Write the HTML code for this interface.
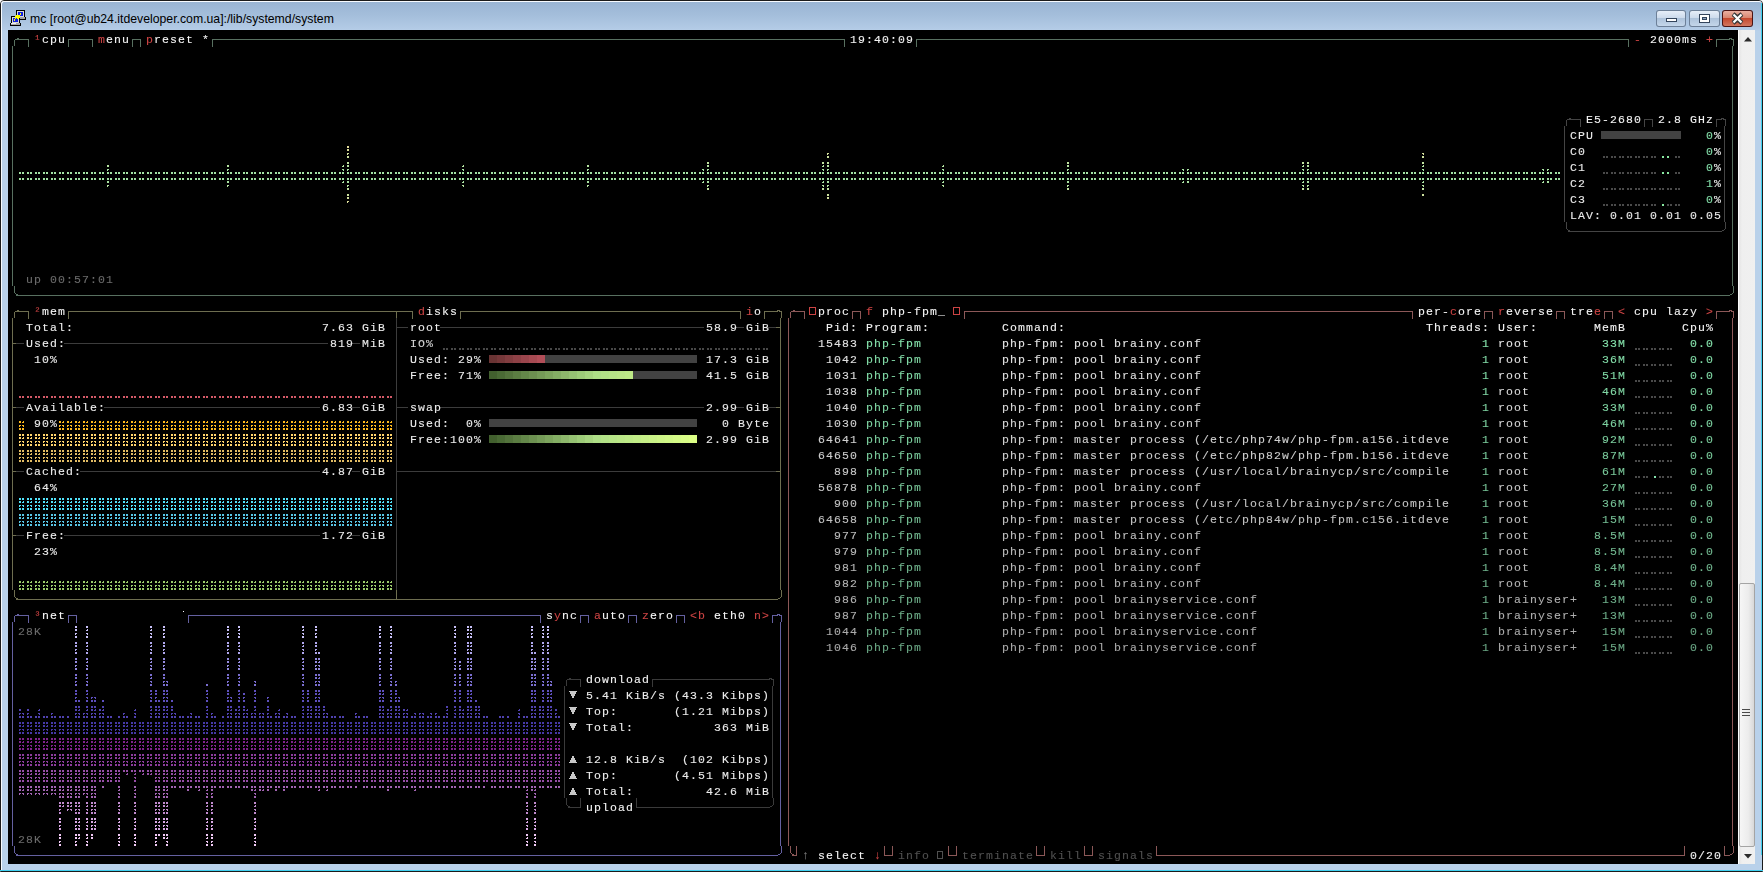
<!DOCTYPE html>
<html><head><meta charset="utf-8"><style>
html,body{margin:0;padding:0;width:1763px;height:872px;overflow:hidden;background:#ffffff;}
#frame{position:absolute;left:0;top:0;width:1763px;height:872px;box-sizing:border-box;border:1px solid #1b1b1b;border-radius:4px 4px 0 0;
 background:linear-gradient(to bottom,#99b4d3 0px,#a4bedb 14px,#b3cbe6 28px,#b9d1ea 30px,#b9d1ea 100%);}
#inner{position:absolute;left:0;top:0;right:0;bottom:0;border-left:1px solid #f8fbff;border-top:1px solid #f8fbff;border-radius:3px 3px 0 0;}
#ttl{position:absolute;left:30px;top:11px;font-family:"Liberation Sans",sans-serif;font-size:12.25px;line-height:16px;color:#000;white-space:pre;}
#term{position:absolute;left:8px;top:30px;width:1730px;height:834px;background:#000;}
#sb{position:absolute;left:1738px;top:30px;width:17px;height:834px;background:linear-gradient(to right,#fdfdfd 0,#fdfdfd 1px,#e4e4e4 1px,#efefef 4px,#f0f0f0 100%);}
.ov{position:absolute;left:0;top:0;}
.t{position:absolute;font-family:"Liberation Mono",monospace;font-size:11.5px;letter-spacing:1.1px;line-height:16px;height:16px;white-space:pre;}
#txt{position:absolute;left:2px;top:2px;will-change:transform;}
.t{-webkit-text-stroke:0.1px currentColor;}
.btn{position:absolute;top:10px;height:16px;border:1px solid #6a7d94;border-radius:3px;box-sizing:border-box;
 background:linear-gradient(to bottom,#dfe9f5 0%,#c5d6ea 45%,#a9bfd8 50%,#b9cee5 100%);}
#bclose{border-color:#4e1a1a;background:linear-gradient(to bottom,#e8a493 0%,#d77a62 45%,#c2442a 50%,#d0705a 100%);}
#botline{position:absolute;left:0;top:870px;width:1763px;height:1px;background:#3fd0f0;}
#rline{position:absolute;left:1761px;top:3px;width:1px;height:852px;background:#3fd0f0;}
</style></head><body>
<div id="frame"><div id="inner"></div></div>
<div id="botline"></div><div id="rline"></div>
<div id="ttl">mc [root@ub24.itdeveloper.com.ua]:/lib/systemd/system</div>
<svg style="position:absolute;left:0;top:0" width="1763" height="30" viewBox="0 0 1763 30" shape-rendering="crispEdges">
 <!-- putty icon -->
 <rect x="16" y="10" width="9" height="8" fill="#000"/><rect x="17" y="11" width="7" height="6" fill="#d8d8d8"/><rect x="18" y="12" width="5" height="4" fill="#1020e0"/>
 <rect x="19" y="17" width="7" height="3" fill="#000"/><rect x="20" y="17" width="5" height="2" fill="#a0a0a0"/>
 <rect x="11" y="16" width="9" height="8" fill="#000"/><rect x="12" y="17" width="7" height="6" fill="#d8d8d8"/><rect x="13" y="18" width="5" height="4" fill="#1020e0"/>
 <rect x="10" y="23" width="11" height="3" fill="#000"/><rect x="11" y="23" width="9" height="2" fill="#a8a8a8"/><rect x="11" y="23" width="5" height="1" fill="#f0f0f0"/>
 <path d="M15 16h5v2h-5z M16 15h3v1h-3z M17 18h2v1h-2z" fill="#ffff00"/>
 <path d="M20 13h1v2h-1z M14 19h1v2h-1z M19 15h1v1h-1z M15 18h1v1h-1z" fill="#ffff00"/>
 <!-- min button -->
 <rect x="1656" y="10" width="30" height="17" rx="3" fill="#6d8098" shape-rendering="auto"/>
 <rect x="1657" y="11" width="28" height="15" rx="2" fill="url(#gb)" shape-rendering="auto"/>
 <rect x="1666" y="18" width="11" height="4" fill="#34455c"/><rect x="1667" y="19" width="9" height="2" fill="#fff"/>
 <!-- max button -->
 <rect x="1689" y="10" width="31" height="17" rx="3" fill="#6d8098" shape-rendering="auto"/>
 <rect x="1690" y="11" width="29" height="15" rx="2" fill="url(#gb)" shape-rendering="auto"/>
 <rect x="1699" y="14" width="11" height="9" fill="#34455c"/><rect x="1700" y="15" width="9" height="7" fill="#fff"/><rect x="1702" y="17" width="5" height="3" fill="#34455c"/><rect x="1703" y="18" width="3" height="1" fill="#8ea4c0"/>
 <!-- close button -->
 <rect x="1722" y="10" width="31" height="17" rx="3" fill="#4a1414" shape-rendering="auto"/>
 <rect x="1723" y="11" width="29" height="15" rx="2" fill="url(#gc)" shape-rendering="auto"/>
 <path d="M1733 14l4.5 3.5 4.5-3.5 M1733 23l4.5-3.5 4.5 3.5 M1737.5 17.5v2" stroke="#3a3a3a" stroke-width="4.2" fill="none" shape-rendering="auto"/>
 <path d="M1733.5 14.5l8 8 M1741.5 14.5l-8 8" stroke="#3a3a3a" stroke-width="4" fill="none" shape-rendering="auto"/>
 <path d="M1733.5 14.5l8 8 M1741.5 14.5l-8 8" stroke="#ffffff" stroke-width="2.2" fill="none" shape-rendering="auto"/>
 <defs>
  <linearGradient id="gb" x1="0" y1="0" x2="0" y2="1"><stop offset="0" stop-color="#e6eef8"/><stop offset="0.45" stop-color="#cddbec"/><stop offset="0.5" stop-color="#aec3db"/><stop offset="1" stop-color="#c4d6ea"/></linearGradient>
  <linearGradient id="gc" x1="0" y1="0" x2="0" y2="1"><stop offset="0" stop-color="#eab0a2"/><stop offset="0.45" stop-color="#d98670"/><stop offset="0.5" stop-color="#c4482e"/><stop offset="1" stop-color="#d2775f"/></linearGradient>
 </defs>
</svg>
<div id="term"></div>
<div id="sb">
 <svg style="position:absolute;left:0;top:0" width="17" height="834" viewBox="0 0 17 834">
  <path d="M6 11.5h8l-4-4.5z" fill="#2a2a2a"/>
  <path d="M6 824h8l-4 4.5z" fill="#2a2a2a"/>
 </svg>
 <div style="position:absolute;left:1px;top:553px;width:16px;height:264px;box-sizing:border-box;border:1px solid #a4a4a4;border-radius:2px;background:linear-gradient(to right,#f6f6f6,#ececec 60%,#d8d8d8);"></div>
 <div style="position:absolute;left:4px;top:679px;width:8px;height:1px;background:#4a4a4a;box-shadow:0 3px 0 #4a4a4a,0 6px 0 #4a4a4a;"></div>
</div>
<svg class="ov" width="1763" height="872" viewBox="0 0 1763 872" shape-rendering="crispEdges">
<path fill="#587060" d="M15 39h14v1h-14zM68 39h25v1h-25zM132 39h9v1h-9zM212 39h633v1h-633zM916 39h713v1h-713zM1716 39h14v1h-14zM1731 39h3v1h-3zM16 295h1714v1h-1714zM17 38h2v1h-2zM1729 38h3v1h-3zM15 293h1v1h-1zM1732 293h1v1h-1zM16 294h2v1h-2zM1730 294h2v1h-2zM28 39h1v8h-1zM68 39h1v8h-1zM92 39h1v8h-1zM132 39h1v8h-1zM140 39h1v8h-1zM212 39h1v8h-1zM844 39h1v8h-1zM916 39h1v8h-1zM1628 39h1v8h-1zM1716 39h1v8h-1zM12 46h1v240h-1zM1732 46h1v240h-1zM14 40h1v6h-1zM14 286h1v7h-1zM1733 40h1v6h-1zM1733 286h1v7h-1z"/>
<path fill="#444444" d="M1567 119h14v1h-14zM1644 119h9v1h-9zM1716 119h6v1h-6zM1723 119h3v1h-3zM1568 231h154v1h-154zM1569 118h2v1h-2zM1721 118h3v1h-3zM1567 229h1v1h-1zM1724 229h1v1h-1zM1568 230h2v1h-2zM1722 230h2v1h-2zM1580 119h1v8h-1zM1644 119h1v8h-1zM1652 119h1v8h-1zM1716 119h1v8h-1zM1564 126h1v96h-1zM1724 126h1v96h-1zM1566 120h1v6h-1zM1566 222h1v7h-1zM1725 120h1v6h-1zM1725 222h1v7h-1z"/>
<path fill="#6e6e50" d="M15 311h14v1h-14zM68 311h345v1h-345zM460 311h281v1h-281zM764 311h14v1h-14zM779 311h3v1h-3zM16 599h762v1h-762zM776 327h5v1h-5zM12 343h4v1h-4zM12 407h4v1h-4zM776 407h5v1h-5zM12 471h4v1h-4zM776 471h5v1h-5zM12 535h4v1h-4zM17 310h2v1h-2zM777 310h3v1h-3zM15 597h1v1h-1zM780 597h1v1h-1zM16 598h2v1h-2zM778 598h2v1h-2zM28 311h1v8h-1zM68 311h1v8h-1zM396 311h1v7h-1zM396 590h1v10h-1zM412 311h1v8h-1zM460 311h1v8h-1zM740 311h1v8h-1zM764 311h1v8h-1zM12 318h1v272h-1zM780 318h1v272h-1zM14 312h1v6h-1zM14 590h1v7h-1zM781 312h1v6h-1zM781 590h1v7h-1z"/>
<path fill="#3c3c3c" d="M396 327h12v1h-12zM440 327h264v1h-264zM736 327h8v1h-8zM768 327h8v1h-8zM16 407h8v1h-8zM104 407h216v1h-216zM352 407h8v1h-8zM396 407h12v1h-12zM440 407h264v1h-264zM736 407h8v1h-8zM768 407h8v1h-8zM16 471h8v1h-8zM80 471h240v1h-240zM352 471h8v1h-8zM396 471h380v1h-380zM16 343h8v1h-8zM64 343h264v1h-264zM352 343h8v1h-8zM16 535h8v1h-8zM64 535h256v1h-256zM352 535h8v1h-8zM396 318h1v272h-1z"/>
<path fill="#6460a0" d="M15 615h14v1h-14zM68 615h9v1h-9zM188 615h353v1h-353zM580 615h9v1h-9zM628 615h9v1h-9zM676 615h9v1h-9zM772 615h6v1h-6zM779 615h3v1h-3zM16 855h762v1h-762zM17 614h2v1h-2zM777 614h3v1h-3zM15 853h1v1h-1zM780 853h1v1h-1zM16 854h2v1h-2zM778 854h2v1h-2zM28 615h1v8h-1zM68 615h1v8h-1zM76 615h1v8h-1zM188 615h1v8h-1zM540 615h1v8h-1zM580 615h1v8h-1zM588 615h1v8h-1zM628 615h1v8h-1zM636 615h1v8h-1zM676 615h1v8h-1zM684 615h1v8h-1zM772 615h1v8h-1zM12 622h1v224h-1zM780 622h1v224h-1zM14 616h1v6h-1zM14 846h1v7h-1zM781 616h1v6h-1zM781 846h1v7h-1z"/>
<path fill="#3a3a3a" d="M567 679h14v1h-14zM652 679h118v1h-118zM771 679h3v1h-3zM568 807h13v1h-13zM636 807h134v1h-134zM569 678h2v1h-2zM769 678h3v1h-3zM567 805h1v1h-1zM772 805h1v1h-1zM568 806h2v1h-2zM770 806h2v1h-2zM580 679h1v8h-1zM580 798h1v10h-1zM652 679h1v8h-1zM636 798h1v10h-1zM564 686h1v112h-1zM772 686h1v112h-1zM566 680h1v6h-1zM566 798h1v7h-1zM773 680h1v6h-1zM773 798h1v7h-1z"/>
<path fill="#8c5858" d="M791 311h14v1h-14zM852 311h9v1h-9zM964 311h449v1h-449zM1484 311h9v1h-9zM1556 311h9v1h-9zM1604 311h9v1h-9zM1716 311h14v1h-14zM1731 311h3v1h-3zM792 855h5v1h-5zM884 855h9v1h-9zM948 855h9v1h-9zM1036 855h9v1h-9zM1084 855h9v1h-9zM1156 855h529v1h-529zM1724 855h6v1h-6zM793 310h2v1h-2zM1729 310h3v1h-3zM791 853h1v1h-1zM1732 853h1v1h-1zM792 854h2v1h-2zM1730 854h2v1h-2zM804 311h1v8h-1zM852 311h1v8h-1zM860 311h1v8h-1zM964 311h1v8h-1zM1412 311h1v8h-1zM1484 311h1v8h-1zM1492 311h1v8h-1zM1556 311h1v8h-1zM1564 311h1v8h-1zM1604 311h1v8h-1zM1612 311h1v8h-1zM1716 311h1v8h-1zM796 846h1v10h-1zM884 846h1v10h-1zM892 846h1v10h-1zM948 846h1v10h-1zM956 846h1v10h-1zM1036 846h1v10h-1zM1044 846h1v10h-1zM1084 846h1v10h-1zM1092 846h1v10h-1zM1156 846h1v10h-1zM1684 846h1v10h-1zM1724 846h1v10h-1zM788 318h1v528h-1zM1732 318h1v528h-1zM790 312h1v6h-1zM790 846h1v7h-1zM1733 312h1v6h-1zM1733 846h1v7h-1z"/>
<path fill="#424242" d="M1601 131h80v8h-80zM545 355h8v8h-8zM553 355h8v8h-8zM561 355h8v8h-8zM569 355h8v8h-8zM577 355h8v8h-8zM585 355h8v8h-8zM593 355h8v8h-8zM601 355h8v8h-8zM609 355h8v8h-8zM617 355h8v8h-8zM625 355h8v8h-8zM633 355h8v8h-8zM641 355h8v8h-8zM649 355h8v8h-8zM657 355h8v8h-8zM665 355h8v8h-8zM673 355h8v8h-8zM681 355h8v8h-8zM689 355h8v8h-8zM633 371h8v8h-8zM641 371h8v8h-8zM649 371h8v8h-8zM657 371h8v8h-8zM665 371h8v8h-8zM673 371h8v8h-8zM681 371h8v8h-8zM689 371h8v8h-8zM489 419h8v8h-8zM497 419h8v8h-8zM505 419h8v8h-8zM513 419h8v8h-8zM521 419h8v8h-8zM529 419h8v8h-8zM537 419h8v8h-8zM545 419h8v8h-8zM553 419h8v8h-8zM561 419h8v8h-8zM569 419h8v8h-8zM577 419h8v8h-8zM585 419h8v8h-8zM593 419h8v8h-8zM601 419h8v8h-8zM609 419h8v8h-8zM617 419h8v8h-8zM625 419h8v8h-8zM633 419h8v8h-8zM641 419h8v8h-8zM649 419h8v8h-8zM657 419h8v8h-8zM665 419h8v8h-8zM673 419h8v8h-8zM681 419h8v8h-8zM689 419h8v8h-8z"/>
<path fill="#6a3434" d="M489 355h8v8h-8z"/>
<path fill="#76383a" d="M497 355h8v8h-8z"/>
<path fill="#823d40" d="M505 355h8v8h-8z"/>
<path fill="#8e4146" d="M513 355h8v8h-8z"/>
<path fill="#9a454c" d="M521 355h8v8h-8z"/>
<path fill="#a64a52" d="M529 355h8v8h-8z"/>
<path fill="#b24e58" d="M537 355h8v8h-8z"/>
<path fill="#42602e" d="M489 371h8v8h-8zM489 435h8v8h-8z"/>
<path fill="#4a6a35" d="M497 371h8v8h-8zM497 435h8v8h-8z"/>
<path fill="#53733c" d="M505 371h8v8h-8zM505 435h8v8h-8z"/>
<path fill="#5b7d42" d="M513 371h8v8h-8zM513 435h8v8h-8z"/>
<path fill="#638749" d="M521 371h8v8h-8zM521 435h8v8h-8z"/>
<path fill="#6c9050" d="M529 371h8v8h-8zM529 435h8v8h-8z"/>
<path fill="#749a57" d="M537 371h8v8h-8zM537 435h8v8h-8z"/>
<path fill="#7ca45d" d="M545 371h8v8h-8zM545 435h8v8h-8z"/>
<path fill="#84ae64" d="M553 371h8v8h-8zM553 435h8v8h-8z"/>
<path fill="#8db76b" d="M561 371h8v8h-8zM561 435h8v8h-8z"/>
<path fill="#95c172" d="M569 371h8v8h-8zM569 435h8v8h-8z"/>
<path fill="#9dcb78" d="M577 371h8v8h-8zM577 435h8v8h-8z"/>
<path fill="#a6d47f" d="M585 371h8v8h-8zM585 435h8v8h-8z"/>
<path fill="#aede86" d="M593 371h8v8h-8zM593 435h8v8h-8z"/>
<path fill="#b2e186" d="M601 371h8v8h-8zM601 435h8v8h-8z"/>
<path fill="#b6e486" d="M609 371h8v8h-8zM609 435h8v8h-8z"/>
<path fill="#bae686" d="M617 371h8v8h-8zM617 435h8v8h-8z"/>
<path fill="#bde986" d="M625 371h8v8h-8zM625 435h8v8h-8z"/>
<path fill="#c1ec86" d="M633 435h8v8h-8z"/>
<path fill="#c5ee86" d="M641 435h8v8h-8z"/>
<path fill="#c9f186" d="M649 435h8v8h-8z"/>
<path fill="#cdf486" d="M657 435h8v8h-8z"/>
<path fill="#d0f786" d="M665 435h8v8h-8z"/>
<path fill="#d4fa86" d="M673 435h8v8h-8z"/>
<path fill="#d8fc86" d="M681 435h8v8h-8z"/>
<path fill="#dcff86" d="M689 435h8v8h-8z"/>
<path fill="#a2e2a4" d="M19 172h2v2h-2zM19 178h2v2h-2zM22 172h2v2h-2zM22 178h2v2h-2zM27 172h2v2h-2zM27 178h2v2h-2zM30 172h2v2h-2zM30 178h2v2h-2zM35 172h2v2h-2zM35 178h2v2h-2zM38 172h2v2h-2zM38 178h2v2h-2zM43 172h2v2h-2zM43 178h2v2h-2zM46 172h2v2h-2zM46 178h2v2h-2zM51 172h2v2h-2zM51 178h2v2h-2zM54 172h2v2h-2zM54 178h2v2h-2zM59 172h2v2h-2zM59 178h2v2h-2zM62 172h2v2h-2zM62 178h2v2h-2zM67 172h2v2h-2zM67 178h2v2h-2zM70 172h2v2h-2zM70 178h2v2h-2zM75 172h2v2h-2zM75 178h2v2h-2zM78 172h2v2h-2zM78 178h2v2h-2zM83 172h2v2h-2zM83 178h2v2h-2zM86 172h2v2h-2zM86 178h2v2h-2zM91 172h2v2h-2zM91 178h2v2h-2zM94 172h2v2h-2zM94 178h2v2h-2zM99 172h2v2h-2zM99 178h2v2h-2zM102 172h2v2h-2zM102 178h2v2h-2zM107 172h2v2h-2zM107 178h2v2h-2zM110 172h2v2h-2zM110 178h2v2h-2zM115 172h2v2h-2zM115 178h2v2h-2zM118 172h2v2h-2zM118 178h2v2h-2zM123 172h2v2h-2zM123 178h2v2h-2zM126 172h2v2h-2zM126 178h2v2h-2zM131 172h2v2h-2zM131 178h2v2h-2zM134 172h2v2h-2zM134 178h2v2h-2zM139 172h2v2h-2zM139 178h2v2h-2zM142 172h2v2h-2zM142 178h2v2h-2zM147 172h2v2h-2zM147 178h2v2h-2zM150 172h2v2h-2zM150 178h2v2h-2zM155 172h2v2h-2zM155 178h2v2h-2zM158 172h2v2h-2zM158 178h2v2h-2zM163 172h2v2h-2zM163 178h2v2h-2zM166 172h2v2h-2zM166 178h2v2h-2zM171 172h2v2h-2zM171 178h2v2h-2zM174 172h2v2h-2zM174 178h2v2h-2zM179 172h2v2h-2zM179 178h2v2h-2zM182 172h2v2h-2zM182 178h2v2h-2zM187 172h2v2h-2zM187 178h2v2h-2zM190 172h2v2h-2zM190 178h2v2h-2zM195 172h2v2h-2zM195 178h2v2h-2zM198 172h2v2h-2zM198 178h2v2h-2zM203 172h2v2h-2zM203 178h2v2h-2zM206 172h2v2h-2zM206 178h2v2h-2zM211 172h2v2h-2zM211 178h2v2h-2zM214 172h2v2h-2zM214 178h2v2h-2zM219 172h2v2h-2zM219 178h2v2h-2zM222 172h2v2h-2zM222 178h2v2h-2zM227 172h2v2h-2zM227 178h2v2h-2zM230 172h2v2h-2zM230 178h2v2h-2zM235 172h2v2h-2zM235 178h2v2h-2zM238 172h2v2h-2zM238 178h2v2h-2zM243 172h2v2h-2zM243 178h2v2h-2zM246 172h2v2h-2zM246 178h2v2h-2zM251 172h2v2h-2zM251 178h2v2h-2zM254 172h2v2h-2zM254 178h2v2h-2zM259 172h2v2h-2zM259 178h2v2h-2zM262 172h2v2h-2zM262 178h2v2h-2zM267 172h2v2h-2zM267 178h2v2h-2zM270 172h2v2h-2zM270 178h2v2h-2zM275 172h2v2h-2zM275 178h2v2h-2zM278 172h2v2h-2zM278 178h2v2h-2zM283 172h2v2h-2zM283 178h2v2h-2zM286 172h2v2h-2zM286 178h2v2h-2zM291 172h2v2h-2zM291 178h2v2h-2zM294 172h2v2h-2zM294 178h2v2h-2zM299 172h2v2h-2zM299 178h2v2h-2zM302 172h2v2h-2zM302 178h2v2h-2zM307 172h2v2h-2zM307 178h2v2h-2zM310 172h2v2h-2zM310 178h2v2h-2zM315 172h2v2h-2zM315 178h2v2h-2zM318 172h2v2h-2zM318 178h2v2h-2zM323 172h2v2h-2zM323 178h2v2h-2zM326 172h2v2h-2zM326 178h2v2h-2zM331 172h2v2h-2zM331 178h2v2h-2zM334 172h2v2h-2zM334 178h2v2h-2zM339 172h2v2h-2zM339 178h2v2h-2zM342 172h2v2h-2zM342 178h2v2h-2zM347 172h2v2h-2zM347 178h2v2h-2zM350 172h2v2h-2zM350 178h2v2h-2zM355 172h2v2h-2zM355 178h2v2h-2zM358 172h2v2h-2zM358 178h2v2h-2zM363 172h2v2h-2zM363 178h2v2h-2zM366 172h2v2h-2zM366 178h2v2h-2zM371 172h2v2h-2zM371 178h2v2h-2zM374 172h2v2h-2zM374 178h2v2h-2zM379 172h2v2h-2zM379 178h2v2h-2zM382 172h2v2h-2zM382 178h2v2h-2zM387 172h2v2h-2zM387 178h2v2h-2zM390 172h2v2h-2zM390 178h2v2h-2zM395 172h2v2h-2zM395 178h2v2h-2zM398 172h2v2h-2zM398 178h2v2h-2zM403 172h2v2h-2zM403 178h2v2h-2zM406 172h2v2h-2zM406 178h2v2h-2zM411 172h2v2h-2zM411 178h2v2h-2zM414 172h2v2h-2zM414 178h2v2h-2zM419 172h2v2h-2zM419 178h2v2h-2zM422 172h2v2h-2zM422 178h2v2h-2zM427 172h2v2h-2zM427 178h2v2h-2zM430 172h2v2h-2zM430 178h2v2h-2zM435 172h2v2h-2zM435 178h2v2h-2zM438 172h2v2h-2zM438 178h2v2h-2zM443 172h2v2h-2zM443 178h2v2h-2zM446 172h2v2h-2zM446 178h2v2h-2zM451 172h2v2h-2zM451 178h2v2h-2zM454 172h2v2h-2zM454 178h2v2h-2zM459 172h2v2h-2zM459 178h2v2h-2zM462 172h2v2h-2zM462 178h2v2h-2zM467 172h2v2h-2zM467 178h2v2h-2zM470 172h2v2h-2zM470 178h2v2h-2zM475 172h2v2h-2zM475 178h2v2h-2zM478 172h2v2h-2zM478 178h2v2h-2zM483 172h2v2h-2zM483 178h2v2h-2zM486 172h2v2h-2zM486 178h2v2h-2zM491 172h2v2h-2zM491 178h2v2h-2zM494 172h2v2h-2zM494 178h2v2h-2zM499 172h2v2h-2zM499 178h2v2h-2zM502 172h2v2h-2zM502 178h2v2h-2zM507 172h2v2h-2zM507 178h2v2h-2zM510 172h2v2h-2zM510 178h2v2h-2zM515 172h2v2h-2zM515 178h2v2h-2zM518 172h2v2h-2zM518 178h2v2h-2zM523 172h2v2h-2zM523 178h2v2h-2zM526 172h2v2h-2zM526 178h2v2h-2zM531 172h2v2h-2zM531 178h2v2h-2zM534 172h2v2h-2zM534 178h2v2h-2zM539 172h2v2h-2zM539 178h2v2h-2zM542 172h2v2h-2zM542 178h2v2h-2zM547 172h2v2h-2zM547 178h2v2h-2zM550 172h2v2h-2zM550 178h2v2h-2zM555 172h2v2h-2zM555 178h2v2h-2zM558 172h2v2h-2zM558 178h2v2h-2zM563 172h2v2h-2zM563 178h2v2h-2zM566 172h2v2h-2zM566 178h2v2h-2zM571 172h2v2h-2zM571 178h2v2h-2zM574 172h2v2h-2zM574 178h2v2h-2zM579 172h2v2h-2zM579 178h2v2h-2zM582 172h2v2h-2zM582 178h2v2h-2zM587 172h2v2h-2zM587 178h2v2h-2zM590 172h2v2h-2zM590 178h2v2h-2zM595 172h2v2h-2zM595 178h2v2h-2zM598 172h2v2h-2zM598 178h2v2h-2zM603 172h2v2h-2zM603 178h2v2h-2zM606 172h2v2h-2zM606 178h2v2h-2zM611 172h2v2h-2zM611 178h2v2h-2zM614 172h2v2h-2zM614 178h2v2h-2zM619 172h2v2h-2zM619 178h2v2h-2zM622 172h2v2h-2zM622 178h2v2h-2zM627 172h2v2h-2zM627 178h2v2h-2zM630 172h2v2h-2zM630 178h2v2h-2zM635 172h2v2h-2zM635 178h2v2h-2zM638 172h2v2h-2zM638 178h2v2h-2zM643 172h2v2h-2zM643 178h2v2h-2zM646 172h2v2h-2zM646 178h2v2h-2zM651 172h2v2h-2zM651 178h2v2h-2zM654 172h2v2h-2zM654 178h2v2h-2zM659 172h2v2h-2zM659 178h2v2h-2zM662 172h2v2h-2zM662 178h2v2h-2zM667 172h2v2h-2zM667 178h2v2h-2zM670 172h2v2h-2zM670 178h2v2h-2zM675 172h2v2h-2zM675 178h2v2h-2zM678 172h2v2h-2zM678 178h2v2h-2zM683 172h2v2h-2zM683 178h2v2h-2zM686 172h2v2h-2zM686 178h2v2h-2zM691 172h2v2h-2zM691 178h2v2h-2zM694 172h2v2h-2zM694 178h2v2h-2zM699 172h2v2h-2zM699 178h2v2h-2zM702 172h2v2h-2zM702 178h2v2h-2zM707 172h2v2h-2zM707 178h2v2h-2zM710 172h2v2h-2zM710 178h2v2h-2zM715 172h2v2h-2zM715 178h2v2h-2zM718 172h2v2h-2zM718 178h2v2h-2zM723 172h2v2h-2zM723 178h2v2h-2zM726 172h2v2h-2zM726 178h2v2h-2zM731 172h2v2h-2zM731 178h2v2h-2zM734 172h2v2h-2zM734 178h2v2h-2zM739 172h2v2h-2zM739 178h2v2h-2zM742 172h2v2h-2zM742 178h2v2h-2zM747 172h2v2h-2zM747 178h2v2h-2zM750 172h2v2h-2zM750 178h2v2h-2zM755 172h2v2h-2zM755 178h2v2h-2zM758 172h2v2h-2zM758 178h2v2h-2zM763 172h2v2h-2zM763 178h2v2h-2zM766 172h2v2h-2zM766 178h2v2h-2zM771 172h2v2h-2zM771 178h2v2h-2zM774 172h2v2h-2zM774 178h2v2h-2zM779 172h2v2h-2zM779 178h2v2h-2zM782 172h2v2h-2zM782 178h2v2h-2zM787 172h2v2h-2zM787 178h2v2h-2zM790 172h2v2h-2zM790 178h2v2h-2zM795 172h2v2h-2zM795 178h2v2h-2zM798 172h2v2h-2zM798 178h2v2h-2zM803 172h2v2h-2zM803 178h2v2h-2zM806 172h2v2h-2zM806 178h2v2h-2zM811 172h2v2h-2zM811 178h2v2h-2zM814 172h2v2h-2zM814 178h2v2h-2zM819 172h2v2h-2zM819 178h2v2h-2zM822 172h2v2h-2zM822 178h2v2h-2zM827 172h2v2h-2zM827 178h2v2h-2zM830 172h2v2h-2zM830 178h2v2h-2zM835 172h2v2h-2zM835 178h2v2h-2zM838 172h2v2h-2zM838 178h2v2h-2zM843 172h2v2h-2zM843 178h2v2h-2zM846 172h2v2h-2zM846 178h2v2h-2zM851 172h2v2h-2zM851 178h2v2h-2zM854 172h2v2h-2zM854 178h2v2h-2zM859 172h2v2h-2zM859 178h2v2h-2zM862 172h2v2h-2zM862 178h2v2h-2zM867 172h2v2h-2zM867 178h2v2h-2zM870 172h2v2h-2zM870 178h2v2h-2zM875 172h2v2h-2zM875 178h2v2h-2zM878 172h2v2h-2zM878 178h2v2h-2zM883 172h2v2h-2zM883 178h2v2h-2zM886 172h2v2h-2zM886 178h2v2h-2zM891 172h2v2h-2zM891 178h2v2h-2zM894 172h2v2h-2zM894 178h2v2h-2zM899 172h2v2h-2zM899 178h2v2h-2zM902 172h2v2h-2zM902 178h2v2h-2zM907 172h2v2h-2zM907 178h2v2h-2zM910 172h2v2h-2zM910 178h2v2h-2zM915 172h2v2h-2zM915 178h2v2h-2zM918 172h2v2h-2zM918 178h2v2h-2zM923 172h2v2h-2zM923 178h2v2h-2zM926 172h2v2h-2zM926 178h2v2h-2zM931 172h2v2h-2zM931 178h2v2h-2zM934 172h2v2h-2zM934 178h2v2h-2zM939 172h2v2h-2zM939 178h2v2h-2zM942 172h2v2h-2zM942 178h2v2h-2zM947 172h2v2h-2zM947 178h2v2h-2zM950 172h2v2h-2zM950 178h2v2h-2zM955 172h2v2h-2zM955 178h2v2h-2zM958 172h2v2h-2zM958 178h2v2h-2zM963 172h2v2h-2zM963 178h2v2h-2zM966 172h2v2h-2zM966 178h2v2h-2zM971 172h2v2h-2zM971 178h2v2h-2zM974 172h2v2h-2zM974 178h2v2h-2zM979 172h2v2h-2zM979 178h2v2h-2zM982 172h2v2h-2zM982 178h2v2h-2zM987 172h2v2h-2zM987 178h2v2h-2zM990 172h2v2h-2zM990 178h2v2h-2zM995 172h2v2h-2zM995 178h2v2h-2zM998 172h2v2h-2zM998 178h2v2h-2zM1003 172h2v2h-2zM1003 178h2v2h-2zM1006 172h2v2h-2zM1006 178h2v2h-2zM1011 172h2v2h-2zM1011 178h2v2h-2zM1014 172h2v2h-2zM1014 178h2v2h-2zM1019 172h2v2h-2zM1019 178h2v2h-2zM1022 172h2v2h-2zM1022 178h2v2h-2zM1027 172h2v2h-2zM1027 178h2v2h-2zM1030 172h2v2h-2zM1030 178h2v2h-2zM1035 172h2v2h-2zM1035 178h2v2h-2zM1038 172h2v2h-2zM1038 178h2v2h-2zM1043 172h2v2h-2zM1043 178h2v2h-2zM1046 172h2v2h-2zM1046 178h2v2h-2zM1051 172h2v2h-2zM1051 178h2v2h-2zM1054 172h2v2h-2zM1054 178h2v2h-2zM1059 172h2v2h-2zM1059 178h2v2h-2zM1062 172h2v2h-2zM1062 178h2v2h-2zM1067 172h2v2h-2zM1067 178h2v2h-2zM1070 172h2v2h-2zM1070 178h2v2h-2zM1075 172h2v2h-2zM1075 178h2v2h-2zM1078 172h2v2h-2zM1078 178h2v2h-2zM1083 172h2v2h-2zM1083 178h2v2h-2zM1086 172h2v2h-2zM1086 178h2v2h-2zM1091 172h2v2h-2zM1091 178h2v2h-2zM1094 172h2v2h-2zM1094 178h2v2h-2zM1099 172h2v2h-2zM1099 178h2v2h-2zM1102 172h2v2h-2zM1102 178h2v2h-2zM1107 172h2v2h-2zM1107 178h2v2h-2zM1110 172h2v2h-2zM1110 178h2v2h-2zM1115 172h2v2h-2zM1115 178h2v2h-2zM1118 172h2v2h-2zM1118 178h2v2h-2zM1123 172h2v2h-2zM1123 178h2v2h-2zM1126 172h2v2h-2zM1126 178h2v2h-2zM1131 172h2v2h-2zM1131 178h2v2h-2zM1134 172h2v2h-2zM1134 178h2v2h-2zM1139 172h2v2h-2zM1139 178h2v2h-2zM1142 172h2v2h-2zM1142 178h2v2h-2zM1147 172h2v2h-2zM1147 178h2v2h-2zM1150 172h2v2h-2zM1150 178h2v2h-2zM1155 172h2v2h-2zM1155 178h2v2h-2zM1158 172h2v2h-2zM1158 178h2v2h-2zM1163 172h2v2h-2zM1163 178h2v2h-2zM1166 172h2v2h-2zM1166 178h2v2h-2zM1171 172h2v2h-2zM1171 178h2v2h-2zM1174 172h2v2h-2zM1174 178h2v2h-2zM1179 172h2v2h-2zM1179 178h2v2h-2zM1182 172h2v2h-2zM1182 178h2v2h-2zM1187 172h2v2h-2zM1187 178h2v2h-2zM1190 172h2v2h-2zM1190 178h2v2h-2zM1195 172h2v2h-2zM1195 178h2v2h-2zM1198 172h2v2h-2zM1198 178h2v2h-2zM1203 172h2v2h-2zM1203 178h2v2h-2zM1206 172h2v2h-2zM1206 178h2v2h-2zM1211 172h2v2h-2zM1211 178h2v2h-2zM1214 172h2v2h-2zM1214 178h2v2h-2zM1219 172h2v2h-2zM1219 178h2v2h-2zM1222 172h2v2h-2zM1222 178h2v2h-2zM1227 172h2v2h-2zM1227 178h2v2h-2zM1230 172h2v2h-2zM1230 178h2v2h-2zM1235 172h2v2h-2zM1235 178h2v2h-2zM1238 172h2v2h-2zM1238 178h2v2h-2zM1243 172h2v2h-2zM1243 178h2v2h-2zM1246 172h2v2h-2zM1246 178h2v2h-2zM1251 172h2v2h-2zM1251 178h2v2h-2zM1254 172h2v2h-2zM1254 178h2v2h-2zM1259 172h2v2h-2zM1259 178h2v2h-2zM1262 172h2v2h-2zM1262 178h2v2h-2zM1267 172h2v2h-2zM1267 178h2v2h-2zM1270 172h2v2h-2zM1270 178h2v2h-2zM1275 172h2v2h-2zM1275 178h2v2h-2zM1278 172h2v2h-2zM1278 178h2v2h-2zM1283 172h2v2h-2zM1283 178h2v2h-2zM1286 172h2v2h-2zM1286 178h2v2h-2zM1291 172h2v2h-2zM1291 178h2v2h-2zM1294 172h2v2h-2zM1294 178h2v2h-2zM1299 172h2v2h-2zM1299 178h2v2h-2zM1302 172h2v2h-2zM1302 178h2v2h-2zM1307 172h2v2h-2zM1307 178h2v2h-2zM1310 172h2v2h-2zM1310 178h2v2h-2zM1315 172h2v2h-2zM1315 178h2v2h-2zM1318 172h2v2h-2zM1318 178h2v2h-2zM1323 172h2v2h-2zM1323 178h2v2h-2zM1326 172h2v2h-2zM1326 178h2v2h-2zM1331 172h2v2h-2zM1331 178h2v2h-2zM1334 172h2v2h-2zM1334 178h2v2h-2zM1339 172h2v2h-2zM1339 178h2v2h-2zM1342 172h2v2h-2zM1342 178h2v2h-2zM1347 172h2v2h-2zM1347 178h2v2h-2zM1350 172h2v2h-2zM1350 178h2v2h-2zM1355 172h2v2h-2zM1355 178h2v2h-2zM1358 172h2v2h-2zM1358 178h2v2h-2zM1363 172h2v2h-2zM1363 178h2v2h-2zM1366 172h2v2h-2zM1366 178h2v2h-2zM1371 172h2v2h-2zM1371 178h2v2h-2zM1374 172h2v2h-2zM1374 178h2v2h-2zM1379 172h2v2h-2zM1379 178h2v2h-2zM1382 172h2v2h-2zM1382 178h2v2h-2zM1387 172h2v2h-2zM1387 178h2v2h-2zM1390 172h2v2h-2zM1390 178h2v2h-2zM1395 172h2v2h-2zM1395 178h2v2h-2zM1398 172h2v2h-2zM1398 178h2v2h-2zM1403 172h2v2h-2zM1403 178h2v2h-2zM1406 172h2v2h-2zM1406 178h2v2h-2zM1411 172h2v2h-2zM1411 178h2v2h-2zM1414 172h2v2h-2zM1414 178h2v2h-2zM1419 172h2v2h-2zM1419 178h2v2h-2zM1422 172h2v2h-2zM1422 178h2v2h-2zM1427 172h2v2h-2zM1427 178h2v2h-2zM1430 172h2v2h-2zM1430 178h2v2h-2zM1435 172h2v2h-2zM1435 178h2v2h-2zM1438 172h2v2h-2zM1438 178h2v2h-2zM1443 172h2v2h-2zM1443 178h2v2h-2zM1446 172h2v2h-2zM1446 178h2v2h-2zM1451 172h2v2h-2zM1451 178h2v2h-2zM1454 172h2v2h-2zM1454 178h2v2h-2zM1459 172h2v2h-2zM1459 178h2v2h-2zM1462 172h2v2h-2zM1462 178h2v2h-2zM1467 172h2v2h-2zM1467 178h2v2h-2zM1470 172h2v2h-2zM1470 178h2v2h-2zM1475 172h2v2h-2zM1475 178h2v2h-2zM1478 172h2v2h-2zM1478 178h2v2h-2zM1483 172h2v2h-2zM1483 178h2v2h-2zM1486 172h2v2h-2zM1486 178h2v2h-2zM1491 172h2v2h-2zM1491 178h2v2h-2zM1494 172h2v2h-2zM1494 178h2v2h-2zM1499 172h2v2h-2zM1499 178h2v2h-2zM1502 172h2v2h-2zM1502 178h2v2h-2zM1507 172h2v2h-2zM1507 178h2v2h-2zM1510 172h2v2h-2zM1510 178h2v2h-2zM1515 172h2v2h-2zM1515 178h2v2h-2zM1518 172h2v2h-2zM1518 178h2v2h-2zM1523 172h2v2h-2zM1523 178h2v2h-2zM1526 172h2v2h-2zM1526 178h2v2h-2zM1531 172h2v2h-2zM1531 178h2v2h-2zM1534 172h2v2h-2zM1534 178h2v2h-2zM1539 172h2v2h-2zM1539 178h2v2h-2zM1542 172h2v2h-2zM1542 178h2v2h-2zM1547 172h2v2h-2zM1547 178h2v2h-2zM1550 172h2v2h-2zM1550 178h2v2h-2zM1555 172h2v2h-2zM1555 178h2v2h-2zM1558 172h2v2h-2zM1558 178h2v2h-2z"/>
<path fill="#a8e2a2" d="M107 169h2v1h-1v1h-1zM107 181h2v2h-2zM227 169h2v1h-1v1h-1zM227 181h2v2h-2zM342 169h2v2h-1v-1h-1zM343 181h1v2h-2v-1h1zM347 169h2v1h-1v1h-1zM347 181h2v2h-2zM462 169h2v2h-1v-1h-1zM463 181h1v2h-2v-1h1zM587 169h2v1h-1v1h-1zM587 181h2v2h-2zM702 169h2v2h-1v-1h-1zM703 181h1v2h-2v-1h1zM707 169h2v1h-1v1h-1zM707 181h2v2h-2zM822 169h2v2h-1v-1h-1zM823 181h1v2h-2v-1h1zM827 169h2v1h-1v1h-1zM827 181h2v2h-2zM942 169h2v2h-1v-1h-1zM943 181h1v2h-2v-1h1zM1067 169h2v1h-1v1h-1zM1067 181h2v2h-2zM1182 169h2v2h-1v-1h-1zM1183 181h1v2h-2v-1h1zM1187 169h2v1h-1v1h-1zM1187 181h2v2h-2zM1302 169h2v2h-1v-1h-1zM1303 181h1v2h-2v-1h1zM1307 169h2v1h-1v1h-1zM1307 181h2v2h-2zM1422 169h2v2h-1v-1h-1zM1423 181h1v2h-2v-1h1zM1542 169h2v2h-1v-1h-1zM1543 181h1v2h-2v-1h1zM1547 169h2v1h-1v1h-1zM1547 181h2v2h-2z"/>
<path fill="#b4e2a0" d="M107 165h2v2h-2zM107 185h2v1h-1v1h-1zM227 165h2v2h-2zM227 185h2v1h-1v1h-1zM343 165h1v2h-2v-1h1zM347 165h2v2h-2zM347 185h2v1h-1v1h-1zM463 165h1v2h-2v-1h1zM462 185h2v2h-1v-1h-1zM587 165h2v2h-2zM587 185h2v1h-1v1h-1zM707 165h2v2h-2zM707 185h2v1h-1v1h-1zM823 165h1v2h-2v-1h1zM822 185h2v2h-1v-1h-1zM827 165h2v2h-2zM827 185h2v1h-1v1h-1zM943 165h1v2h-2v-1h1zM942 185h2v2h-1v-1h-1zM1067 165h2v2h-2zM1067 185h2v1h-1v1h-1zM1303 165h1v2h-2v-1h1zM1302 185h2v2h-1v-1h-1zM1307 165h2v2h-2zM1307 185h2v1h-1v1h-1zM1423 165h1v2h-2v-1h1zM1422 185h2v2h-1v-1h-1z"/>
<path fill="#c0e2a0" d="M347 162h2v2h-2zM347 188h2v2h-2zM707 162h2v2h-2zM707 188h2v2h-2zM822 162h2v2h-2zM822 188h2v2h-2zM827 162h2v2h-2zM827 188h2v2h-2zM1067 162h2v2h-2zM1067 188h2v2h-2zM1302 162h2v2h-2zM1302 188h2v2h-2zM1307 162h2v2h-2zM1307 188h2v2h-2zM1422 162h2v2h-2zM1422 188h2v2h-2z"/>
<path fill="#cce09e" d="M347 156h2v2h-2zM347 194h2v2h-2zM827 156h2v2h-2zM827 194h2v2h-2zM1422 156h2v2h-2zM1422 194h2v2h-2z"/>
<path fill="#d4de9c" d="M347 153h2v1h-1v1h-1zM347 197h2v2h-2zM827 153h2v1h-1v1h-1zM827 197h2v2h-2zM1422 153h2v2h-1v-1h-1z"/>
<path fill="#dcdc9a" d="M347 149h2v2h-2zM347 201h2v1h-1v1h-1z"/>
<path fill="#e0d898" d="M347 146h2v2h-2z"/>
<path fill="#4a4a4a" d="M1603 156h2v2h-2zM1606 156h2v2h-2zM1611 156h2v2h-2zM1614 156h2v2h-2zM1619 156h2v2h-2zM1622 156h2v2h-2zM1627 156h2v2h-2zM1630 156h2v2h-2zM1635 156h2v2h-2zM1638 156h2v2h-2zM1643 156h2v2h-2zM1646 156h2v2h-2zM1651 156h2v2h-2zM1654 156h2v2h-2zM1675 156h2v2h-2zM1678 156h2v2h-2zM1603 172h2v2h-2zM1606 172h2v2h-2zM1611 172h2v2h-2zM1614 172h2v2h-2zM1619 172h2v2h-2zM1622 172h2v2h-2zM1627 172h2v2h-2zM1630 172h2v2h-2zM1635 172h2v2h-2zM1638 172h2v2h-2zM1643 172h2v2h-2zM1646 172h2v2h-2zM1651 172h2v2h-2zM1654 172h2v2h-2zM1675 172h2v2h-2zM1678 172h2v2h-2zM1603 188h2v2h-2zM1606 188h2v2h-2zM1611 188h2v2h-2zM1614 188h2v2h-2zM1619 188h2v2h-2zM1622 188h2v2h-2zM1627 188h2v2h-2zM1630 188h2v2h-2zM1635 188h2v2h-2zM1638 188h2v2h-2zM1643 188h2v2h-2zM1646 188h2v2h-2zM1651 188h2v2h-2zM1654 188h2v2h-2zM1659 188h2v2h-2zM1662 188h2v2h-2zM1667 188h2v2h-2zM1670 188h2v2h-2zM1675 188h2v2h-2zM1678 188h2v2h-2zM1603 204h2v2h-2zM1606 204h2v2h-2zM1611 204h2v2h-2zM1614 204h2v2h-2zM1619 204h2v2h-2zM1622 204h2v2h-2zM1627 204h2v2h-2zM1630 204h2v2h-2zM1635 204h2v2h-2zM1638 204h2v2h-2zM1643 204h2v2h-2zM1646 204h2v2h-2zM1651 204h2v2h-2zM1654 204h2v2h-2zM1667 204h2v2h-2zM1670 204h2v2h-2zM1675 204h2v2h-2zM1678 204h2v2h-2zM1635 348h2v2h-2zM1638 348h2v2h-2zM1643 348h2v2h-2zM1646 348h2v2h-2zM1651 348h2v2h-2zM1654 348h2v2h-2zM1659 348h2v2h-2zM1662 348h2v2h-2zM1667 348h2v2h-2zM1670 348h2v2h-2zM1635 364h2v2h-2zM1638 364h2v2h-2zM1643 364h2v2h-2zM1646 364h2v2h-2zM1651 364h2v2h-2zM1654 364h2v2h-2zM1659 364h2v2h-2zM1662 364h2v2h-2zM1667 364h2v2h-2zM1670 364h2v2h-2zM1635 380h2v2h-2zM1638 380h2v2h-2zM1643 380h2v2h-2zM1646 380h2v2h-2zM1651 380h2v2h-2zM1654 380h2v2h-2zM1659 380h2v2h-2zM1662 380h2v2h-2zM1667 380h2v2h-2zM1670 380h2v2h-2zM1635 396h2v2h-2zM1638 396h2v2h-2zM1643 396h2v2h-2zM1646 396h2v2h-2zM1651 396h2v2h-2zM1654 396h2v2h-2zM1659 396h2v2h-2zM1662 396h2v2h-2zM1667 396h2v2h-2zM1670 396h2v2h-2zM1635 412h2v2h-2zM1638 412h2v2h-2zM1643 412h2v2h-2zM1646 412h2v2h-2zM1651 412h2v2h-2zM1654 412h2v2h-2zM1659 412h2v2h-2zM1662 412h2v2h-2zM1667 412h2v2h-2zM1670 412h2v2h-2zM1635 428h2v2h-2zM1638 428h2v2h-2zM1643 428h2v2h-2zM1646 428h2v2h-2zM1651 428h2v2h-2zM1654 428h2v2h-2zM1659 428h2v2h-2zM1662 428h2v2h-2zM1667 428h2v2h-2zM1670 428h2v2h-2zM1635 444h2v2h-2zM1638 444h2v2h-2zM1643 444h2v2h-2zM1646 444h2v2h-2zM1651 444h2v2h-2zM1654 444h2v2h-2zM1659 444h2v2h-2zM1662 444h2v2h-2zM1667 444h2v2h-2zM1670 444h2v2h-2zM1635 460h2v2h-2zM1638 460h2v2h-2zM1643 460h2v2h-2zM1646 460h2v2h-2zM1651 460h2v2h-2zM1654 460h2v2h-2zM1659 460h2v2h-2zM1662 460h2v2h-2zM1667 460h2v2h-2zM1670 460h2v2h-2zM1635 476h2v2h-2zM1638 476h2v2h-2zM1643 476h2v2h-2zM1646 476h2v2h-2zM1659 476h2v2h-2zM1662 476h2v2h-2zM1667 476h2v2h-2zM1670 476h2v2h-2zM1635 492h2v2h-2zM1638 492h2v2h-2zM1643 492h2v2h-2zM1646 492h2v2h-2zM1651 492h2v2h-2zM1654 492h2v2h-2zM1659 492h2v2h-2zM1662 492h2v2h-2zM1667 492h2v2h-2zM1670 492h2v2h-2zM1635 508h2v2h-2zM1638 508h2v2h-2zM1643 508h2v2h-2zM1646 508h2v2h-2zM1651 508h2v2h-2zM1654 508h2v2h-2zM1659 508h2v2h-2zM1662 508h2v2h-2zM1667 508h2v2h-2zM1670 508h2v2h-2zM1635 524h2v2h-2zM1638 524h2v2h-2zM1643 524h2v2h-2zM1646 524h2v2h-2zM1651 524h2v2h-2zM1654 524h2v2h-2zM1659 524h2v2h-2zM1662 524h2v2h-2zM1667 524h2v2h-2zM1670 524h2v2h-2zM1635 540h2v2h-2zM1638 540h2v2h-2zM1643 540h2v2h-2zM1646 540h2v2h-2zM1651 540h2v2h-2zM1654 540h2v2h-2zM1659 540h2v2h-2zM1662 540h2v2h-2zM1667 540h2v2h-2zM1670 540h2v2h-2zM1635 556h2v2h-2zM1638 556h2v2h-2zM1643 556h2v2h-2zM1646 556h2v2h-2zM1651 556h2v2h-2zM1654 556h2v2h-2zM1659 556h2v2h-2zM1662 556h2v2h-2zM1667 556h2v2h-2zM1670 556h2v2h-2zM1635 572h2v2h-2zM1638 572h2v2h-2zM1643 572h2v2h-2zM1646 572h2v2h-2zM1651 572h2v2h-2zM1654 572h2v2h-2zM1659 572h2v2h-2zM1662 572h2v2h-2zM1667 572h2v2h-2zM1670 572h2v2h-2zM1635 588h2v2h-2zM1638 588h2v2h-2zM1643 588h2v2h-2zM1646 588h2v2h-2zM1651 588h2v2h-2zM1654 588h2v2h-2zM1659 588h2v2h-2zM1662 588h2v2h-2zM1667 588h2v2h-2zM1670 588h2v2h-2zM1635 604h2v2h-2zM1638 604h2v2h-2zM1643 604h2v2h-2zM1646 604h2v2h-2zM1651 604h2v2h-2zM1654 604h2v2h-2zM1659 604h2v2h-2zM1662 604h2v2h-2zM1667 604h2v2h-2zM1670 604h2v2h-2zM1635 620h2v2h-2zM1638 620h2v2h-2zM1643 620h2v2h-2zM1646 620h2v2h-2zM1651 620h2v2h-2zM1654 620h2v2h-2zM1659 620h2v2h-2zM1662 620h2v2h-2zM1667 620h2v2h-2zM1670 620h2v2h-2zM1635 636h2v2h-2zM1638 636h2v2h-2zM1643 636h2v2h-2zM1646 636h2v2h-2zM1651 636h2v2h-2zM1654 636h2v2h-2zM1659 636h2v2h-2zM1662 636h2v2h-2zM1667 636h2v2h-2zM1670 636h2v2h-2zM1635 652h2v2h-2zM1638 652h2v2h-2zM1643 652h2v2h-2zM1646 652h2v2h-2zM1651 652h2v2h-2zM1654 652h2v2h-2zM1659 652h2v2h-2zM1662 652h2v2h-2zM1667 652h2v2h-2zM1670 652h2v2h-2z"/>
<path fill="#88e8a0" d="M1662 156h2v2h-2zM1667 156h2v2h-2zM1662 172h2v2h-2zM1667 172h2v2h-2zM1662 204h2v2h-2z"/>
<path fill="#d45a68" d="M19 396h2v2h-2zM22 396h2v2h-2zM27 396h2v2h-2zM30 396h2v2h-2zM35 396h2v2h-2zM38 396h2v2h-2zM43 396h2v2h-2zM46 396h2v2h-2zM51 396h2v2h-2zM54 396h2v2h-2zM59 396h2v2h-2zM62 396h2v2h-2zM67 396h2v2h-2zM70 396h2v2h-2zM75 396h2v2h-2zM78 396h2v2h-2zM83 396h2v2h-2zM86 396h2v2h-2zM91 396h2v2h-2zM94 396h2v2h-2zM99 396h2v2h-2zM102 396h2v2h-2zM107 396h2v2h-2zM110 396h2v2h-2zM115 396h2v2h-2zM118 396h2v2h-2zM123 396h2v2h-2zM126 396h2v2h-2zM131 396h2v2h-2zM134 396h2v2h-2zM139 396h2v2h-2zM142 396h2v2h-2zM147 396h2v2h-2zM150 396h2v2h-2zM155 396h2v2h-2zM158 396h2v2h-2zM163 396h2v2h-2zM166 396h2v2h-2zM171 396h2v2h-2zM174 396h2v2h-2zM179 396h2v2h-2zM182 396h2v2h-2zM187 396h2v2h-2zM190 396h2v2h-2zM195 396h2v2h-2zM198 396h2v2h-2zM203 396h2v2h-2zM206 396h2v2h-2zM211 396h2v2h-2zM214 396h2v2h-2zM219 396h2v2h-2zM222 396h2v2h-2zM227 396h2v2h-2zM230 396h2v2h-2zM235 396h2v2h-2zM238 396h2v2h-2zM243 396h2v2h-2zM246 396h2v2h-2zM251 396h2v2h-2zM254 396h2v2h-2zM259 396h2v2h-2zM262 396h2v2h-2zM267 396h2v2h-2zM270 396h2v2h-2zM275 396h2v2h-2zM278 396h2v2h-2zM283 396h2v2h-2zM286 396h2v2h-2zM291 396h2v2h-2zM294 396h2v2h-2zM299 396h2v2h-2zM302 396h2v2h-2zM307 396h2v2h-2zM310 396h2v2h-2zM315 396h2v2h-2zM318 396h2v2h-2zM323 396h2v2h-2zM326 396h2v2h-2zM331 396h2v2h-2zM334 396h2v2h-2zM339 396h2v2h-2zM342 396h2v2h-2zM347 396h2v2h-2zM350 396h2v2h-2zM355 396h2v2h-2zM358 396h2v2h-2zM363 396h2v2h-2zM366 396h2v2h-2zM371 396h2v2h-2zM374 396h2v2h-2zM379 396h2v2h-2zM382 396h2v2h-2zM387 396h2v2h-2zM390 396h2v2h-2z"/>
<path fill="#ffba1e" d="M19 421h2v2h-2zM23 421h1v2h-2v-1h1zM19 425h2v1h-1v1h-1zM22 425h2v2h-1v-1h-1zM19 428h2v2h-2zM22 428h2v2h-2zM59 421h2v2h-2zM63 421h1v2h-2v-1h1zM59 425h2v1h-1v1h-1zM62 425h2v2h-1v-1h-1zM59 428h2v2h-2zM62 428h2v2h-2zM67 421h2v2h-2zM71 421h1v2h-2v-1h1zM67 425h2v1h-1v1h-1zM70 425h2v2h-1v-1h-1zM67 428h2v2h-2zM70 428h2v2h-2zM75 421h2v2h-2zM79 421h1v2h-2v-1h1zM75 425h2v1h-1v1h-1zM78 425h2v2h-1v-1h-1zM75 428h2v2h-2zM78 428h2v2h-2zM83 421h2v2h-2zM87 421h1v2h-2v-1h1zM83 425h2v1h-1v1h-1zM86 425h2v2h-1v-1h-1zM83 428h2v2h-2zM86 428h2v2h-2zM91 421h2v2h-2zM95 421h1v2h-2v-1h1zM91 425h2v1h-1v1h-1zM94 425h2v2h-1v-1h-1zM91 428h2v2h-2zM94 428h2v2h-2zM99 421h2v2h-2zM103 421h1v2h-2v-1h1zM99 425h2v1h-1v1h-1zM102 425h2v2h-1v-1h-1zM99 428h2v2h-2zM102 428h2v2h-2zM107 421h2v2h-2zM111 421h1v2h-2v-1h1zM107 425h2v1h-1v1h-1zM110 425h2v2h-1v-1h-1zM107 428h2v2h-2zM110 428h2v2h-2zM115 421h2v2h-2zM119 421h1v2h-2v-1h1zM115 425h2v1h-1v1h-1zM118 425h2v2h-1v-1h-1zM115 428h2v2h-2zM118 428h2v2h-2zM123 421h2v2h-2zM127 421h1v2h-2v-1h1zM123 425h2v1h-1v1h-1zM126 425h2v2h-1v-1h-1zM123 428h2v2h-2zM126 428h2v2h-2zM131 421h2v2h-2zM135 421h1v2h-2v-1h1zM131 425h2v1h-1v1h-1zM134 425h2v2h-1v-1h-1zM131 428h2v2h-2zM134 428h2v2h-2zM139 421h2v2h-2zM143 421h1v2h-2v-1h1zM139 425h2v1h-1v1h-1zM142 425h2v2h-1v-1h-1zM139 428h2v2h-2zM142 428h2v2h-2zM147 421h2v2h-2zM151 421h1v2h-2v-1h1zM147 425h2v1h-1v1h-1zM150 425h2v2h-1v-1h-1zM147 428h2v2h-2zM150 428h2v2h-2zM155 421h2v2h-2zM159 421h1v2h-2v-1h1zM155 425h2v1h-1v1h-1zM158 425h2v2h-1v-1h-1zM155 428h2v2h-2zM158 428h2v2h-2zM163 421h2v2h-2zM167 421h1v2h-2v-1h1zM163 425h2v1h-1v1h-1zM166 425h2v2h-1v-1h-1zM163 428h2v2h-2zM166 428h2v2h-2zM171 421h2v2h-2zM175 421h1v2h-2v-1h1zM171 425h2v1h-1v1h-1zM174 425h2v2h-1v-1h-1zM171 428h2v2h-2zM174 428h2v2h-2zM179 421h2v2h-2zM183 421h1v2h-2v-1h1zM179 425h2v1h-1v1h-1zM182 425h2v2h-1v-1h-1zM179 428h2v2h-2zM182 428h2v2h-2zM187 421h2v2h-2zM191 421h1v2h-2v-1h1zM187 425h2v1h-1v1h-1zM190 425h2v2h-1v-1h-1zM187 428h2v2h-2zM190 428h2v2h-2zM195 421h2v2h-2zM199 421h1v2h-2v-1h1zM195 425h2v1h-1v1h-1zM198 425h2v2h-1v-1h-1zM195 428h2v2h-2zM198 428h2v2h-2zM203 421h2v2h-2zM207 421h1v2h-2v-1h1zM203 425h2v1h-1v1h-1zM206 425h2v2h-1v-1h-1zM203 428h2v2h-2zM206 428h2v2h-2zM211 421h2v2h-2zM215 421h1v2h-2v-1h1zM211 425h2v1h-1v1h-1zM214 425h2v2h-1v-1h-1zM211 428h2v2h-2zM214 428h2v2h-2zM219 421h2v2h-2zM223 421h1v2h-2v-1h1zM219 425h2v1h-1v1h-1zM222 425h2v2h-1v-1h-1zM219 428h2v2h-2zM222 428h2v2h-2zM227 421h2v2h-2zM231 421h1v2h-2v-1h1zM227 425h2v1h-1v1h-1zM230 425h2v2h-1v-1h-1zM227 428h2v2h-2zM230 428h2v2h-2zM235 421h2v2h-2zM239 421h1v2h-2v-1h1zM235 425h2v1h-1v1h-1zM238 425h2v2h-1v-1h-1zM235 428h2v2h-2zM238 428h2v2h-2zM243 421h2v2h-2zM247 421h1v2h-2v-1h1zM243 425h2v1h-1v1h-1zM246 425h2v2h-1v-1h-1zM243 428h2v2h-2zM246 428h2v2h-2zM251 421h2v2h-2zM255 421h1v2h-2v-1h1zM251 425h2v1h-1v1h-1zM254 425h2v2h-1v-1h-1zM251 428h2v2h-2zM254 428h2v2h-2zM259 421h2v2h-2zM263 421h1v2h-2v-1h1zM259 425h2v1h-1v1h-1zM262 425h2v2h-1v-1h-1zM259 428h2v2h-2zM262 428h2v2h-2zM267 421h2v2h-2zM271 421h1v2h-2v-1h1zM267 425h2v1h-1v1h-1zM270 425h2v2h-1v-1h-1zM267 428h2v2h-2zM270 428h2v2h-2zM275 421h2v2h-2zM279 421h1v2h-2v-1h1zM275 425h2v1h-1v1h-1zM278 425h2v2h-1v-1h-1zM275 428h2v2h-2zM278 428h2v2h-2zM283 421h2v2h-2zM287 421h1v2h-2v-1h1zM283 425h2v1h-1v1h-1zM286 425h2v2h-1v-1h-1zM283 428h2v2h-2zM286 428h2v2h-2zM291 421h2v2h-2zM295 421h1v2h-2v-1h1zM291 425h2v1h-1v1h-1zM294 425h2v2h-1v-1h-1zM291 428h2v2h-2zM294 428h2v2h-2zM299 421h2v2h-2zM303 421h1v2h-2v-1h1zM299 425h2v1h-1v1h-1zM302 425h2v2h-1v-1h-1zM299 428h2v2h-2zM302 428h2v2h-2zM307 421h2v2h-2zM311 421h1v2h-2v-1h1zM307 425h2v1h-1v1h-1zM310 425h2v2h-1v-1h-1zM307 428h2v2h-2zM310 428h2v2h-2zM315 421h2v2h-2zM319 421h1v2h-2v-1h1zM315 425h2v1h-1v1h-1zM318 425h2v2h-1v-1h-1zM315 428h2v2h-2zM318 428h2v2h-2zM323 421h2v2h-2zM327 421h1v2h-2v-1h1zM323 425h2v1h-1v1h-1zM326 425h2v2h-1v-1h-1zM323 428h2v2h-2zM326 428h2v2h-2zM331 421h2v2h-2zM335 421h1v2h-2v-1h1zM331 425h2v1h-1v1h-1zM334 425h2v2h-1v-1h-1zM331 428h2v2h-2zM334 428h2v2h-2zM339 421h2v2h-2zM343 421h1v2h-2v-1h1zM339 425h2v1h-1v1h-1zM342 425h2v2h-1v-1h-1zM339 428h2v2h-2zM342 428h2v2h-2zM347 421h2v2h-2zM351 421h1v2h-2v-1h1zM347 425h2v1h-1v1h-1zM350 425h2v2h-1v-1h-1zM347 428h2v2h-2zM350 428h2v2h-2zM355 421h2v2h-2zM359 421h1v2h-2v-1h1zM355 425h2v1h-1v1h-1zM358 425h2v2h-1v-1h-1zM355 428h2v2h-2zM358 428h2v2h-2zM363 421h2v2h-2zM367 421h1v2h-2v-1h1zM363 425h2v1h-1v1h-1zM366 425h2v2h-1v-1h-1zM363 428h2v2h-2zM366 428h2v2h-2zM371 421h2v2h-2zM375 421h1v2h-2v-1h1zM371 425h2v1h-1v1h-1zM374 425h2v2h-1v-1h-1zM371 428h2v2h-2zM374 428h2v2h-2zM379 421h2v2h-2zM383 421h1v2h-2v-1h1zM379 425h2v1h-1v1h-1zM382 425h2v2h-1v-1h-1zM379 428h2v2h-2zM382 428h2v2h-2zM387 421h2v2h-2zM391 421h1v2h-2v-1h1zM387 425h2v1h-1v1h-1zM390 425h2v2h-1v-1h-1zM387 428h2v2h-2zM390 428h2v2h-2z"/>
<path fill="#ffd46c" d="M19 434h2v2h-2zM22 434h2v2h-2zM19 437h2v2h-2zM23 437h1v2h-2v-1h1zM19 441h2v1h-1v1h-1zM22 441h2v2h-1v-1h-1zM19 444h2v2h-2zM22 444h2v2h-2zM27 434h2v2h-2zM30 434h2v2h-2zM27 437h2v2h-2zM31 437h1v2h-2v-1h1zM27 441h2v1h-1v1h-1zM30 441h2v2h-1v-1h-1zM27 444h2v2h-2zM30 444h2v2h-2zM35 434h2v2h-2zM38 434h2v2h-2zM35 437h2v2h-2zM39 437h1v2h-2v-1h1zM35 441h2v1h-1v1h-1zM38 441h2v2h-1v-1h-1zM35 444h2v2h-2zM38 444h2v2h-2zM43 434h2v2h-2zM46 434h2v2h-2zM43 437h2v2h-2zM47 437h1v2h-2v-1h1zM43 441h2v1h-1v1h-1zM46 441h2v2h-1v-1h-1zM43 444h2v2h-2zM46 444h2v2h-2zM51 434h2v2h-2zM54 434h2v2h-2zM51 437h2v2h-2zM55 437h1v2h-2v-1h1zM51 441h2v1h-1v1h-1zM54 441h2v2h-1v-1h-1zM51 444h2v2h-2zM54 444h2v2h-2zM59 434h2v2h-2zM62 434h2v2h-2zM59 437h2v2h-2zM63 437h1v2h-2v-1h1zM59 441h2v1h-1v1h-1zM62 441h2v2h-1v-1h-1zM59 444h2v2h-2zM62 444h2v2h-2zM67 434h2v2h-2zM70 434h2v2h-2zM67 437h2v2h-2zM71 437h1v2h-2v-1h1zM67 441h2v1h-1v1h-1zM70 441h2v2h-1v-1h-1zM67 444h2v2h-2zM70 444h2v2h-2zM75 434h2v2h-2zM78 434h2v2h-2zM75 437h2v2h-2zM79 437h1v2h-2v-1h1zM75 441h2v1h-1v1h-1zM78 441h2v2h-1v-1h-1zM75 444h2v2h-2zM78 444h2v2h-2zM83 434h2v2h-2zM86 434h2v2h-2zM83 437h2v2h-2zM87 437h1v2h-2v-1h1zM83 441h2v1h-1v1h-1zM86 441h2v2h-1v-1h-1zM83 444h2v2h-2zM86 444h2v2h-2zM91 434h2v2h-2zM94 434h2v2h-2zM91 437h2v2h-2zM95 437h1v2h-2v-1h1zM91 441h2v1h-1v1h-1zM94 441h2v2h-1v-1h-1zM91 444h2v2h-2zM94 444h2v2h-2zM99 434h2v2h-2zM102 434h2v2h-2zM99 437h2v2h-2zM103 437h1v2h-2v-1h1zM99 441h2v1h-1v1h-1zM102 441h2v2h-1v-1h-1zM99 444h2v2h-2zM102 444h2v2h-2zM107 434h2v2h-2zM110 434h2v2h-2zM107 437h2v2h-2zM111 437h1v2h-2v-1h1zM107 441h2v1h-1v1h-1zM110 441h2v2h-1v-1h-1zM107 444h2v2h-2zM110 444h2v2h-2zM115 434h2v2h-2zM118 434h2v2h-2zM115 437h2v2h-2zM119 437h1v2h-2v-1h1zM115 441h2v1h-1v1h-1zM118 441h2v2h-1v-1h-1zM115 444h2v2h-2zM118 444h2v2h-2zM123 434h2v2h-2zM126 434h2v2h-2zM123 437h2v2h-2zM127 437h1v2h-2v-1h1zM123 441h2v1h-1v1h-1zM126 441h2v2h-1v-1h-1zM123 444h2v2h-2zM126 444h2v2h-2zM131 434h2v2h-2zM134 434h2v2h-2zM131 437h2v2h-2zM135 437h1v2h-2v-1h1zM131 441h2v1h-1v1h-1zM134 441h2v2h-1v-1h-1zM131 444h2v2h-2zM134 444h2v2h-2zM139 434h2v2h-2zM142 434h2v2h-2zM139 437h2v2h-2zM143 437h1v2h-2v-1h1zM139 441h2v1h-1v1h-1zM142 441h2v2h-1v-1h-1zM139 444h2v2h-2zM142 444h2v2h-2zM147 434h2v2h-2zM150 434h2v2h-2zM147 437h2v2h-2zM151 437h1v2h-2v-1h1zM147 441h2v1h-1v1h-1zM150 441h2v2h-1v-1h-1zM147 444h2v2h-2zM150 444h2v2h-2zM155 434h2v2h-2zM158 434h2v2h-2zM155 437h2v2h-2zM159 437h1v2h-2v-1h1zM155 441h2v1h-1v1h-1zM158 441h2v2h-1v-1h-1zM155 444h2v2h-2zM158 444h2v2h-2zM163 434h2v2h-2zM166 434h2v2h-2zM163 437h2v2h-2zM167 437h1v2h-2v-1h1zM163 441h2v1h-1v1h-1zM166 441h2v2h-1v-1h-1zM163 444h2v2h-2zM166 444h2v2h-2zM171 434h2v2h-2zM174 434h2v2h-2zM171 437h2v2h-2zM175 437h1v2h-2v-1h1zM171 441h2v1h-1v1h-1zM174 441h2v2h-1v-1h-1zM171 444h2v2h-2zM174 444h2v2h-2zM179 434h2v2h-2zM182 434h2v2h-2zM179 437h2v2h-2zM183 437h1v2h-2v-1h1zM179 441h2v1h-1v1h-1zM182 441h2v2h-1v-1h-1zM179 444h2v2h-2zM182 444h2v2h-2zM187 434h2v2h-2zM190 434h2v2h-2zM187 437h2v2h-2zM191 437h1v2h-2v-1h1zM187 441h2v1h-1v1h-1zM190 441h2v2h-1v-1h-1zM187 444h2v2h-2zM190 444h2v2h-2zM195 434h2v2h-2zM198 434h2v2h-2zM195 437h2v2h-2zM199 437h1v2h-2v-1h1zM195 441h2v1h-1v1h-1zM198 441h2v2h-1v-1h-1zM195 444h2v2h-2zM198 444h2v2h-2zM203 434h2v2h-2zM206 434h2v2h-2zM203 437h2v2h-2zM207 437h1v2h-2v-1h1zM203 441h2v1h-1v1h-1zM206 441h2v2h-1v-1h-1zM203 444h2v2h-2zM206 444h2v2h-2zM211 434h2v2h-2zM214 434h2v2h-2zM211 437h2v2h-2zM215 437h1v2h-2v-1h1zM211 441h2v1h-1v1h-1zM214 441h2v2h-1v-1h-1zM211 444h2v2h-2zM214 444h2v2h-2zM219 434h2v2h-2zM222 434h2v2h-2zM219 437h2v2h-2zM223 437h1v2h-2v-1h1zM219 441h2v1h-1v1h-1zM222 441h2v2h-1v-1h-1zM219 444h2v2h-2zM222 444h2v2h-2zM227 434h2v2h-2zM230 434h2v2h-2zM227 437h2v2h-2zM231 437h1v2h-2v-1h1zM227 441h2v1h-1v1h-1zM230 441h2v2h-1v-1h-1zM227 444h2v2h-2zM230 444h2v2h-2zM235 434h2v2h-2zM238 434h2v2h-2zM235 437h2v2h-2zM239 437h1v2h-2v-1h1zM235 441h2v1h-1v1h-1zM238 441h2v2h-1v-1h-1zM235 444h2v2h-2zM238 444h2v2h-2zM243 434h2v2h-2zM246 434h2v2h-2zM243 437h2v2h-2zM247 437h1v2h-2v-1h1zM243 441h2v1h-1v1h-1zM246 441h2v2h-1v-1h-1zM243 444h2v2h-2zM246 444h2v2h-2zM251 434h2v2h-2zM254 434h2v2h-2zM251 437h2v2h-2zM255 437h1v2h-2v-1h1zM251 441h2v1h-1v1h-1zM254 441h2v2h-1v-1h-1zM251 444h2v2h-2zM254 444h2v2h-2zM259 434h2v2h-2zM262 434h2v2h-2zM259 437h2v2h-2zM263 437h1v2h-2v-1h1zM259 441h2v1h-1v1h-1zM262 441h2v2h-1v-1h-1zM259 444h2v2h-2zM262 444h2v2h-2zM267 434h2v2h-2zM270 434h2v2h-2zM267 437h2v2h-2zM271 437h1v2h-2v-1h1zM267 441h2v1h-1v1h-1zM270 441h2v2h-1v-1h-1zM267 444h2v2h-2zM270 444h2v2h-2zM275 434h2v2h-2zM278 434h2v2h-2zM275 437h2v2h-2zM279 437h1v2h-2v-1h1zM275 441h2v1h-1v1h-1zM278 441h2v2h-1v-1h-1zM275 444h2v2h-2zM278 444h2v2h-2zM283 434h2v2h-2zM286 434h2v2h-2zM283 437h2v2h-2zM287 437h1v2h-2v-1h1zM283 441h2v1h-1v1h-1zM286 441h2v2h-1v-1h-1zM283 444h2v2h-2zM286 444h2v2h-2zM291 434h2v2h-2zM294 434h2v2h-2zM291 437h2v2h-2zM295 437h1v2h-2v-1h1zM291 441h2v1h-1v1h-1zM294 441h2v2h-1v-1h-1zM291 444h2v2h-2zM294 444h2v2h-2zM299 434h2v2h-2zM302 434h2v2h-2zM299 437h2v2h-2zM303 437h1v2h-2v-1h1zM299 441h2v1h-1v1h-1zM302 441h2v2h-1v-1h-1zM299 444h2v2h-2zM302 444h2v2h-2zM307 434h2v2h-2zM310 434h2v2h-2zM307 437h2v2h-2zM311 437h1v2h-2v-1h1zM307 441h2v1h-1v1h-1zM310 441h2v2h-1v-1h-1zM307 444h2v2h-2zM310 444h2v2h-2zM315 434h2v2h-2zM318 434h2v2h-2zM315 437h2v2h-2zM319 437h1v2h-2v-1h1zM315 441h2v1h-1v1h-1zM318 441h2v2h-1v-1h-1zM315 444h2v2h-2zM318 444h2v2h-2zM323 434h2v2h-2zM326 434h2v2h-2zM323 437h2v2h-2zM327 437h1v2h-2v-1h1zM323 441h2v1h-1v1h-1zM326 441h2v2h-1v-1h-1zM323 444h2v2h-2zM326 444h2v2h-2zM331 434h2v2h-2zM334 434h2v2h-2zM331 437h2v2h-2zM335 437h1v2h-2v-1h1zM331 441h2v1h-1v1h-1zM334 441h2v2h-1v-1h-1zM331 444h2v2h-2zM334 444h2v2h-2zM339 434h2v2h-2zM342 434h2v2h-2zM339 437h2v2h-2zM343 437h1v2h-2v-1h1zM339 441h2v1h-1v1h-1zM342 441h2v2h-1v-1h-1zM339 444h2v2h-2zM342 444h2v2h-2zM347 434h2v2h-2zM350 434h2v2h-2zM347 437h2v2h-2zM351 437h1v2h-2v-1h1zM347 441h2v1h-1v1h-1zM350 441h2v2h-1v-1h-1zM347 444h2v2h-2zM350 444h2v2h-2zM355 434h2v2h-2zM358 434h2v2h-2zM355 437h2v2h-2zM359 437h1v2h-2v-1h1zM355 441h2v1h-1v1h-1zM358 441h2v2h-1v-1h-1zM355 444h2v2h-2zM358 444h2v2h-2zM363 434h2v2h-2zM366 434h2v2h-2zM363 437h2v2h-2zM367 437h1v2h-2v-1h1zM363 441h2v1h-1v1h-1zM366 441h2v2h-1v-1h-1zM363 444h2v2h-2zM366 444h2v2h-2zM371 434h2v2h-2zM374 434h2v2h-2zM371 437h2v2h-2zM375 437h1v2h-2v-1h1zM371 441h2v1h-1v1h-1zM374 441h2v2h-1v-1h-1zM371 444h2v2h-2zM374 444h2v2h-2zM379 434h2v2h-2zM382 434h2v2h-2zM379 437h2v2h-2zM383 437h1v2h-2v-1h1zM379 441h2v1h-1v1h-1zM382 441h2v2h-1v-1h-1zM379 444h2v2h-2zM382 444h2v2h-2zM387 434h2v2h-2zM390 434h2v2h-2zM387 437h2v2h-2zM391 437h1v2h-2v-1h1zM387 441h2v1h-1v1h-1zM390 441h2v2h-1v-1h-1zM387 444h2v2h-2zM390 444h2v2h-2z"/>
<path fill="#e2bc64" d="M19 450h2v2h-2zM22 450h2v2h-2zM19 453h2v2h-2zM23 453h1v2h-2v-1h1zM19 457h2v1h-1v1h-1zM22 457h2v2h-1v-1h-1zM19 460h2v2h-2zM22 460h2v2h-2zM27 450h2v2h-2zM30 450h2v2h-2zM27 453h2v2h-2zM31 453h1v2h-2v-1h1zM27 457h2v1h-1v1h-1zM30 457h2v2h-1v-1h-1zM27 460h2v2h-2zM30 460h2v2h-2zM35 450h2v2h-2zM38 450h2v2h-2zM35 453h2v2h-2zM39 453h1v2h-2v-1h1zM35 457h2v1h-1v1h-1zM38 457h2v2h-1v-1h-1zM35 460h2v2h-2zM38 460h2v2h-2zM43 450h2v2h-2zM46 450h2v2h-2zM43 453h2v2h-2zM47 453h1v2h-2v-1h1zM43 457h2v1h-1v1h-1zM46 457h2v2h-1v-1h-1zM43 460h2v2h-2zM46 460h2v2h-2zM51 450h2v2h-2zM54 450h2v2h-2zM51 453h2v2h-2zM55 453h1v2h-2v-1h1zM51 457h2v1h-1v1h-1zM54 457h2v2h-1v-1h-1zM51 460h2v2h-2zM54 460h2v2h-2zM59 450h2v2h-2zM62 450h2v2h-2zM59 453h2v2h-2zM63 453h1v2h-2v-1h1zM59 457h2v1h-1v1h-1zM62 457h2v2h-1v-1h-1zM59 460h2v2h-2zM62 460h2v2h-2zM67 450h2v2h-2zM70 450h2v2h-2zM67 453h2v2h-2zM71 453h1v2h-2v-1h1zM67 457h2v1h-1v1h-1zM70 457h2v2h-1v-1h-1zM67 460h2v2h-2zM70 460h2v2h-2zM75 450h2v2h-2zM78 450h2v2h-2zM75 453h2v2h-2zM79 453h1v2h-2v-1h1zM75 457h2v1h-1v1h-1zM78 457h2v2h-1v-1h-1zM75 460h2v2h-2zM78 460h2v2h-2zM83 450h2v2h-2zM86 450h2v2h-2zM83 453h2v2h-2zM87 453h1v2h-2v-1h1zM83 457h2v1h-1v1h-1zM86 457h2v2h-1v-1h-1zM83 460h2v2h-2zM86 460h2v2h-2zM91 450h2v2h-2zM94 450h2v2h-2zM91 453h2v2h-2zM95 453h1v2h-2v-1h1zM91 457h2v1h-1v1h-1zM94 457h2v2h-1v-1h-1zM91 460h2v2h-2zM94 460h2v2h-2zM99 450h2v2h-2zM102 450h2v2h-2zM99 453h2v2h-2zM103 453h1v2h-2v-1h1zM99 457h2v1h-1v1h-1zM102 457h2v2h-1v-1h-1zM99 460h2v2h-2zM102 460h2v2h-2zM107 450h2v2h-2zM110 450h2v2h-2zM107 453h2v2h-2zM111 453h1v2h-2v-1h1zM107 457h2v1h-1v1h-1zM110 457h2v2h-1v-1h-1zM107 460h2v2h-2zM110 460h2v2h-2zM115 450h2v2h-2zM118 450h2v2h-2zM115 453h2v2h-2zM119 453h1v2h-2v-1h1zM115 457h2v1h-1v1h-1zM118 457h2v2h-1v-1h-1zM115 460h2v2h-2zM118 460h2v2h-2zM123 450h2v2h-2zM126 450h2v2h-2zM123 453h2v2h-2zM127 453h1v2h-2v-1h1zM123 457h2v1h-1v1h-1zM126 457h2v2h-1v-1h-1zM123 460h2v2h-2zM126 460h2v2h-2zM131 450h2v2h-2zM134 450h2v2h-2zM131 453h2v2h-2zM135 453h1v2h-2v-1h1zM131 457h2v1h-1v1h-1zM134 457h2v2h-1v-1h-1zM131 460h2v2h-2zM134 460h2v2h-2zM139 450h2v2h-2zM142 450h2v2h-2zM139 453h2v2h-2zM143 453h1v2h-2v-1h1zM139 457h2v1h-1v1h-1zM142 457h2v2h-1v-1h-1zM139 460h2v2h-2zM142 460h2v2h-2zM147 450h2v2h-2zM150 450h2v2h-2zM147 453h2v2h-2zM151 453h1v2h-2v-1h1zM147 457h2v1h-1v1h-1zM150 457h2v2h-1v-1h-1zM147 460h2v2h-2zM150 460h2v2h-2zM155 450h2v2h-2zM158 450h2v2h-2zM155 453h2v2h-2zM159 453h1v2h-2v-1h1zM155 457h2v1h-1v1h-1zM158 457h2v2h-1v-1h-1zM155 460h2v2h-2zM158 460h2v2h-2zM163 450h2v2h-2zM166 450h2v2h-2zM163 453h2v2h-2zM167 453h1v2h-2v-1h1zM163 457h2v1h-1v1h-1zM166 457h2v2h-1v-1h-1zM163 460h2v2h-2zM166 460h2v2h-2zM171 450h2v2h-2zM174 450h2v2h-2zM171 453h2v2h-2zM175 453h1v2h-2v-1h1zM171 457h2v1h-1v1h-1zM174 457h2v2h-1v-1h-1zM171 460h2v2h-2zM174 460h2v2h-2zM179 450h2v2h-2zM182 450h2v2h-2zM179 453h2v2h-2zM183 453h1v2h-2v-1h1zM179 457h2v1h-1v1h-1zM182 457h2v2h-1v-1h-1zM179 460h2v2h-2zM182 460h2v2h-2zM187 450h2v2h-2zM190 450h2v2h-2zM187 453h2v2h-2zM191 453h1v2h-2v-1h1zM187 457h2v1h-1v1h-1zM190 457h2v2h-1v-1h-1zM187 460h2v2h-2zM190 460h2v2h-2zM195 450h2v2h-2zM198 450h2v2h-2zM195 453h2v2h-2zM199 453h1v2h-2v-1h1zM195 457h2v1h-1v1h-1zM198 457h2v2h-1v-1h-1zM195 460h2v2h-2zM198 460h2v2h-2zM203 450h2v2h-2zM206 450h2v2h-2zM203 453h2v2h-2zM207 453h1v2h-2v-1h1zM203 457h2v1h-1v1h-1zM206 457h2v2h-1v-1h-1zM203 460h2v2h-2zM206 460h2v2h-2zM211 450h2v2h-2zM214 450h2v2h-2zM211 453h2v2h-2zM215 453h1v2h-2v-1h1zM211 457h2v1h-1v1h-1zM214 457h2v2h-1v-1h-1zM211 460h2v2h-2zM214 460h2v2h-2zM219 450h2v2h-2zM222 450h2v2h-2zM219 453h2v2h-2zM223 453h1v2h-2v-1h1zM219 457h2v1h-1v1h-1zM222 457h2v2h-1v-1h-1zM219 460h2v2h-2zM222 460h2v2h-2zM227 450h2v2h-2zM230 450h2v2h-2zM227 453h2v2h-2zM231 453h1v2h-2v-1h1zM227 457h2v1h-1v1h-1zM230 457h2v2h-1v-1h-1zM227 460h2v2h-2zM230 460h2v2h-2zM235 450h2v2h-2zM238 450h2v2h-2zM235 453h2v2h-2zM239 453h1v2h-2v-1h1zM235 457h2v1h-1v1h-1zM238 457h2v2h-1v-1h-1zM235 460h2v2h-2zM238 460h2v2h-2zM243 450h2v2h-2zM246 450h2v2h-2zM243 453h2v2h-2zM247 453h1v2h-2v-1h1zM243 457h2v1h-1v1h-1zM246 457h2v2h-1v-1h-1zM243 460h2v2h-2zM246 460h2v2h-2zM251 450h2v2h-2zM254 450h2v2h-2zM251 453h2v2h-2zM255 453h1v2h-2v-1h1zM251 457h2v1h-1v1h-1zM254 457h2v2h-1v-1h-1zM251 460h2v2h-2zM254 460h2v2h-2zM259 450h2v2h-2zM262 450h2v2h-2zM259 453h2v2h-2zM263 453h1v2h-2v-1h1zM259 457h2v1h-1v1h-1zM262 457h2v2h-1v-1h-1zM259 460h2v2h-2zM262 460h2v2h-2zM267 450h2v2h-2zM270 450h2v2h-2zM267 453h2v2h-2zM271 453h1v2h-2v-1h1zM267 457h2v1h-1v1h-1zM270 457h2v2h-1v-1h-1zM267 460h2v2h-2zM270 460h2v2h-2zM275 450h2v2h-2zM278 450h2v2h-2zM275 453h2v2h-2zM279 453h1v2h-2v-1h1zM275 457h2v1h-1v1h-1zM278 457h2v2h-1v-1h-1zM275 460h2v2h-2zM278 460h2v2h-2zM283 450h2v2h-2zM286 450h2v2h-2zM283 453h2v2h-2zM287 453h1v2h-2v-1h1zM283 457h2v1h-1v1h-1zM286 457h2v2h-1v-1h-1zM283 460h2v2h-2zM286 460h2v2h-2zM291 450h2v2h-2zM294 450h2v2h-2zM291 453h2v2h-2zM295 453h1v2h-2v-1h1zM291 457h2v1h-1v1h-1zM294 457h2v2h-1v-1h-1zM291 460h2v2h-2zM294 460h2v2h-2zM299 450h2v2h-2zM302 450h2v2h-2zM299 453h2v2h-2zM303 453h1v2h-2v-1h1zM299 457h2v1h-1v1h-1zM302 457h2v2h-1v-1h-1zM299 460h2v2h-2zM302 460h2v2h-2zM307 450h2v2h-2zM310 450h2v2h-2zM307 453h2v2h-2zM311 453h1v2h-2v-1h1zM307 457h2v1h-1v1h-1zM310 457h2v2h-1v-1h-1zM307 460h2v2h-2zM310 460h2v2h-2zM315 450h2v2h-2zM318 450h2v2h-2zM315 453h2v2h-2zM319 453h1v2h-2v-1h1zM315 457h2v1h-1v1h-1zM318 457h2v2h-1v-1h-1zM315 460h2v2h-2zM318 460h2v2h-2zM323 450h2v2h-2zM326 450h2v2h-2zM323 453h2v2h-2zM327 453h1v2h-2v-1h1zM323 457h2v1h-1v1h-1zM326 457h2v2h-1v-1h-1zM323 460h2v2h-2zM326 460h2v2h-2zM331 450h2v2h-2zM334 450h2v2h-2zM331 453h2v2h-2zM335 453h1v2h-2v-1h1zM331 457h2v1h-1v1h-1zM334 457h2v2h-1v-1h-1zM331 460h2v2h-2zM334 460h2v2h-2zM339 450h2v2h-2zM342 450h2v2h-2zM339 453h2v2h-2zM343 453h1v2h-2v-1h1zM339 457h2v1h-1v1h-1zM342 457h2v2h-1v-1h-1zM339 460h2v2h-2zM342 460h2v2h-2zM347 450h2v2h-2zM350 450h2v2h-2zM347 453h2v2h-2zM351 453h1v2h-2v-1h1zM347 457h2v1h-1v1h-1zM350 457h2v2h-1v-1h-1zM347 460h2v2h-2zM350 460h2v2h-2zM355 450h2v2h-2zM358 450h2v2h-2zM355 453h2v2h-2zM359 453h1v2h-2v-1h1zM355 457h2v1h-1v1h-1zM358 457h2v2h-1v-1h-1zM355 460h2v2h-2zM358 460h2v2h-2zM363 450h2v2h-2zM366 450h2v2h-2zM363 453h2v2h-2zM367 453h1v2h-2v-1h1zM363 457h2v1h-1v1h-1zM366 457h2v2h-1v-1h-1zM363 460h2v2h-2zM366 460h2v2h-2zM371 450h2v2h-2zM374 450h2v2h-2zM371 453h2v2h-2zM375 453h1v2h-2v-1h1zM371 457h2v1h-1v1h-1zM374 457h2v2h-1v-1h-1zM371 460h2v2h-2zM374 460h2v2h-2zM379 450h2v2h-2zM382 450h2v2h-2zM379 453h2v2h-2zM383 453h1v2h-2v-1h1zM379 457h2v1h-1v1h-1zM382 457h2v2h-1v-1h-1zM379 460h2v2h-2zM382 460h2v2h-2zM387 450h2v2h-2zM390 450h2v2h-2zM387 453h2v2h-2zM391 453h1v2h-2v-1h1zM387 457h2v1h-1v1h-1zM390 457h2v2h-1v-1h-1zM387 460h2v2h-2zM390 460h2v2h-2z"/>
<path fill="#52e2fa" d="M19 498h2v2h-2zM22 498h2v2h-2zM19 501h2v2h-2zM23 501h1v2h-2v-1h1zM19 505h2v1h-1v1h-1zM22 505h2v2h-1v-1h-1zM19 508h2v2h-2zM22 508h2v2h-2zM27 498h2v2h-2zM30 498h2v2h-2zM27 501h2v2h-2zM31 501h1v2h-2v-1h1zM27 505h2v1h-1v1h-1zM30 505h2v2h-1v-1h-1zM27 508h2v2h-2zM30 508h2v2h-2zM35 498h2v2h-2zM38 498h2v2h-2zM35 501h2v2h-2zM39 501h1v2h-2v-1h1zM35 505h2v1h-1v1h-1zM38 505h2v2h-1v-1h-1zM35 508h2v2h-2zM38 508h2v2h-2zM43 498h2v2h-2zM46 498h2v2h-2zM43 501h2v2h-2zM47 501h1v2h-2v-1h1zM43 505h2v1h-1v1h-1zM46 505h2v2h-1v-1h-1zM43 508h2v2h-2zM46 508h2v2h-2zM51 498h2v2h-2zM54 498h2v2h-2zM51 501h2v2h-2zM55 501h1v2h-2v-1h1zM51 505h2v1h-1v1h-1zM54 505h2v2h-1v-1h-1zM51 508h2v2h-2zM54 508h2v2h-2zM59 498h2v2h-2zM62 498h2v2h-2zM59 501h2v2h-2zM63 501h1v2h-2v-1h1zM59 505h2v1h-1v1h-1zM62 505h2v2h-1v-1h-1zM59 508h2v2h-2zM62 508h2v2h-2zM67 498h2v2h-2zM70 498h2v2h-2zM67 501h2v2h-2zM71 501h1v2h-2v-1h1zM67 505h2v1h-1v1h-1zM70 505h2v2h-1v-1h-1zM67 508h2v2h-2zM70 508h2v2h-2zM75 498h2v2h-2zM78 498h2v2h-2zM75 501h2v2h-2zM79 501h1v2h-2v-1h1zM75 505h2v1h-1v1h-1zM78 505h2v2h-1v-1h-1zM75 508h2v2h-2zM78 508h2v2h-2zM83 498h2v2h-2zM86 498h2v2h-2zM83 501h2v2h-2zM87 501h1v2h-2v-1h1zM83 505h2v1h-1v1h-1zM86 505h2v2h-1v-1h-1zM83 508h2v2h-2zM86 508h2v2h-2zM91 498h2v2h-2zM94 498h2v2h-2zM91 501h2v2h-2zM95 501h1v2h-2v-1h1zM91 505h2v1h-1v1h-1zM94 505h2v2h-1v-1h-1zM91 508h2v2h-2zM94 508h2v2h-2zM99 498h2v2h-2zM102 498h2v2h-2zM99 501h2v2h-2zM103 501h1v2h-2v-1h1zM99 505h2v1h-1v1h-1zM102 505h2v2h-1v-1h-1zM99 508h2v2h-2zM102 508h2v2h-2zM107 498h2v2h-2zM110 498h2v2h-2zM107 501h2v2h-2zM111 501h1v2h-2v-1h1zM107 505h2v1h-1v1h-1zM110 505h2v2h-1v-1h-1zM107 508h2v2h-2zM110 508h2v2h-2zM115 498h2v2h-2zM118 498h2v2h-2zM115 501h2v2h-2zM119 501h1v2h-2v-1h1zM115 505h2v1h-1v1h-1zM118 505h2v2h-1v-1h-1zM115 508h2v2h-2zM118 508h2v2h-2zM123 498h2v2h-2zM126 498h2v2h-2zM123 501h2v2h-2zM127 501h1v2h-2v-1h1zM123 505h2v1h-1v1h-1zM126 505h2v2h-1v-1h-1zM123 508h2v2h-2zM126 508h2v2h-2zM131 498h2v2h-2zM134 498h2v2h-2zM131 501h2v2h-2zM135 501h1v2h-2v-1h1zM131 505h2v1h-1v1h-1zM134 505h2v2h-1v-1h-1zM131 508h2v2h-2zM134 508h2v2h-2zM139 498h2v2h-2zM142 498h2v2h-2zM139 501h2v2h-2zM143 501h1v2h-2v-1h1zM139 505h2v1h-1v1h-1zM142 505h2v2h-1v-1h-1zM139 508h2v2h-2zM142 508h2v2h-2zM147 498h2v2h-2zM150 498h2v2h-2zM147 501h2v2h-2zM151 501h1v2h-2v-1h1zM147 505h2v1h-1v1h-1zM150 505h2v2h-1v-1h-1zM147 508h2v2h-2zM150 508h2v2h-2zM155 498h2v2h-2zM158 498h2v2h-2zM155 501h2v2h-2zM159 501h1v2h-2v-1h1zM155 505h2v1h-1v1h-1zM158 505h2v2h-1v-1h-1zM155 508h2v2h-2zM158 508h2v2h-2zM163 498h2v2h-2zM166 498h2v2h-2zM163 501h2v2h-2zM167 501h1v2h-2v-1h1zM163 505h2v1h-1v1h-1zM166 505h2v2h-1v-1h-1zM163 508h2v2h-2zM166 508h2v2h-2zM171 498h2v2h-2zM174 498h2v2h-2zM171 501h2v2h-2zM175 501h1v2h-2v-1h1zM171 505h2v1h-1v1h-1zM174 505h2v2h-1v-1h-1zM171 508h2v2h-2zM174 508h2v2h-2zM179 498h2v2h-2zM182 498h2v2h-2zM179 501h2v2h-2zM183 501h1v2h-2v-1h1zM179 505h2v1h-1v1h-1zM182 505h2v2h-1v-1h-1zM179 508h2v2h-2zM182 508h2v2h-2zM187 498h2v2h-2zM190 498h2v2h-2zM187 501h2v2h-2zM191 501h1v2h-2v-1h1zM187 505h2v1h-1v1h-1zM190 505h2v2h-1v-1h-1zM187 508h2v2h-2zM190 508h2v2h-2zM195 498h2v2h-2zM198 498h2v2h-2zM195 501h2v2h-2zM199 501h1v2h-2v-1h1zM195 505h2v1h-1v1h-1zM198 505h2v2h-1v-1h-1zM195 508h2v2h-2zM198 508h2v2h-2zM203 498h2v2h-2zM206 498h2v2h-2zM203 501h2v2h-2zM207 501h1v2h-2v-1h1zM203 505h2v1h-1v1h-1zM206 505h2v2h-1v-1h-1zM203 508h2v2h-2zM206 508h2v2h-2zM211 498h2v2h-2zM214 498h2v2h-2zM211 501h2v2h-2zM215 501h1v2h-2v-1h1zM211 505h2v1h-1v1h-1zM214 505h2v2h-1v-1h-1zM211 508h2v2h-2zM214 508h2v2h-2zM219 498h2v2h-2zM222 498h2v2h-2zM219 501h2v2h-2zM223 501h1v2h-2v-1h1zM219 505h2v1h-1v1h-1zM222 505h2v2h-1v-1h-1zM219 508h2v2h-2zM222 508h2v2h-2zM227 498h2v2h-2zM230 498h2v2h-2zM227 501h2v2h-2zM231 501h1v2h-2v-1h1zM227 505h2v1h-1v1h-1zM230 505h2v2h-1v-1h-1zM227 508h2v2h-2zM230 508h2v2h-2zM235 498h2v2h-2zM238 498h2v2h-2zM235 501h2v2h-2zM239 501h1v2h-2v-1h1zM235 505h2v1h-1v1h-1zM238 505h2v2h-1v-1h-1zM235 508h2v2h-2zM238 508h2v2h-2zM243 498h2v2h-2zM246 498h2v2h-2zM243 501h2v2h-2zM247 501h1v2h-2v-1h1zM243 505h2v1h-1v1h-1zM246 505h2v2h-1v-1h-1zM243 508h2v2h-2zM246 508h2v2h-2zM251 498h2v2h-2zM254 498h2v2h-2zM251 501h2v2h-2zM255 501h1v2h-2v-1h1zM251 505h2v1h-1v1h-1zM254 505h2v2h-1v-1h-1zM251 508h2v2h-2zM254 508h2v2h-2zM259 498h2v2h-2zM262 498h2v2h-2zM259 501h2v2h-2zM263 501h1v2h-2v-1h1zM259 505h2v1h-1v1h-1zM262 505h2v2h-1v-1h-1zM259 508h2v2h-2zM262 508h2v2h-2zM267 498h2v2h-2zM270 498h2v2h-2zM267 501h2v2h-2zM271 501h1v2h-2v-1h1zM267 505h2v1h-1v1h-1zM270 505h2v2h-1v-1h-1zM267 508h2v2h-2zM270 508h2v2h-2zM275 498h2v2h-2zM278 498h2v2h-2zM275 501h2v2h-2zM279 501h1v2h-2v-1h1zM275 505h2v1h-1v1h-1zM278 505h2v2h-1v-1h-1zM275 508h2v2h-2zM278 508h2v2h-2zM283 498h2v2h-2zM286 498h2v2h-2zM283 501h2v2h-2zM287 501h1v2h-2v-1h1zM283 505h2v1h-1v1h-1zM286 505h2v2h-1v-1h-1zM283 508h2v2h-2zM286 508h2v2h-2zM291 498h2v2h-2zM294 498h2v2h-2zM291 501h2v2h-2zM295 501h1v2h-2v-1h1zM291 505h2v1h-1v1h-1zM294 505h2v2h-1v-1h-1zM291 508h2v2h-2zM294 508h2v2h-2zM299 498h2v2h-2zM302 498h2v2h-2zM299 501h2v2h-2zM303 501h1v2h-2v-1h1zM299 505h2v1h-1v1h-1zM302 505h2v2h-1v-1h-1zM299 508h2v2h-2zM302 508h2v2h-2zM307 498h2v2h-2zM310 498h2v2h-2zM307 501h2v2h-2zM311 501h1v2h-2v-1h1zM307 505h2v1h-1v1h-1zM310 505h2v2h-1v-1h-1zM307 508h2v2h-2zM310 508h2v2h-2zM315 498h2v2h-2zM318 498h2v2h-2zM315 501h2v2h-2zM319 501h1v2h-2v-1h1zM315 505h2v1h-1v1h-1zM318 505h2v2h-1v-1h-1zM315 508h2v2h-2zM318 508h2v2h-2zM323 498h2v2h-2zM326 498h2v2h-2zM323 501h2v2h-2zM327 501h1v2h-2v-1h1zM323 505h2v1h-1v1h-1zM326 505h2v2h-1v-1h-1zM323 508h2v2h-2zM326 508h2v2h-2zM331 498h2v2h-2zM334 498h2v2h-2zM331 501h2v2h-2zM335 501h1v2h-2v-1h1zM331 505h2v1h-1v1h-1zM334 505h2v2h-1v-1h-1zM331 508h2v2h-2zM334 508h2v2h-2zM339 498h2v2h-2zM342 498h2v2h-2zM339 501h2v2h-2zM343 501h1v2h-2v-1h1zM339 505h2v1h-1v1h-1zM342 505h2v2h-1v-1h-1zM339 508h2v2h-2zM342 508h2v2h-2zM347 498h2v2h-2zM350 498h2v2h-2zM347 501h2v2h-2zM351 501h1v2h-2v-1h1zM347 505h2v1h-1v1h-1zM350 505h2v2h-1v-1h-1zM347 508h2v2h-2zM350 508h2v2h-2zM355 498h2v2h-2zM358 498h2v2h-2zM355 501h2v2h-2zM359 501h1v2h-2v-1h1zM355 505h2v1h-1v1h-1zM358 505h2v2h-1v-1h-1zM355 508h2v2h-2zM358 508h2v2h-2zM363 498h2v2h-2zM366 498h2v2h-2zM363 501h2v2h-2zM367 501h1v2h-2v-1h1zM363 505h2v1h-1v1h-1zM366 505h2v2h-1v-1h-1zM363 508h2v2h-2zM366 508h2v2h-2zM371 498h2v2h-2zM374 498h2v2h-2zM371 501h2v2h-2zM375 501h1v2h-2v-1h1zM371 505h2v1h-1v1h-1zM374 505h2v2h-1v-1h-1zM371 508h2v2h-2zM374 508h2v2h-2zM379 498h2v2h-2zM382 498h2v2h-2zM379 501h2v2h-2zM383 501h1v2h-2v-1h1zM379 505h2v1h-1v1h-1zM382 505h2v2h-1v-1h-1zM379 508h2v2h-2zM382 508h2v2h-2zM387 498h2v2h-2zM390 498h2v2h-2zM387 501h2v2h-2zM391 501h1v2h-2v-1h1zM387 505h2v1h-1v1h-1zM390 505h2v2h-1v-1h-1zM387 508h2v2h-2zM390 508h2v2h-2z"/>
<path fill="#58c6e6" d="M19 514h2v2h-2zM22 514h2v2h-2zM19 517h2v2h-2zM23 517h1v2h-2v-1h1zM19 521h2v1h-1v1h-1zM22 521h2v2h-1v-1h-1zM19 524h2v2h-2zM22 524h2v2h-2zM27 514h2v2h-2zM30 514h2v2h-2zM27 517h2v2h-2zM31 517h1v2h-2v-1h1zM27 521h2v1h-1v1h-1zM30 521h2v2h-1v-1h-1zM27 524h2v2h-2zM30 524h2v2h-2zM35 514h2v2h-2zM38 514h2v2h-2zM35 517h2v2h-2zM39 517h1v2h-2v-1h1zM35 521h2v1h-1v1h-1zM38 521h2v2h-1v-1h-1zM35 524h2v2h-2zM38 524h2v2h-2zM43 514h2v2h-2zM46 514h2v2h-2zM43 517h2v2h-2zM47 517h1v2h-2v-1h1zM43 521h2v1h-1v1h-1zM46 521h2v2h-1v-1h-1zM43 524h2v2h-2zM46 524h2v2h-2zM51 514h2v2h-2zM54 514h2v2h-2zM51 517h2v2h-2zM55 517h1v2h-2v-1h1zM51 521h2v1h-1v1h-1zM54 521h2v2h-1v-1h-1zM51 524h2v2h-2zM54 524h2v2h-2zM59 514h2v2h-2zM62 514h2v2h-2zM59 517h2v2h-2zM63 517h1v2h-2v-1h1zM59 521h2v1h-1v1h-1zM62 521h2v2h-1v-1h-1zM59 524h2v2h-2zM62 524h2v2h-2zM67 514h2v2h-2zM70 514h2v2h-2zM67 517h2v2h-2zM71 517h1v2h-2v-1h1zM67 521h2v1h-1v1h-1zM70 521h2v2h-1v-1h-1zM67 524h2v2h-2zM70 524h2v2h-2zM75 514h2v2h-2zM78 514h2v2h-2zM75 517h2v2h-2zM79 517h1v2h-2v-1h1zM75 521h2v1h-1v1h-1zM78 521h2v2h-1v-1h-1zM75 524h2v2h-2zM78 524h2v2h-2zM83 514h2v2h-2zM86 514h2v2h-2zM83 517h2v2h-2zM87 517h1v2h-2v-1h1zM83 521h2v1h-1v1h-1zM86 521h2v2h-1v-1h-1zM83 524h2v2h-2zM86 524h2v2h-2zM91 514h2v2h-2zM94 514h2v2h-2zM91 517h2v2h-2zM95 517h1v2h-2v-1h1zM91 521h2v1h-1v1h-1zM94 521h2v2h-1v-1h-1zM91 524h2v2h-2zM94 524h2v2h-2zM99 514h2v2h-2zM102 514h2v2h-2zM99 517h2v2h-2zM103 517h1v2h-2v-1h1zM99 521h2v1h-1v1h-1zM102 521h2v2h-1v-1h-1zM99 524h2v2h-2zM102 524h2v2h-2zM107 514h2v2h-2zM110 514h2v2h-2zM107 517h2v2h-2zM111 517h1v2h-2v-1h1zM107 521h2v1h-1v1h-1zM110 521h2v2h-1v-1h-1zM107 524h2v2h-2zM110 524h2v2h-2zM115 514h2v2h-2zM118 514h2v2h-2zM115 517h2v2h-2zM119 517h1v2h-2v-1h1zM115 521h2v1h-1v1h-1zM118 521h2v2h-1v-1h-1zM115 524h2v2h-2zM118 524h2v2h-2zM123 514h2v2h-2zM126 514h2v2h-2zM123 517h2v2h-2zM127 517h1v2h-2v-1h1zM123 521h2v1h-1v1h-1zM126 521h2v2h-1v-1h-1zM123 524h2v2h-2zM126 524h2v2h-2zM131 514h2v2h-2zM134 514h2v2h-2zM131 517h2v2h-2zM135 517h1v2h-2v-1h1zM131 521h2v1h-1v1h-1zM134 521h2v2h-1v-1h-1zM131 524h2v2h-2zM134 524h2v2h-2zM139 514h2v2h-2zM142 514h2v2h-2zM139 517h2v2h-2zM143 517h1v2h-2v-1h1zM139 521h2v1h-1v1h-1zM142 521h2v2h-1v-1h-1zM139 524h2v2h-2zM142 524h2v2h-2zM147 514h2v2h-2zM150 514h2v2h-2zM147 517h2v2h-2zM151 517h1v2h-2v-1h1zM147 521h2v1h-1v1h-1zM150 521h2v2h-1v-1h-1zM147 524h2v2h-2zM150 524h2v2h-2zM155 514h2v2h-2zM158 514h2v2h-2zM155 517h2v2h-2zM159 517h1v2h-2v-1h1zM155 521h2v1h-1v1h-1zM158 521h2v2h-1v-1h-1zM155 524h2v2h-2zM158 524h2v2h-2zM163 514h2v2h-2zM166 514h2v2h-2zM163 517h2v2h-2zM167 517h1v2h-2v-1h1zM163 521h2v1h-1v1h-1zM166 521h2v2h-1v-1h-1zM163 524h2v2h-2zM166 524h2v2h-2zM171 514h2v2h-2zM174 514h2v2h-2zM171 517h2v2h-2zM175 517h1v2h-2v-1h1zM171 521h2v1h-1v1h-1zM174 521h2v2h-1v-1h-1zM171 524h2v2h-2zM174 524h2v2h-2zM179 514h2v2h-2zM182 514h2v2h-2zM179 517h2v2h-2zM183 517h1v2h-2v-1h1zM179 521h2v1h-1v1h-1zM182 521h2v2h-1v-1h-1zM179 524h2v2h-2zM182 524h2v2h-2zM187 514h2v2h-2zM190 514h2v2h-2zM187 517h2v2h-2zM191 517h1v2h-2v-1h1zM187 521h2v1h-1v1h-1zM190 521h2v2h-1v-1h-1zM187 524h2v2h-2zM190 524h2v2h-2zM195 514h2v2h-2zM198 514h2v2h-2zM195 517h2v2h-2zM199 517h1v2h-2v-1h1zM195 521h2v1h-1v1h-1zM198 521h2v2h-1v-1h-1zM195 524h2v2h-2zM198 524h2v2h-2zM203 514h2v2h-2zM206 514h2v2h-2zM203 517h2v2h-2zM207 517h1v2h-2v-1h1zM203 521h2v1h-1v1h-1zM206 521h2v2h-1v-1h-1zM203 524h2v2h-2zM206 524h2v2h-2zM211 514h2v2h-2zM214 514h2v2h-2zM211 517h2v2h-2zM215 517h1v2h-2v-1h1zM211 521h2v1h-1v1h-1zM214 521h2v2h-1v-1h-1zM211 524h2v2h-2zM214 524h2v2h-2zM219 514h2v2h-2zM222 514h2v2h-2zM219 517h2v2h-2zM223 517h1v2h-2v-1h1zM219 521h2v1h-1v1h-1zM222 521h2v2h-1v-1h-1zM219 524h2v2h-2zM222 524h2v2h-2zM227 514h2v2h-2zM230 514h2v2h-2zM227 517h2v2h-2zM231 517h1v2h-2v-1h1zM227 521h2v1h-1v1h-1zM230 521h2v2h-1v-1h-1zM227 524h2v2h-2zM230 524h2v2h-2zM235 514h2v2h-2zM238 514h2v2h-2zM235 517h2v2h-2zM239 517h1v2h-2v-1h1zM235 521h2v1h-1v1h-1zM238 521h2v2h-1v-1h-1zM235 524h2v2h-2zM238 524h2v2h-2zM243 514h2v2h-2zM246 514h2v2h-2zM243 517h2v2h-2zM247 517h1v2h-2v-1h1zM243 521h2v1h-1v1h-1zM246 521h2v2h-1v-1h-1zM243 524h2v2h-2zM246 524h2v2h-2zM251 514h2v2h-2zM254 514h2v2h-2zM251 517h2v2h-2zM255 517h1v2h-2v-1h1zM251 521h2v1h-1v1h-1zM254 521h2v2h-1v-1h-1zM251 524h2v2h-2zM254 524h2v2h-2zM259 514h2v2h-2zM262 514h2v2h-2zM259 517h2v2h-2zM263 517h1v2h-2v-1h1zM259 521h2v1h-1v1h-1zM262 521h2v2h-1v-1h-1zM259 524h2v2h-2zM262 524h2v2h-2zM267 514h2v2h-2zM270 514h2v2h-2zM267 517h2v2h-2zM271 517h1v2h-2v-1h1zM267 521h2v1h-1v1h-1zM270 521h2v2h-1v-1h-1zM267 524h2v2h-2zM270 524h2v2h-2zM275 514h2v2h-2zM278 514h2v2h-2zM275 517h2v2h-2zM279 517h1v2h-2v-1h1zM275 521h2v1h-1v1h-1zM278 521h2v2h-1v-1h-1zM275 524h2v2h-2zM278 524h2v2h-2zM283 514h2v2h-2zM286 514h2v2h-2zM283 517h2v2h-2zM287 517h1v2h-2v-1h1zM283 521h2v1h-1v1h-1zM286 521h2v2h-1v-1h-1zM283 524h2v2h-2zM286 524h2v2h-2zM291 514h2v2h-2zM294 514h2v2h-2zM291 517h2v2h-2zM295 517h1v2h-2v-1h1zM291 521h2v1h-1v1h-1zM294 521h2v2h-1v-1h-1zM291 524h2v2h-2zM294 524h2v2h-2zM299 514h2v2h-2zM302 514h2v2h-2zM299 517h2v2h-2zM303 517h1v2h-2v-1h1zM299 521h2v1h-1v1h-1zM302 521h2v2h-1v-1h-1zM299 524h2v2h-2zM302 524h2v2h-2zM307 514h2v2h-2zM310 514h2v2h-2zM307 517h2v2h-2zM311 517h1v2h-2v-1h1zM307 521h2v1h-1v1h-1zM310 521h2v2h-1v-1h-1zM307 524h2v2h-2zM310 524h2v2h-2zM315 514h2v2h-2zM318 514h2v2h-2zM315 517h2v2h-2zM319 517h1v2h-2v-1h1zM315 521h2v1h-1v1h-1zM318 521h2v2h-1v-1h-1zM315 524h2v2h-2zM318 524h2v2h-2zM323 514h2v2h-2zM326 514h2v2h-2zM323 517h2v2h-2zM327 517h1v2h-2v-1h1zM323 521h2v1h-1v1h-1zM326 521h2v2h-1v-1h-1zM323 524h2v2h-2zM326 524h2v2h-2zM331 514h2v2h-2zM334 514h2v2h-2zM331 517h2v2h-2zM335 517h1v2h-2v-1h1zM331 521h2v1h-1v1h-1zM334 521h2v2h-1v-1h-1zM331 524h2v2h-2zM334 524h2v2h-2zM339 514h2v2h-2zM342 514h2v2h-2zM339 517h2v2h-2zM343 517h1v2h-2v-1h1zM339 521h2v1h-1v1h-1zM342 521h2v2h-1v-1h-1zM339 524h2v2h-2zM342 524h2v2h-2zM347 514h2v2h-2zM350 514h2v2h-2zM347 517h2v2h-2zM351 517h1v2h-2v-1h1zM347 521h2v1h-1v1h-1zM350 521h2v2h-1v-1h-1zM347 524h2v2h-2zM350 524h2v2h-2zM355 514h2v2h-2zM358 514h2v2h-2zM355 517h2v2h-2zM359 517h1v2h-2v-1h1zM355 521h2v1h-1v1h-1zM358 521h2v2h-1v-1h-1zM355 524h2v2h-2zM358 524h2v2h-2zM363 514h2v2h-2zM366 514h2v2h-2zM363 517h2v2h-2zM367 517h1v2h-2v-1h1zM363 521h2v1h-1v1h-1zM366 521h2v2h-1v-1h-1zM363 524h2v2h-2zM366 524h2v2h-2zM371 514h2v2h-2zM374 514h2v2h-2zM371 517h2v2h-2zM375 517h1v2h-2v-1h1zM371 521h2v1h-1v1h-1zM374 521h2v2h-1v-1h-1zM371 524h2v2h-2zM374 524h2v2h-2zM379 514h2v2h-2zM382 514h2v2h-2zM379 517h2v2h-2zM383 517h1v2h-2v-1h1zM379 521h2v1h-1v1h-1zM382 521h2v2h-1v-1h-1zM379 524h2v2h-2zM382 524h2v2h-2zM387 514h2v2h-2zM390 514h2v2h-2zM387 517h2v2h-2zM391 517h1v2h-2v-1h1zM387 521h2v1h-1v1h-1zM390 521h2v2h-1v-1h-1zM387 524h2v2h-2zM390 524h2v2h-2z"/>
<path fill="#9ccc6c" d="M19 581h2v2h-2zM23 581h1v2h-2v-1h1zM19 585h2v1h-1v1h-1zM22 585h2v2h-1v-1h-1zM19 588h2v2h-2zM22 588h2v2h-2zM27 581h2v2h-2zM31 581h1v2h-2v-1h1zM27 585h2v1h-1v1h-1zM30 585h2v2h-1v-1h-1zM27 588h2v2h-2zM30 588h2v2h-2zM35 581h2v2h-2zM39 581h1v2h-2v-1h1zM35 585h2v1h-1v1h-1zM38 585h2v2h-1v-1h-1zM35 588h2v2h-2zM38 588h2v2h-2zM43 581h2v2h-2zM47 581h1v2h-2v-1h1zM43 585h2v1h-1v1h-1zM46 585h2v2h-1v-1h-1zM43 588h2v2h-2zM46 588h2v2h-2zM51 581h2v2h-2zM55 581h1v2h-2v-1h1zM51 585h2v1h-1v1h-1zM54 585h2v2h-1v-1h-1zM51 588h2v2h-2zM54 588h2v2h-2zM59 581h2v2h-2zM63 581h1v2h-2v-1h1zM59 585h2v1h-1v1h-1zM62 585h2v2h-1v-1h-1zM59 588h2v2h-2zM62 588h2v2h-2zM67 581h2v2h-2zM71 581h1v2h-2v-1h1zM67 585h2v1h-1v1h-1zM70 585h2v2h-1v-1h-1zM67 588h2v2h-2zM70 588h2v2h-2zM75 581h2v2h-2zM79 581h1v2h-2v-1h1zM75 585h2v1h-1v1h-1zM78 585h2v2h-1v-1h-1zM75 588h2v2h-2zM78 588h2v2h-2zM83 581h2v2h-2zM87 581h1v2h-2v-1h1zM83 585h2v1h-1v1h-1zM86 585h2v2h-1v-1h-1zM83 588h2v2h-2zM86 588h2v2h-2zM91 581h2v2h-2zM95 581h1v2h-2v-1h1zM91 585h2v1h-1v1h-1zM94 585h2v2h-1v-1h-1zM91 588h2v2h-2zM94 588h2v2h-2zM99 581h2v2h-2zM103 581h1v2h-2v-1h1zM99 585h2v1h-1v1h-1zM102 585h2v2h-1v-1h-1zM99 588h2v2h-2zM102 588h2v2h-2zM107 581h2v2h-2zM111 581h1v2h-2v-1h1zM107 585h2v1h-1v1h-1zM110 585h2v2h-1v-1h-1zM107 588h2v2h-2zM110 588h2v2h-2zM115 581h2v2h-2zM119 581h1v2h-2v-1h1zM115 585h2v1h-1v1h-1zM118 585h2v2h-1v-1h-1zM115 588h2v2h-2zM118 588h2v2h-2zM123 581h2v2h-2zM127 581h1v2h-2v-1h1zM123 585h2v1h-1v1h-1zM126 585h2v2h-1v-1h-1zM123 588h2v2h-2zM126 588h2v2h-2zM131 581h2v2h-2zM135 581h1v2h-2v-1h1zM131 585h2v1h-1v1h-1zM134 585h2v2h-1v-1h-1zM131 588h2v2h-2zM134 588h2v2h-2zM139 581h2v2h-2zM143 581h1v2h-2v-1h1zM139 585h2v1h-1v1h-1zM142 585h2v2h-1v-1h-1zM139 588h2v2h-2zM142 588h2v2h-2zM147 581h2v2h-2zM151 581h1v2h-2v-1h1zM147 585h2v1h-1v1h-1zM150 585h2v2h-1v-1h-1zM147 588h2v2h-2zM150 588h2v2h-2zM155 581h2v2h-2zM159 581h1v2h-2v-1h1zM155 585h2v1h-1v1h-1zM158 585h2v2h-1v-1h-1zM155 588h2v2h-2zM158 588h2v2h-2zM163 581h2v2h-2zM167 581h1v2h-2v-1h1zM163 585h2v1h-1v1h-1zM166 585h2v2h-1v-1h-1zM163 588h2v2h-2zM166 588h2v2h-2zM171 581h2v2h-2zM175 581h1v2h-2v-1h1zM171 585h2v1h-1v1h-1zM174 585h2v2h-1v-1h-1zM171 588h2v2h-2zM174 588h2v2h-2zM179 581h2v2h-2zM183 581h1v2h-2v-1h1zM179 585h2v1h-1v1h-1zM182 585h2v2h-1v-1h-1zM179 588h2v2h-2zM182 588h2v2h-2zM187 581h2v2h-2zM191 581h1v2h-2v-1h1zM187 585h2v1h-1v1h-1zM190 585h2v2h-1v-1h-1zM187 588h2v2h-2zM190 588h2v2h-2zM195 581h2v2h-2zM199 581h1v2h-2v-1h1zM195 585h2v1h-1v1h-1zM198 585h2v2h-1v-1h-1zM195 588h2v2h-2zM198 588h2v2h-2zM203 581h2v2h-2zM207 581h1v2h-2v-1h1zM203 585h2v1h-1v1h-1zM206 585h2v2h-1v-1h-1zM203 588h2v2h-2zM206 588h2v2h-2zM211 581h2v2h-2zM215 581h1v2h-2v-1h1zM211 585h2v1h-1v1h-1zM214 585h2v2h-1v-1h-1zM211 588h2v2h-2zM214 588h2v2h-2zM219 581h2v2h-2zM223 581h1v2h-2v-1h1zM219 585h2v1h-1v1h-1zM222 585h2v2h-1v-1h-1zM219 588h2v2h-2zM222 588h2v2h-2zM227 581h2v2h-2zM231 581h1v2h-2v-1h1zM227 585h2v1h-1v1h-1zM230 585h2v2h-1v-1h-1zM227 588h2v2h-2zM230 588h2v2h-2zM235 581h2v2h-2zM239 581h1v2h-2v-1h1zM235 585h2v1h-1v1h-1zM238 585h2v2h-1v-1h-1zM235 588h2v2h-2zM238 588h2v2h-2zM243 581h2v2h-2zM247 581h1v2h-2v-1h1zM243 585h2v1h-1v1h-1zM246 585h2v2h-1v-1h-1zM243 588h2v2h-2zM246 588h2v2h-2zM251 581h2v2h-2zM255 581h1v2h-2v-1h1zM251 585h2v1h-1v1h-1zM254 585h2v2h-1v-1h-1zM251 588h2v2h-2zM254 588h2v2h-2zM259 581h2v2h-2zM263 581h1v2h-2v-1h1zM259 585h2v1h-1v1h-1zM262 585h2v2h-1v-1h-1zM259 588h2v2h-2zM262 588h2v2h-2zM267 581h2v2h-2zM271 581h1v2h-2v-1h1zM267 585h2v1h-1v1h-1zM270 585h2v2h-1v-1h-1zM267 588h2v2h-2zM270 588h2v2h-2zM275 581h2v2h-2zM279 581h1v2h-2v-1h1zM275 585h2v1h-1v1h-1zM278 585h2v2h-1v-1h-1zM275 588h2v2h-2zM278 588h2v2h-2zM283 581h2v2h-2zM287 581h1v2h-2v-1h1zM283 585h2v1h-1v1h-1zM286 585h2v2h-1v-1h-1zM283 588h2v2h-2zM286 588h2v2h-2zM291 581h2v2h-2zM295 581h1v2h-2v-1h1zM291 585h2v1h-1v1h-1zM294 585h2v2h-1v-1h-1zM291 588h2v2h-2zM294 588h2v2h-2zM299 581h2v2h-2zM303 581h1v2h-2v-1h1zM299 585h2v1h-1v1h-1zM302 585h2v2h-1v-1h-1zM299 588h2v2h-2zM302 588h2v2h-2zM307 581h2v2h-2zM311 581h1v2h-2v-1h1zM307 585h2v1h-1v1h-1zM310 585h2v2h-1v-1h-1zM307 588h2v2h-2zM310 588h2v2h-2zM315 581h2v2h-2zM319 581h1v2h-2v-1h1zM315 585h2v1h-1v1h-1zM318 585h2v2h-1v-1h-1zM315 588h2v2h-2zM318 588h2v2h-2zM323 581h2v2h-2zM327 581h1v2h-2v-1h1zM323 585h2v1h-1v1h-1zM326 585h2v2h-1v-1h-1zM323 588h2v2h-2zM326 588h2v2h-2zM331 581h2v2h-2zM335 581h1v2h-2v-1h1zM331 585h2v1h-1v1h-1zM334 585h2v2h-1v-1h-1zM331 588h2v2h-2zM334 588h2v2h-2zM339 581h2v2h-2zM343 581h1v2h-2v-1h1zM339 585h2v1h-1v1h-1zM342 585h2v2h-1v-1h-1zM339 588h2v2h-2zM342 588h2v2h-2zM347 581h2v2h-2zM351 581h1v2h-2v-1h1zM347 585h2v1h-1v1h-1zM350 585h2v2h-1v-1h-1zM347 588h2v2h-2zM350 588h2v2h-2zM355 581h2v2h-2zM359 581h1v2h-2v-1h1zM355 585h2v1h-1v1h-1zM358 585h2v2h-1v-1h-1zM355 588h2v2h-2zM358 588h2v2h-2zM363 581h2v2h-2zM367 581h1v2h-2v-1h1zM363 585h2v1h-1v1h-1zM366 585h2v2h-1v-1h-1zM363 588h2v2h-2zM366 588h2v2h-2zM371 581h2v2h-2zM375 581h1v2h-2v-1h1zM371 585h2v1h-1v1h-1zM374 585h2v2h-1v-1h-1zM371 588h2v2h-2zM374 588h2v2h-2zM379 581h2v2h-2zM383 581h1v2h-2v-1h1zM379 585h2v1h-1v1h-1zM382 585h2v2h-1v-1h-1zM379 588h2v2h-2zM382 588h2v2h-2zM387 581h2v2h-2zM391 581h1v2h-2v-1h1zM387 585h2v1h-1v1h-1zM390 585h2v2h-1v-1h-1zM387 588h2v2h-2zM390 588h2v2h-2z"/>
<path fill="#484848" d="M443 348h2v2h-2zM446 348h2v2h-2zM451 348h2v2h-2zM454 348h2v2h-2zM459 348h2v2h-2zM462 348h2v2h-2zM467 348h2v2h-2zM470 348h2v2h-2zM475 348h2v2h-2zM478 348h2v2h-2zM483 348h2v2h-2zM486 348h2v2h-2zM491 348h2v2h-2zM494 348h2v2h-2zM499 348h2v2h-2zM502 348h2v2h-2zM507 348h2v2h-2zM510 348h2v2h-2zM515 348h2v2h-2zM518 348h2v2h-2zM523 348h2v2h-2zM526 348h2v2h-2zM531 348h2v2h-2zM534 348h2v2h-2zM539 348h2v2h-2zM542 348h2v2h-2zM547 348h2v2h-2zM550 348h2v2h-2zM555 348h2v2h-2zM558 348h2v2h-2zM563 348h2v2h-2zM566 348h2v2h-2zM571 348h2v2h-2zM574 348h2v2h-2zM579 348h2v2h-2zM582 348h2v2h-2zM587 348h2v2h-2zM590 348h2v2h-2zM595 348h2v2h-2zM598 348h2v2h-2zM603 348h2v2h-2zM606 348h2v2h-2zM611 348h2v2h-2zM614 348h2v2h-2zM619 348h2v2h-2zM622 348h2v2h-2zM627 348h2v2h-2zM630 348h2v2h-2zM635 348h2v2h-2zM638 348h2v2h-2zM643 348h2v2h-2zM646 348h2v2h-2zM651 348h2v2h-2zM654 348h2v2h-2zM659 348h2v2h-2zM662 348h2v2h-2zM667 348h2v2h-2zM670 348h2v2h-2zM675 348h2v2h-2zM678 348h2v2h-2zM683 348h2v2h-2zM686 348h2v2h-2zM691 348h2v2h-2zM694 348h2v2h-2zM699 348h2v2h-2zM702 348h2v2h-2zM707 348h2v2h-2zM710 348h2v2h-2zM715 348h2v2h-2zM718 348h2v2h-2zM723 348h2v2h-2zM726 348h2v2h-2zM731 348h2v2h-2zM734 348h2v2h-2zM739 348h2v2h-2zM742 348h2v2h-2zM747 348h2v2h-2zM750 348h2v2h-2zM755 348h2v2h-2zM758 348h2v2h-2zM763 348h2v2h-2zM766 348h2v2h-2z"/>
<path fill="#4538a6" d="M19 732h2v2h-2zM19 729h2v1h-1v1h-1zM19 725h2v2h-2zM19 722h2v2h-2zM22 732h2v2h-2zM22 729h2v2h-1v-1h-1zM23 725h1v2h-2v-1h1zM22 722h2v2h-2zM27 732h2v2h-2zM27 729h2v1h-1v1h-1zM27 725h2v2h-2zM27 722h2v2h-2zM30 732h2v2h-2zM30 729h2v2h-1v-1h-1zM31 725h1v2h-2v-1h1zM30 722h2v2h-2zM35 732h2v2h-2zM35 729h2v1h-1v1h-1zM35 725h2v2h-2zM35 722h2v2h-2zM38 732h2v2h-2zM38 729h2v2h-1v-1h-1zM39 725h1v2h-2v-1h1zM38 722h2v2h-2zM43 732h2v2h-2zM43 729h2v1h-1v1h-1zM43 725h2v2h-2zM43 722h2v2h-2zM46 732h2v2h-2zM46 729h2v2h-1v-1h-1zM47 725h1v2h-2v-1h1zM46 722h2v2h-2zM51 732h2v2h-2zM51 729h2v1h-1v1h-1zM51 725h2v2h-2zM51 722h2v2h-2zM54 732h2v2h-2zM54 729h2v2h-1v-1h-1zM55 725h1v2h-2v-1h1zM54 722h2v2h-2zM59 732h2v2h-2zM59 729h2v1h-1v1h-1zM59 725h2v2h-2zM59 722h2v2h-2zM62 732h2v2h-2zM62 729h2v2h-1v-1h-1zM63 725h1v2h-2v-1h1zM62 722h2v2h-2zM67 732h2v2h-2zM67 729h2v1h-1v1h-1zM67 725h2v2h-2zM67 722h2v2h-2zM70 732h2v2h-2zM70 729h2v2h-1v-1h-1zM71 725h1v2h-2v-1h1zM70 722h2v2h-2zM75 732h2v2h-2zM75 729h2v1h-1v1h-1zM75 725h2v2h-2zM75 722h2v2h-2zM78 732h2v2h-2zM78 729h2v2h-1v-1h-1zM79 725h1v2h-2v-1h1zM78 722h2v2h-2zM83 732h2v2h-2zM83 729h2v1h-1v1h-1zM83 725h2v2h-2zM83 722h2v2h-2zM86 732h2v2h-2zM86 729h2v2h-1v-1h-1zM87 725h1v2h-2v-1h1zM86 722h2v2h-2zM91 732h2v2h-2zM91 729h2v1h-1v1h-1zM91 725h2v2h-2zM91 722h2v2h-2zM94 732h2v2h-2zM94 729h2v2h-1v-1h-1zM95 725h1v2h-2v-1h1zM94 722h2v2h-2zM99 732h2v2h-2zM99 729h2v1h-1v1h-1zM99 725h2v2h-2zM99 722h2v2h-2zM102 732h2v2h-2zM102 729h2v2h-1v-1h-1zM103 725h1v2h-2v-1h1zM102 722h2v2h-2zM107 732h2v2h-2zM107 729h2v1h-1v1h-1zM107 725h2v2h-2zM107 722h2v2h-2zM110 732h2v2h-2zM110 729h2v2h-1v-1h-1zM111 725h1v2h-2v-1h1zM110 722h2v2h-2zM115 732h2v2h-2zM115 729h2v1h-1v1h-1zM115 725h2v2h-2zM115 722h2v2h-2zM118 732h2v2h-2zM118 729h2v2h-1v-1h-1zM119 725h1v2h-2v-1h1zM118 722h2v2h-2zM123 732h2v2h-2zM123 729h2v1h-1v1h-1zM123 725h2v2h-2zM123 722h2v2h-2zM126 732h2v2h-2zM126 729h2v2h-1v-1h-1zM127 725h1v2h-2v-1h1zM126 722h2v2h-2zM131 732h2v2h-2zM131 729h2v1h-1v1h-1zM131 725h2v2h-2zM131 722h2v2h-2zM134 732h2v2h-2zM134 729h2v2h-1v-1h-1zM135 725h1v2h-2v-1h1zM134 722h2v2h-2zM139 732h2v2h-2zM139 729h2v1h-1v1h-1zM139 725h2v2h-2zM139 722h2v2h-2zM142 732h2v2h-2zM142 729h2v2h-1v-1h-1zM143 725h1v2h-2v-1h1zM142 722h2v2h-2zM147 732h2v2h-2zM147 729h2v1h-1v1h-1zM147 725h2v2h-2zM147 722h2v2h-2zM150 732h2v2h-2zM150 729h2v2h-1v-1h-1zM151 725h1v2h-2v-1h1zM150 722h2v2h-2zM155 732h2v2h-2zM155 729h2v1h-1v1h-1zM155 725h2v2h-2zM155 722h2v2h-2zM158 732h2v2h-2zM158 729h2v2h-1v-1h-1zM159 725h1v2h-2v-1h1zM158 722h2v2h-2zM163 732h2v2h-2zM163 729h2v1h-1v1h-1zM163 725h2v2h-2zM163 722h2v2h-2zM166 732h2v2h-2zM166 729h2v2h-1v-1h-1zM167 725h1v2h-2v-1h1zM166 722h2v2h-2zM171 732h2v2h-2zM171 729h2v1h-1v1h-1zM171 725h2v2h-2zM171 722h2v2h-2zM174 732h2v2h-2zM174 729h2v2h-1v-1h-1zM175 725h1v2h-2v-1h1zM174 722h2v2h-2zM179 732h2v2h-2zM179 729h2v1h-1v1h-1zM179 725h2v2h-2zM179 722h2v2h-2zM182 732h2v2h-2zM182 729h2v2h-1v-1h-1zM183 725h1v2h-2v-1h1zM182 722h2v2h-2zM187 732h2v2h-2zM187 729h2v1h-1v1h-1zM187 725h2v2h-2zM187 722h2v2h-2zM190 732h2v2h-2zM190 729h2v2h-1v-1h-1zM191 725h1v2h-2v-1h1zM190 722h2v2h-2zM195 732h2v2h-2zM195 729h2v1h-1v1h-1zM195 725h2v2h-2zM195 722h2v2h-2zM198 732h2v2h-2zM198 729h2v2h-1v-1h-1zM199 725h1v2h-2v-1h1zM198 722h2v2h-2zM203 732h2v2h-2zM203 729h2v1h-1v1h-1zM203 725h2v2h-2zM203 722h2v2h-2zM206 732h2v2h-2zM206 729h2v2h-1v-1h-1zM207 725h1v2h-2v-1h1zM206 722h2v2h-2zM211 732h2v2h-2zM211 729h2v1h-1v1h-1zM211 725h2v2h-2zM211 722h2v2h-2zM214 732h2v2h-2zM214 729h2v2h-1v-1h-1zM215 725h1v2h-2v-1h1zM214 722h2v2h-2zM219 732h2v2h-2zM219 729h2v1h-1v1h-1zM219 725h2v2h-2zM219 722h2v2h-2zM222 732h2v2h-2zM222 729h2v2h-1v-1h-1zM223 725h1v2h-2v-1h1zM222 722h2v2h-2zM227 732h2v2h-2zM227 729h2v1h-1v1h-1zM227 725h2v2h-2zM227 722h2v2h-2zM230 732h2v2h-2zM230 729h2v2h-1v-1h-1zM231 725h1v2h-2v-1h1zM230 722h2v2h-2zM235 732h2v2h-2zM235 729h2v1h-1v1h-1zM235 725h2v2h-2zM235 722h2v2h-2zM238 732h2v2h-2zM238 729h2v2h-1v-1h-1zM239 725h1v2h-2v-1h1zM238 722h2v2h-2zM243 732h2v2h-2zM243 729h2v1h-1v1h-1zM243 725h2v2h-2zM243 722h2v2h-2zM246 732h2v2h-2zM246 729h2v2h-1v-1h-1zM247 725h1v2h-2v-1h1zM246 722h2v2h-2zM251 732h2v2h-2zM251 729h2v1h-1v1h-1zM251 725h2v2h-2zM251 722h2v2h-2zM254 732h2v2h-2zM254 729h2v2h-1v-1h-1zM255 725h1v2h-2v-1h1zM254 722h2v2h-2zM259 732h2v2h-2zM259 729h2v1h-1v1h-1zM259 725h2v2h-2zM259 722h2v2h-2zM262 732h2v2h-2zM262 729h2v2h-1v-1h-1zM263 725h1v2h-2v-1h1zM262 722h2v2h-2zM267 732h2v2h-2zM267 729h2v1h-1v1h-1zM267 725h2v2h-2zM267 722h2v2h-2zM270 732h2v2h-2zM270 729h2v2h-1v-1h-1zM271 725h1v2h-2v-1h1zM270 722h2v2h-2zM275 732h2v2h-2zM275 729h2v1h-1v1h-1zM275 725h2v2h-2zM275 722h2v2h-2zM278 732h2v2h-2zM278 729h2v2h-1v-1h-1zM279 725h1v2h-2v-1h1zM278 722h2v2h-2zM283 732h2v2h-2zM283 729h2v1h-1v1h-1zM283 725h2v2h-2zM283 722h2v2h-2zM286 732h2v2h-2zM286 729h2v2h-1v-1h-1zM287 725h1v2h-2v-1h1zM286 722h2v2h-2zM291 732h2v2h-2zM291 729h2v1h-1v1h-1zM291 725h2v2h-2zM291 722h2v2h-2zM294 732h2v2h-2zM294 729h2v2h-1v-1h-1zM295 725h1v2h-2v-1h1zM294 722h2v2h-2zM299 732h2v2h-2zM299 729h2v1h-1v1h-1zM299 725h2v2h-2zM299 722h2v2h-2zM302 732h2v2h-2zM302 729h2v2h-1v-1h-1zM303 725h1v2h-2v-1h1zM302 722h2v2h-2zM307 732h2v2h-2zM307 729h2v1h-1v1h-1zM307 725h2v2h-2zM307 722h2v2h-2zM310 732h2v2h-2zM310 729h2v2h-1v-1h-1zM311 725h1v2h-2v-1h1zM310 722h2v2h-2zM315 732h2v2h-2zM315 729h2v1h-1v1h-1zM315 725h2v2h-2zM315 722h2v2h-2zM318 732h2v2h-2zM318 729h2v2h-1v-1h-1zM319 725h1v2h-2v-1h1zM318 722h2v2h-2zM323 732h2v2h-2zM323 729h2v1h-1v1h-1zM323 725h2v2h-2zM323 722h2v2h-2zM326 732h2v2h-2zM326 729h2v2h-1v-1h-1zM327 725h1v2h-2v-1h1zM326 722h2v2h-2zM331 732h2v2h-2zM331 729h2v1h-1v1h-1zM331 725h2v2h-2zM331 722h2v2h-2zM334 732h2v2h-2zM334 729h2v2h-1v-1h-1zM335 725h1v2h-2v-1h1zM334 722h2v2h-2zM339 732h2v2h-2zM339 729h2v1h-1v1h-1zM339 725h2v2h-2zM339 722h2v2h-2zM342 732h2v2h-2zM342 729h2v2h-1v-1h-1zM343 725h1v2h-2v-1h1zM342 722h2v2h-2zM347 732h2v2h-2zM347 729h2v1h-1v1h-1zM347 725h2v2h-2zM347 722h2v2h-2zM350 732h2v2h-2zM350 729h2v2h-1v-1h-1zM351 725h1v2h-2v-1h1zM350 722h2v2h-2zM355 732h2v2h-2zM355 729h2v1h-1v1h-1zM355 725h2v2h-2zM355 722h2v2h-2zM358 732h2v2h-2zM358 729h2v2h-1v-1h-1zM359 725h1v2h-2v-1h1zM358 722h2v2h-2zM363 732h2v2h-2zM363 729h2v1h-1v1h-1zM363 725h2v2h-2zM363 722h2v2h-2zM366 732h2v2h-2zM366 729h2v2h-1v-1h-1zM367 725h1v2h-2v-1h1zM366 722h2v2h-2zM371 732h2v2h-2zM371 729h2v1h-1v1h-1zM371 725h2v2h-2zM371 722h2v2h-2zM374 732h2v2h-2zM374 729h2v2h-1v-1h-1zM375 725h1v2h-2v-1h1zM374 722h2v2h-2zM379 732h2v2h-2zM379 729h2v1h-1v1h-1zM379 725h2v2h-2zM379 722h2v2h-2zM382 732h2v2h-2zM382 729h2v2h-1v-1h-1zM383 725h1v2h-2v-1h1zM382 722h2v2h-2zM387 732h2v2h-2zM387 729h2v1h-1v1h-1zM387 725h2v2h-2zM387 722h2v2h-2zM390 732h2v2h-2zM390 729h2v2h-1v-1h-1zM391 725h1v2h-2v-1h1zM390 722h2v2h-2zM395 732h2v2h-2zM395 729h2v1h-1v1h-1zM395 725h2v2h-2zM395 722h2v2h-2zM398 732h2v2h-2zM398 729h2v2h-1v-1h-1zM399 725h1v2h-2v-1h1zM398 722h2v2h-2zM403 732h2v2h-2zM403 729h2v1h-1v1h-1zM403 725h2v2h-2zM403 722h2v2h-2zM406 732h2v2h-2zM406 729h2v2h-1v-1h-1zM407 725h1v2h-2v-1h1zM406 722h2v2h-2zM411 732h2v2h-2zM411 729h2v1h-1v1h-1zM411 725h2v2h-2zM411 722h2v2h-2zM414 732h2v2h-2zM414 729h2v2h-1v-1h-1zM415 725h1v2h-2v-1h1zM414 722h2v2h-2zM419 732h2v2h-2zM419 729h2v1h-1v1h-1zM419 725h2v2h-2zM419 722h2v2h-2zM422 732h2v2h-2zM422 729h2v2h-1v-1h-1zM423 725h1v2h-2v-1h1zM422 722h2v2h-2zM427 732h2v2h-2zM427 729h2v1h-1v1h-1zM427 725h2v2h-2zM427 722h2v2h-2zM430 732h2v2h-2zM430 729h2v2h-1v-1h-1zM431 725h1v2h-2v-1h1zM430 722h2v2h-2zM435 732h2v2h-2zM435 729h2v1h-1v1h-1zM435 725h2v2h-2zM435 722h2v2h-2zM438 732h2v2h-2zM438 729h2v2h-1v-1h-1zM439 725h1v2h-2v-1h1zM438 722h2v2h-2zM443 732h2v2h-2zM443 729h2v1h-1v1h-1zM443 725h2v2h-2zM443 722h2v2h-2zM446 732h2v2h-2zM446 729h2v2h-1v-1h-1zM447 725h1v2h-2v-1h1zM446 722h2v2h-2zM451 732h2v2h-2zM451 729h2v1h-1v1h-1zM451 725h2v2h-2zM451 722h2v2h-2zM454 732h2v2h-2zM454 729h2v2h-1v-1h-1zM455 725h1v2h-2v-1h1zM454 722h2v2h-2zM459 732h2v2h-2zM459 729h2v1h-1v1h-1zM459 725h2v2h-2zM459 722h2v2h-2zM462 732h2v2h-2zM462 729h2v2h-1v-1h-1zM463 725h1v2h-2v-1h1zM462 722h2v2h-2zM467 732h2v2h-2zM467 729h2v1h-1v1h-1zM467 725h2v2h-2zM467 722h2v2h-2zM470 732h2v2h-2zM470 729h2v2h-1v-1h-1zM471 725h1v2h-2v-1h1zM470 722h2v2h-2zM475 732h2v2h-2zM475 729h2v1h-1v1h-1zM475 725h2v2h-2zM475 722h2v2h-2zM478 732h2v2h-2zM478 729h2v2h-1v-1h-1zM479 725h1v2h-2v-1h1zM478 722h2v2h-2zM483 732h2v2h-2zM483 729h2v1h-1v1h-1zM483 725h2v2h-2zM483 722h2v2h-2zM486 732h2v2h-2zM486 729h2v2h-1v-1h-1zM487 725h1v2h-2v-1h1zM486 722h2v2h-2zM491 732h2v2h-2zM491 729h2v1h-1v1h-1zM491 725h2v2h-2zM491 722h2v2h-2zM494 732h2v2h-2zM494 729h2v2h-1v-1h-1zM495 725h1v2h-2v-1h1zM494 722h2v2h-2zM499 732h2v2h-2zM499 729h2v1h-1v1h-1zM499 725h2v2h-2zM499 722h2v2h-2zM502 732h2v2h-2zM502 729h2v2h-1v-1h-1zM503 725h1v2h-2v-1h1zM502 722h2v2h-2zM507 732h2v2h-2zM507 729h2v1h-1v1h-1zM507 725h2v2h-2zM507 722h2v2h-2zM510 732h2v2h-2zM510 729h2v2h-1v-1h-1zM511 725h1v2h-2v-1h1zM510 722h2v2h-2zM515 732h2v2h-2zM515 729h2v1h-1v1h-1zM515 725h2v2h-2zM515 722h2v2h-2zM518 732h2v2h-2zM518 729h2v2h-1v-1h-1zM519 725h1v2h-2v-1h1zM518 722h2v2h-2zM523 732h2v2h-2zM523 729h2v1h-1v1h-1zM523 725h2v2h-2zM523 722h2v2h-2zM526 732h2v2h-2zM526 729h2v2h-1v-1h-1zM527 725h1v2h-2v-1h1zM526 722h2v2h-2zM531 732h2v2h-2zM531 729h2v1h-1v1h-1zM531 725h2v2h-2zM531 722h2v2h-2zM534 732h2v2h-2zM534 729h2v2h-1v-1h-1zM535 725h1v2h-2v-1h1zM534 722h2v2h-2zM539 732h2v2h-2zM539 729h2v1h-1v1h-1zM539 725h2v2h-2zM539 722h2v2h-2zM542 732h2v2h-2zM542 729h2v2h-1v-1h-1zM543 725h1v2h-2v-1h1zM542 722h2v2h-2zM547 732h2v2h-2zM547 729h2v1h-1v1h-1zM547 725h2v2h-2zM547 722h2v2h-2zM550 732h2v2h-2zM550 729h2v2h-1v-1h-1zM551 725h1v2h-2v-1h1zM550 722h2v2h-2zM555 732h2v2h-2zM555 729h2v1h-1v1h-1zM555 725h2v2h-2zM555 722h2v2h-2zM558 732h2v2h-2zM558 729h2v2h-1v-1h-1zM559 725h1v2h-2v-1h1zM558 722h2v2h-2z"/>
<path fill="#5042b0" d="M19 716h2v2h-2zM19 713h2v1h-1v1h-1zM19 709h2v2h-2zM22 716h2v2h-2zM22 713h2v2h-1v-1h-1zM27 716h2v2h-2zM27 713h2v1h-1v1h-1zM27 709h2v2h-2zM30 716h2v2h-2zM35 716h2v2h-2zM38 716h2v2h-2zM38 713h2v2h-1v-1h-1zM39 709h1v2h-2v-1h1zM43 716h2v2h-2zM46 716h2v2h-2zM51 716h2v2h-2zM51 713h2v1h-1v1h-1zM54 716h2v2h-2zM59 716h2v2h-2zM62 716h2v2h-2zM67 716h2v2h-2zM75 716h2v2h-2zM75 713h2v1h-1v1h-1zM75 709h2v2h-2zM75 706h2v2h-2zM78 716h2v2h-2zM78 713h2v2h-1v-1h-1zM79 709h1v2h-2v-1h1zM78 706h2v2h-2zM83 716h2v2h-2zM83 713h2v1h-1v1h-1zM86 716h2v2h-2zM86 713h2v2h-1v-1h-1zM87 709h1v2h-2v-1h1zM86 706h2v2h-2zM91 716h2v2h-2zM91 713h2v1h-1v1h-1zM91 709h2v2h-2zM91 706h2v2h-2zM94 716h2v2h-2zM94 713h2v2h-1v-1h-1zM95 709h1v2h-2v-1h1zM94 706h2v2h-2zM99 716h2v2h-2zM99 713h2v1h-1v1h-1zM99 709h2v2h-2zM102 716h2v2h-2zM102 713h2v2h-1v-1h-1zM103 709h1v2h-2v-1h1zM102 706h2v2h-2zM107 716h2v2h-2zM110 716h2v2h-2zM118 716h2v2h-2zM123 716h2v2h-2zM123 713h2v1h-1v1h-1zM126 716h2v2h-2zM134 716h2v2h-2zM134 713h2v2h-1v-1h-1zM135 709h1v2h-2v-1h1zM150 716h2v2h-2zM150 713h2v2h-1v-1h-1zM151 709h1v2h-2v-1h1zM150 706h2v2h-2zM155 716h2v2h-2zM155 713h2v1h-1v1h-1zM155 709h2v2h-2zM155 706h2v2h-2zM158 716h2v2h-2zM158 713h2v2h-1v-1h-1zM159 709h1v2h-2v-1h1zM158 706h2v2h-2zM163 716h2v2h-2zM163 713h2v1h-1v1h-1zM163 709h2v2h-2zM163 706h2v2h-2zM166 716h2v2h-2zM166 713h2v2h-1v-1h-1zM167 709h1v2h-2v-1h1zM166 706h2v2h-2zM171 716h2v2h-2zM171 713h2v1h-1v1h-1zM171 709h2v2h-2zM171 706h2v2h-2zM174 716h2v2h-2zM174 713h2v2h-1v-1h-1zM179 716h2v2h-2zM182 716h2v2h-2zM187 716h2v2h-2zM190 716h2v2h-2zM190 713h2v2h-1v-1h-1zM195 716h2v2h-2zM198 716h2v2h-2zM206 716h2v2h-2zM206 713h2v2h-1v-1h-1zM207 709h1v2h-2v-1h1zM206 706h2v2h-2zM211 716h2v2h-2zM211 713h2v1h-1v1h-1zM214 716h2v2h-2zM222 716h2v2h-2zM227 716h2v2h-2zM227 713h2v1h-1v1h-1zM227 709h2v2h-2zM227 706h2v2h-2zM230 716h2v2h-2zM230 713h2v2h-1v-1h-1zM231 709h1v2h-2v-1h1zM230 706h2v2h-2zM235 716h2v2h-2zM235 713h2v1h-1v1h-1zM235 709h2v2h-2zM238 716h2v2h-2zM238 713h2v2h-1v-1h-1zM239 709h1v2h-2v-1h1zM238 706h2v2h-2zM243 716h2v2h-2zM243 713h2v1h-1v1h-1zM243 709h2v2h-2zM243 706h2v2h-2zM246 716h2v2h-2zM246 713h2v2h-1v-1h-1zM247 709h1v2h-2v-1h1zM251 716h2v2h-2zM251 713h2v1h-1v1h-1zM254 716h2v2h-2zM254 713h2v2h-1v-1h-1zM255 709h1v2h-2v-1h1zM254 706h2v2h-2zM259 716h2v2h-2zM259 713h2v1h-1v1h-1zM262 716h2v2h-2zM262 713h2v2h-1v-1h-1zM267 716h2v2h-2zM267 713h2v1h-1v1h-1zM267 709h2v2h-2zM267 706h2v2h-2zM270 716h2v2h-2zM275 716h2v2h-2zM275 713h2v1h-1v1h-1zM278 716h2v2h-2zM278 713h2v2h-1v-1h-1zM279 709h1v2h-2v-1h1zM283 716h2v2h-2zM286 716h2v2h-2zM286 713h2v2h-1v-1h-1zM291 716h2v2h-2zM294 716h2v2h-2zM302 716h2v2h-2zM302 713h2v2h-1v-1h-1zM303 709h1v2h-2v-1h1zM302 706h2v2h-2zM307 716h2v2h-2zM307 713h2v1h-1v1h-1zM307 709h2v2h-2zM307 706h2v2h-2zM310 716h2v2h-2zM310 713h2v2h-1v-1h-1zM311 709h1v2h-2v-1h1zM310 706h2v2h-2zM315 716h2v2h-2zM315 713h2v1h-1v1h-1zM315 709h2v2h-2zM315 706h2v2h-2zM318 716h2v2h-2zM318 713h2v2h-1v-1h-1zM319 709h1v2h-2v-1h1zM318 706h2v2h-2zM323 716h2v2h-2zM323 713h2v1h-1v1h-1zM323 709h2v2h-2zM323 706h2v2h-2zM326 716h2v2h-2zM326 713h2v2h-1v-1h-1zM331 716h2v2h-2zM334 716h2v2h-2zM339 716h2v2h-2zM342 716h2v2h-2zM355 716h2v2h-2zM355 713h2v1h-1v1h-1zM358 716h2v2h-2zM363 716h2v2h-2zM366 716h2v2h-2zM379 716h2v2h-2zM379 713h2v1h-1v1h-1zM379 709h2v2h-2zM379 706h2v2h-2zM382 716h2v2h-2zM382 713h2v2h-1v-1h-1zM383 709h1v2h-2v-1h1zM382 706h2v2h-2zM387 716h2v2h-2zM387 713h2v1h-1v1h-1zM387 709h2v2h-2zM390 716h2v2h-2zM390 713h2v2h-1v-1h-1zM391 709h1v2h-2v-1h1zM390 706h2v2h-2zM395 716h2v2h-2zM395 713h2v1h-1v1h-1zM395 709h2v2h-2zM395 706h2v2h-2zM398 716h2v2h-2zM398 713h2v2h-1v-1h-1zM399 709h1v2h-2v-1h1zM398 706h2v2h-2zM403 716h2v2h-2zM403 713h2v1h-1v1h-1zM403 709h2v2h-2zM406 716h2v2h-2zM406 713h2v2h-1v-1h-1zM407 709h1v2h-2v-1h1zM411 716h2v2h-2zM414 716h2v2h-2zM414 713h2v2h-1v-1h-1zM419 716h2v2h-2zM419 713h2v1h-1v1h-1zM422 716h2v2h-2zM422 713h2v2h-1v-1h-1zM427 716h2v2h-2zM430 716h2v2h-2zM430 713h2v2h-1v-1h-1zM435 716h2v2h-2zM435 713h2v1h-1v1h-1zM438 716h2v2h-2zM443 716h2v2h-2zM446 716h2v2h-2zM446 713h2v2h-1v-1h-1zM447 709h1v2h-2v-1h1zM446 706h2v2h-2zM454 716h2v2h-2zM454 713h2v2h-1v-1h-1zM455 709h1v2h-2v-1h1zM454 706h2v2h-2zM459 716h2v2h-2zM459 713h2v1h-1v1h-1zM459 709h2v2h-2zM459 706h2v2h-2zM462 716h2v2h-2zM462 713h2v2h-1v-1h-1zM463 709h1v2h-2v-1h1zM467 716h2v2h-2zM467 713h2v1h-1v1h-1zM467 709h2v2h-2zM467 706h2v2h-2zM470 716h2v2h-2zM470 713h2v2h-1v-1h-1zM471 709h1v2h-2v-1h1zM470 706h2v2h-2zM475 716h2v2h-2zM475 713h2v1h-1v1h-1zM475 709h2v2h-2zM475 706h2v2h-2zM478 716h2v2h-2zM478 713h2v2h-1v-1h-1zM479 709h1v2h-2v-1h1zM478 706h2v2h-2zM483 716h2v2h-2zM486 716h2v2h-2zM499 716h2v2h-2zM502 716h2v2h-2zM507 716h2v2h-2zM518 716h2v2h-2zM518 713h2v2h-1v-1h-1zM519 709h1v2h-2v-1h1zM523 716h2v2h-2zM526 716h2v2h-2zM531 716h2v2h-2zM531 713h2v1h-1v1h-1zM531 709h2v2h-2zM531 706h2v2h-2zM534 716h2v2h-2zM534 713h2v2h-1v-1h-1zM535 709h1v2h-2v-1h1zM534 706h2v2h-2zM539 716h2v2h-2zM539 713h2v1h-1v1h-1zM539 709h2v2h-2zM539 706h2v2h-2zM542 716h2v2h-2zM542 713h2v2h-1v-1h-1zM543 709h1v2h-2v-1h1zM542 706h2v2h-2zM547 716h2v2h-2zM547 713h2v1h-1v1h-1zM547 709h2v2h-2zM547 706h2v2h-2zM550 716h2v2h-2zM550 713h2v2h-1v-1h-1zM551 709h1v2h-2v-1h1zM550 706h2v2h-2zM555 716h2v2h-2zM555 713h2v1h-1v1h-1zM555 709h2v2h-2zM558 716h2v2h-2z"/>
<path fill="#5e50be" d="M75 700h2v2h-2zM75 697h2v1h-1v1h-1zM75 693h2v2h-2zM75 690h2v2h-2zM78 700h2v2h-2zM86 700h2v2h-2zM86 697h2v2h-1v-1h-1zM87 693h1v2h-2v-1h1zM86 690h2v2h-2zM91 700h2v2h-2zM91 697h2v1h-1v1h-1zM94 700h2v2h-2zM94 697h2v2h-1v-1h-1zM102 700h2v2h-2zM150 700h2v2h-2zM150 697h2v2h-1v-1h-1zM151 693h1v2h-2v-1h1zM150 690h2v2h-2zM155 700h2v2h-2zM155 697h2v1h-1v1h-1zM155 693h2v2h-2zM155 690h2v2h-2zM158 700h2v2h-2zM163 700h2v2h-2zM163 697h2v1h-1v1h-1zM163 693h2v2h-2zM163 690h2v2h-2zM166 700h2v2h-2zM166 697h2v2h-1v-1h-1zM167 693h1v2h-2v-1h1zM166 690h2v2h-2zM171 700h2v2h-2zM206 700h2v2h-2zM206 697h2v2h-1v-1h-1zM207 693h1v2h-2v-1h1zM206 690h2v2h-2zM227 700h2v2h-2zM227 697h2v1h-1v1h-1zM227 693h2v2h-2zM227 690h2v2h-2zM230 700h2v2h-2zM230 697h2v2h-1v-1h-1zM238 700h2v2h-2zM238 697h2v2h-1v-1h-1zM239 693h1v2h-2v-1h1zM238 690h2v2h-2zM243 700h2v2h-2zM243 697h2v1h-1v1h-1zM243 693h2v2h-2zM254 700h2v2h-2zM254 697h2v2h-1v-1h-1zM255 693h1v2h-2v-1h1zM254 690h2v2h-2zM267 700h2v2h-2zM267 697h2v1h-1v1h-1zM302 700h2v2h-2zM302 697h2v2h-1v-1h-1zM303 693h1v2h-2v-1h1zM302 690h2v2h-2zM307 700h2v2h-2zM307 697h2v1h-1v1h-1zM307 693h2v2h-2zM307 690h2v2h-2zM315 700h2v2h-2zM315 697h2v1h-1v1h-1zM315 693h2v2h-2zM315 690h2v2h-2zM318 700h2v2h-2zM318 697h2v2h-1v-1h-1zM319 693h1v2h-2v-1h1zM318 690h2v2h-2zM379 700h2v2h-2zM379 697h2v1h-1v1h-1zM379 693h2v2h-2zM379 690h2v2h-2zM382 700h2v2h-2zM382 697h2v2h-1v-1h-1zM383 693h1v2h-2v-1h1zM382 690h2v2h-2zM390 700h2v2h-2zM390 697h2v2h-1v-1h-1zM391 693h1v2h-2v-1h1zM390 690h2v2h-2zM395 700h2v2h-2zM395 697h2v1h-1v1h-1zM395 693h2v2h-2zM395 690h2v2h-2zM398 700h2v2h-2zM398 697h2v2h-1v-1h-1zM454 700h2v2h-2zM454 697h2v2h-1v-1h-1zM455 693h1v2h-2v-1h1zM454 690h2v2h-2zM459 700h2v2h-2zM459 697h2v1h-1v1h-1zM459 693h2v2h-2zM459 690h2v2h-2zM467 700h2v2h-2zM467 697h2v1h-1v1h-1zM467 693h2v2h-2zM467 690h2v2h-2zM470 700h2v2h-2zM470 697h2v2h-1v-1h-1zM471 693h1v2h-2v-1h1zM470 690h2v2h-2zM475 700h2v2h-2zM531 700h2v2h-2zM531 697h2v1h-1v1h-1zM531 693h2v2h-2zM531 690h2v2h-2zM534 700h2v2h-2zM534 697h2v2h-1v-1h-1zM535 693h1v2h-2v-1h1zM534 690h2v2h-2zM542 700h2v2h-2zM542 697h2v2h-1v-1h-1zM543 693h1v2h-2v-1h1zM542 690h2v2h-2zM547 700h2v2h-2zM547 697h2v1h-1v1h-1zM547 693h2v2h-2zM547 690h2v2h-2zM550 700h2v2h-2zM550 697h2v2h-1v-1h-1zM551 693h1v2h-2v-1h1zM550 690h2v2h-2z"/>
<path fill="#7a6ed0" d="M75 684h2v2h-2zM75 681h2v1h-1v1h-1zM75 677h2v2h-2zM75 674h2v2h-2zM86 684h2v2h-2zM86 681h2v2h-1v-1h-1zM87 677h1v2h-2v-1h1zM86 674h2v2h-2zM150 684h2v2h-2zM150 681h2v2h-1v-1h-1zM151 677h1v2h-2v-1h1zM150 674h2v2h-2zM163 684h2v2h-2zM163 681h2v1h-1v1h-1zM163 677h2v2h-2zM163 674h2v2h-2zM166 684h2v2h-2zM166 681h2v2h-1v-1h-1zM206 684h2v2h-2zM227 684h2v2h-2zM227 681h2v1h-1v1h-1zM227 677h2v2h-2zM227 674h2v2h-2zM238 684h2v2h-2zM238 681h2v2h-1v-1h-1zM239 677h1v2h-2v-1h1zM238 674h2v2h-2zM254 684h2v2h-2zM254 681h2v2h-1v-1h-1zM302 684h2v2h-2zM302 681h2v2h-1v-1h-1zM303 677h1v2h-2v-1h1zM302 674h2v2h-2zM315 684h2v2h-2zM315 681h2v1h-1v1h-1zM315 677h2v2h-2zM315 674h2v2h-2zM318 684h2v2h-2zM318 681h2v2h-1v-1h-1zM319 677h1v2h-2v-1h1zM318 674h2v2h-2zM379 684h2v2h-2zM379 681h2v1h-1v1h-1zM379 677h2v2h-2zM379 674h2v2h-2zM390 684h2v2h-2zM390 681h2v2h-1v-1h-1zM391 677h1v2h-2v-1h1zM390 674h2v2h-2zM395 684h2v2h-2zM395 681h2v1h-1v1h-1zM454 684h2v2h-2zM454 681h2v2h-1v-1h-1zM455 677h1v2h-2v-1h1zM454 674h2v2h-2zM459 684h2v2h-2zM459 681h2v1h-1v1h-1zM459 677h2v2h-2zM459 674h2v2h-2zM467 684h2v2h-2zM467 681h2v1h-1v1h-1zM467 677h2v2h-2zM467 674h2v2h-2zM470 684h2v2h-2zM470 681h2v2h-1v-1h-1zM471 677h1v2h-2v-1h1zM470 674h2v2h-2zM531 684h2v2h-2zM531 681h2v1h-1v1h-1zM531 677h2v2h-2zM531 674h2v2h-2zM534 684h2v2h-2zM534 681h2v2h-1v-1h-1zM535 677h1v2h-2v-1h1zM534 674h2v2h-2zM542 684h2v2h-2zM542 681h2v2h-1v-1h-1zM543 677h1v2h-2v-1h1zM542 674h2v2h-2zM547 684h2v2h-2zM547 681h2v1h-1v1h-1zM547 677h2v2h-2zM547 674h2v2h-2zM550 684h2v2h-2zM550 681h2v2h-1v-1h-1z"/>
<path fill="#968ce0" d="M75 668h2v2h-2zM75 665h2v1h-1v1h-1zM75 661h2v2h-2zM75 658h2v2h-2zM86 668h2v2h-2zM86 665h2v2h-1v-1h-1zM87 661h1v2h-2v-1h1zM86 658h2v2h-2zM150 668h2v2h-2zM150 665h2v2h-1v-1h-1zM151 661h1v2h-2v-1h1zM150 658h2v2h-2zM163 668h2v2h-2zM163 665h2v1h-1v1h-1zM163 661h2v2h-2zM163 658h2v2h-2zM227 668h2v2h-2zM227 665h2v1h-1v1h-1zM227 661h2v2h-2zM227 658h2v2h-2zM238 668h2v2h-2zM238 665h2v2h-1v-1h-1zM239 661h1v2h-2v-1h1zM238 658h2v2h-2zM302 668h2v2h-2zM302 665h2v2h-1v-1h-1zM303 661h1v2h-2v-1h1zM302 658h2v2h-2zM315 668h2v2h-2zM315 665h2v1h-1v1h-1zM315 661h2v2h-2zM315 658h2v2h-2zM318 668h2v2h-2zM318 665h2v2h-1v-1h-1zM319 661h1v2h-2v-1h1zM318 658h2v2h-2zM379 668h2v2h-2zM379 665h2v1h-1v1h-1zM379 661h2v2h-2zM379 658h2v2h-2zM390 668h2v2h-2zM390 665h2v2h-1v-1h-1zM391 661h1v2h-2v-1h1zM390 658h2v2h-2zM454 668h2v2h-2zM454 665h2v2h-1v-1h-1zM455 661h1v2h-2v-1h1zM454 658h2v2h-2zM459 668h2v2h-2zM459 665h2v1h-1v1h-1zM459 661h2v2h-2zM467 668h2v2h-2zM467 665h2v1h-1v1h-1zM467 661h2v2h-2zM467 658h2v2h-2zM470 668h2v2h-2zM470 665h2v2h-1v-1h-1zM471 661h1v2h-2v-1h1zM470 658h2v2h-2zM531 668h2v2h-2zM531 665h2v1h-1v1h-1zM531 661h2v2h-2zM531 658h2v2h-2zM534 668h2v2h-2zM534 665h2v2h-1v-1h-1zM535 661h1v2h-2v-1h1zM534 658h2v2h-2zM542 668h2v2h-2zM542 665h2v2h-1v-1h-1zM543 661h1v2h-2v-1h1zM542 658h2v2h-2zM547 668h2v2h-2zM547 665h2v1h-1v1h-1zM547 661h2v2h-2zM547 658h2v2h-2z"/>
<path fill="#b0a8ee" d="M75 652h2v2h-2zM75 649h2v1h-1v1h-1zM75 645h2v2h-2zM75 642h2v2h-2zM86 652h2v2h-2zM86 649h2v2h-1v-1h-1zM87 645h1v2h-2v-1h1zM86 642h2v2h-2zM150 652h2v2h-2zM150 649h2v2h-1v-1h-1zM151 645h1v2h-2v-1h1zM150 642h2v2h-2zM163 652h2v2h-2zM163 649h2v1h-1v1h-1zM163 645h2v2h-2zM163 642h2v2h-2zM227 652h2v2h-2zM227 649h2v1h-1v1h-1zM227 645h2v2h-2zM227 642h2v2h-2zM238 652h2v2h-2zM238 649h2v2h-1v-1h-1zM239 645h1v2h-2v-1h1zM238 642h2v2h-2zM302 652h2v2h-2zM302 649h2v2h-1v-1h-1zM303 645h1v2h-2v-1h1zM302 642h2v2h-2zM315 652h2v2h-2zM315 649h2v1h-1v1h-1zM315 645h2v2h-2zM315 642h2v2h-2zM318 652h2v2h-2zM379 652h2v2h-2zM379 649h2v1h-1v1h-1zM379 645h2v2h-2zM379 642h2v2h-2zM390 652h2v2h-2zM390 649h2v2h-1v-1h-1zM391 645h1v2h-2v-1h1zM390 642h2v2h-2zM454 652h2v2h-2zM454 649h2v2h-1v-1h-1zM455 645h1v2h-2v-1h1zM454 642h2v2h-2zM467 652h2v2h-2zM467 649h2v1h-1v1h-1zM467 645h2v2h-2zM467 642h2v2h-2zM470 652h2v2h-2zM470 649h2v2h-1v-1h-1zM471 645h1v2h-2v-1h1zM470 642h2v2h-2zM531 652h2v2h-2zM531 649h2v1h-1v1h-1zM531 645h2v2h-2zM531 642h2v2h-2zM534 652h2v2h-2zM542 652h2v2h-2zM542 649h2v2h-1v-1h-1zM543 645h1v2h-2v-1h1zM542 642h2v2h-2zM547 652h2v2h-2zM547 649h2v1h-1v1h-1zM547 645h2v2h-2zM547 642h2v2h-2z"/>
<path fill="#c8c0f8" d="M75 636h2v2h-2zM75 633h2v1h-1v1h-1zM75 629h2v2h-2zM75 626h2v2h-2zM86 636h2v2h-2zM86 633h2v2h-1v-1h-1zM87 629h1v2h-2v-1h1zM86 626h2v2h-2zM150 636h2v2h-2zM150 633h2v2h-1v-1h-1zM151 629h1v2h-2v-1h1zM150 626h2v2h-2zM163 636h2v2h-2zM163 633h2v1h-1v1h-1zM163 629h2v2h-2zM163 626h2v2h-2zM227 636h2v2h-2zM227 633h2v1h-1v1h-1zM227 629h2v2h-2zM227 626h2v2h-2zM238 636h2v2h-2zM238 633h2v2h-1v-1h-1zM239 629h1v2h-2v-1h1zM238 626h2v2h-2zM302 636h2v2h-2zM302 633h2v2h-1v-1h-1zM303 629h1v2h-2v-1h1zM302 626h2v2h-2zM315 636h2v2h-2zM315 633h2v1h-1v1h-1zM315 629h2v2h-2zM315 626h2v2h-2zM379 636h2v2h-2zM379 633h2v1h-1v1h-1zM379 629h2v2h-2zM379 626h2v2h-2zM390 636h2v2h-2zM390 633h2v2h-1v-1h-1zM391 629h1v2h-2v-1h1zM390 626h2v2h-2zM454 636h2v2h-2zM454 633h2v2h-1v-1h-1zM455 629h1v2h-2v-1h1zM454 626h2v2h-2zM467 636h2v2h-2zM467 633h2v1h-1v1h-1zM467 629h2v2h-2zM467 626h2v2h-2zM470 636h2v2h-2zM470 633h2v2h-1v-1h-1zM471 629h1v2h-2v-1h1zM470 626h2v2h-2zM531 636h2v2h-2zM531 633h2v1h-1v1h-1zM531 629h2v2h-2zM531 626h2v2h-2zM542 636h2v2h-2zM542 633h2v2h-1v-1h-1zM543 629h1v2h-2v-1h1zM542 626h2v2h-2zM547 636h2v2h-2zM547 633h2v1h-1v1h-1zM547 629h2v2h-2zM547 626h2v2h-2z"/>
<path fill="#80248e" d="M19 738h2v2h-2zM19 741h2v2h-2zM19 745h2v1h-1v1h-1zM19 748h2v2h-2zM22 738h2v2h-2zM23 741h1v2h-2v-1h1zM22 745h2v2h-1v-1h-1zM22 748h2v2h-2zM27 738h2v2h-2zM27 741h2v2h-2zM27 745h2v1h-1v1h-1zM27 748h2v2h-2zM30 738h2v2h-2zM31 741h1v2h-2v-1h1zM30 745h2v2h-1v-1h-1zM30 748h2v2h-2zM35 738h2v2h-2zM35 741h2v2h-2zM35 745h2v1h-1v1h-1zM35 748h2v2h-2zM38 738h2v2h-2zM39 741h1v2h-2v-1h1zM38 745h2v2h-1v-1h-1zM38 748h2v2h-2zM43 738h2v2h-2zM43 741h2v2h-2zM43 745h2v1h-1v1h-1zM43 748h2v2h-2zM46 738h2v2h-2zM47 741h1v2h-2v-1h1zM46 745h2v2h-1v-1h-1zM46 748h2v2h-2zM51 738h2v2h-2zM51 741h2v2h-2zM51 745h2v1h-1v1h-1zM51 748h2v2h-2zM54 738h2v2h-2zM55 741h1v2h-2v-1h1zM54 745h2v2h-1v-1h-1zM54 748h2v2h-2zM59 738h2v2h-2zM59 741h2v2h-2zM59 745h2v1h-1v1h-1zM59 748h2v2h-2zM62 738h2v2h-2zM63 741h1v2h-2v-1h1zM62 745h2v2h-1v-1h-1zM62 748h2v2h-2zM67 738h2v2h-2zM67 741h2v2h-2zM67 745h2v1h-1v1h-1zM67 748h2v2h-2zM70 738h2v2h-2zM71 741h1v2h-2v-1h1zM70 745h2v2h-1v-1h-1zM70 748h2v2h-2zM75 738h2v2h-2zM75 741h2v2h-2zM75 745h2v1h-1v1h-1zM75 748h2v2h-2zM78 738h2v2h-2zM79 741h1v2h-2v-1h1zM78 745h2v2h-1v-1h-1zM78 748h2v2h-2zM83 738h2v2h-2zM83 741h2v2h-2zM83 745h2v1h-1v1h-1zM83 748h2v2h-2zM86 738h2v2h-2zM87 741h1v2h-2v-1h1zM86 745h2v2h-1v-1h-1zM86 748h2v2h-2zM91 738h2v2h-2zM91 741h2v2h-2zM91 745h2v1h-1v1h-1zM91 748h2v2h-2zM94 738h2v2h-2zM95 741h1v2h-2v-1h1zM94 745h2v2h-1v-1h-1zM94 748h2v2h-2zM99 738h2v2h-2zM99 741h2v2h-2zM99 745h2v1h-1v1h-1zM99 748h2v2h-2zM102 738h2v2h-2zM103 741h1v2h-2v-1h1zM102 745h2v2h-1v-1h-1zM102 748h2v2h-2zM107 738h2v2h-2zM107 741h2v2h-2zM107 745h2v1h-1v1h-1zM107 748h2v2h-2zM110 738h2v2h-2zM111 741h1v2h-2v-1h1zM110 745h2v2h-1v-1h-1zM110 748h2v2h-2zM115 738h2v2h-2zM115 741h2v2h-2zM115 745h2v1h-1v1h-1zM115 748h2v2h-2zM118 738h2v2h-2zM119 741h1v2h-2v-1h1zM118 745h2v2h-1v-1h-1zM118 748h2v2h-2zM123 738h2v2h-2zM123 741h2v2h-2zM123 745h2v1h-1v1h-1zM123 748h2v2h-2zM126 738h2v2h-2zM127 741h1v2h-2v-1h1zM126 745h2v2h-1v-1h-1zM126 748h2v2h-2zM131 738h2v2h-2zM131 741h2v2h-2zM131 745h2v1h-1v1h-1zM131 748h2v2h-2zM134 738h2v2h-2zM135 741h1v2h-2v-1h1zM134 745h2v2h-1v-1h-1zM134 748h2v2h-2zM139 738h2v2h-2zM139 741h2v2h-2zM139 745h2v1h-1v1h-1zM139 748h2v2h-2zM142 738h2v2h-2zM143 741h1v2h-2v-1h1zM142 745h2v2h-1v-1h-1zM142 748h2v2h-2zM147 738h2v2h-2zM147 741h2v2h-2zM147 745h2v1h-1v1h-1zM147 748h2v2h-2zM150 738h2v2h-2zM151 741h1v2h-2v-1h1zM150 745h2v2h-1v-1h-1zM150 748h2v2h-2zM155 738h2v2h-2zM155 741h2v2h-2zM155 745h2v1h-1v1h-1zM155 748h2v2h-2zM158 738h2v2h-2zM159 741h1v2h-2v-1h1zM158 745h2v2h-1v-1h-1zM158 748h2v2h-2zM163 738h2v2h-2zM163 741h2v2h-2zM163 745h2v1h-1v1h-1zM163 748h2v2h-2zM166 738h2v2h-2zM167 741h1v2h-2v-1h1zM166 745h2v2h-1v-1h-1zM166 748h2v2h-2zM171 738h2v2h-2zM171 741h2v2h-2zM171 745h2v1h-1v1h-1zM171 748h2v2h-2zM174 738h2v2h-2zM175 741h1v2h-2v-1h1zM174 745h2v2h-1v-1h-1zM174 748h2v2h-2zM179 738h2v2h-2zM179 741h2v2h-2zM179 745h2v1h-1v1h-1zM179 748h2v2h-2zM182 738h2v2h-2zM183 741h1v2h-2v-1h1zM182 745h2v2h-1v-1h-1zM182 748h2v2h-2zM187 738h2v2h-2zM187 741h2v2h-2zM187 745h2v1h-1v1h-1zM187 748h2v2h-2zM190 738h2v2h-2zM191 741h1v2h-2v-1h1zM190 745h2v2h-1v-1h-1zM190 748h2v2h-2zM195 738h2v2h-2zM195 741h2v2h-2zM195 745h2v1h-1v1h-1zM195 748h2v2h-2zM198 738h2v2h-2zM199 741h1v2h-2v-1h1zM198 745h2v2h-1v-1h-1zM198 748h2v2h-2zM203 738h2v2h-2zM203 741h2v2h-2zM203 745h2v1h-1v1h-1zM203 748h2v2h-2zM206 738h2v2h-2zM207 741h1v2h-2v-1h1zM206 745h2v2h-1v-1h-1zM206 748h2v2h-2zM211 738h2v2h-2zM211 741h2v2h-2zM211 745h2v1h-1v1h-1zM211 748h2v2h-2zM214 738h2v2h-2zM215 741h1v2h-2v-1h1zM214 745h2v2h-1v-1h-1zM214 748h2v2h-2zM219 738h2v2h-2zM219 741h2v2h-2zM219 745h2v1h-1v1h-1zM219 748h2v2h-2zM222 738h2v2h-2zM223 741h1v2h-2v-1h1zM222 745h2v2h-1v-1h-1zM222 748h2v2h-2zM227 738h2v2h-2zM227 741h2v2h-2zM227 745h2v1h-1v1h-1zM227 748h2v2h-2zM230 738h2v2h-2zM231 741h1v2h-2v-1h1zM230 745h2v2h-1v-1h-1zM230 748h2v2h-2zM235 738h2v2h-2zM235 741h2v2h-2zM235 745h2v1h-1v1h-1zM235 748h2v2h-2zM238 738h2v2h-2zM239 741h1v2h-2v-1h1zM238 745h2v2h-1v-1h-1zM238 748h2v2h-2zM243 738h2v2h-2zM243 741h2v2h-2zM243 745h2v1h-1v1h-1zM243 748h2v2h-2zM246 738h2v2h-2zM247 741h1v2h-2v-1h1zM246 745h2v2h-1v-1h-1zM246 748h2v2h-2zM251 738h2v2h-2zM251 741h2v2h-2zM251 745h2v1h-1v1h-1zM251 748h2v2h-2zM254 738h2v2h-2zM255 741h1v2h-2v-1h1zM254 745h2v2h-1v-1h-1zM254 748h2v2h-2zM259 738h2v2h-2zM259 741h2v2h-2zM259 745h2v1h-1v1h-1zM259 748h2v2h-2zM262 738h2v2h-2zM263 741h1v2h-2v-1h1zM262 745h2v2h-1v-1h-1zM262 748h2v2h-2zM267 738h2v2h-2zM267 741h2v2h-2zM267 745h2v1h-1v1h-1zM267 748h2v2h-2zM270 738h2v2h-2zM271 741h1v2h-2v-1h1zM270 745h2v2h-1v-1h-1zM270 748h2v2h-2zM275 738h2v2h-2zM275 741h2v2h-2zM275 745h2v1h-1v1h-1zM275 748h2v2h-2zM278 738h2v2h-2zM279 741h1v2h-2v-1h1zM278 745h2v2h-1v-1h-1zM278 748h2v2h-2zM283 738h2v2h-2zM283 741h2v2h-2zM283 745h2v1h-1v1h-1zM283 748h2v2h-2zM286 738h2v2h-2zM287 741h1v2h-2v-1h1zM286 745h2v2h-1v-1h-1zM286 748h2v2h-2zM291 738h2v2h-2zM291 741h2v2h-2zM291 745h2v1h-1v1h-1zM291 748h2v2h-2zM294 738h2v2h-2zM295 741h1v2h-2v-1h1zM294 745h2v2h-1v-1h-1zM294 748h2v2h-2zM299 738h2v2h-2zM299 741h2v2h-2zM299 745h2v1h-1v1h-1zM299 748h2v2h-2zM302 738h2v2h-2zM303 741h1v2h-2v-1h1zM302 745h2v2h-1v-1h-1zM302 748h2v2h-2zM307 738h2v2h-2zM307 741h2v2h-2zM307 745h2v1h-1v1h-1zM307 748h2v2h-2zM310 738h2v2h-2zM311 741h1v2h-2v-1h1zM310 745h2v2h-1v-1h-1zM310 748h2v2h-2zM315 738h2v2h-2zM315 741h2v2h-2zM315 745h2v1h-1v1h-1zM315 748h2v2h-2zM318 738h2v2h-2zM319 741h1v2h-2v-1h1zM318 745h2v2h-1v-1h-1zM318 748h2v2h-2zM323 738h2v2h-2zM323 741h2v2h-2zM323 745h2v1h-1v1h-1zM323 748h2v2h-2zM326 738h2v2h-2zM327 741h1v2h-2v-1h1zM326 745h2v2h-1v-1h-1zM326 748h2v2h-2zM331 738h2v2h-2zM331 741h2v2h-2zM331 745h2v1h-1v1h-1zM331 748h2v2h-2zM334 738h2v2h-2zM335 741h1v2h-2v-1h1zM334 745h2v2h-1v-1h-1zM334 748h2v2h-2zM339 738h2v2h-2zM339 741h2v2h-2zM339 745h2v1h-1v1h-1zM339 748h2v2h-2zM342 738h2v2h-2zM343 741h1v2h-2v-1h1zM342 745h2v2h-1v-1h-1zM342 748h2v2h-2zM347 738h2v2h-2zM347 741h2v2h-2zM347 745h2v1h-1v1h-1zM347 748h2v2h-2zM350 738h2v2h-2zM351 741h1v2h-2v-1h1zM350 745h2v2h-1v-1h-1zM350 748h2v2h-2zM355 738h2v2h-2zM355 741h2v2h-2zM355 745h2v1h-1v1h-1zM355 748h2v2h-2zM358 738h2v2h-2zM359 741h1v2h-2v-1h1zM358 745h2v2h-1v-1h-1zM358 748h2v2h-2zM363 738h2v2h-2zM363 741h2v2h-2zM363 745h2v1h-1v1h-1zM363 748h2v2h-2zM366 738h2v2h-2zM367 741h1v2h-2v-1h1zM366 745h2v2h-1v-1h-1zM366 748h2v2h-2zM371 738h2v2h-2zM371 741h2v2h-2zM371 745h2v1h-1v1h-1zM371 748h2v2h-2zM374 738h2v2h-2zM375 741h1v2h-2v-1h1zM374 745h2v2h-1v-1h-1zM374 748h2v2h-2zM379 738h2v2h-2zM379 741h2v2h-2zM379 745h2v1h-1v1h-1zM379 748h2v2h-2zM382 738h2v2h-2zM383 741h1v2h-2v-1h1zM382 745h2v2h-1v-1h-1zM382 748h2v2h-2zM387 738h2v2h-2zM387 741h2v2h-2zM387 745h2v1h-1v1h-1zM387 748h2v2h-2zM390 738h2v2h-2zM391 741h1v2h-2v-1h1zM390 745h2v2h-1v-1h-1zM390 748h2v2h-2zM395 738h2v2h-2zM395 741h2v2h-2zM395 745h2v1h-1v1h-1zM395 748h2v2h-2zM398 738h2v2h-2zM399 741h1v2h-2v-1h1zM398 745h2v2h-1v-1h-1zM398 748h2v2h-2zM403 738h2v2h-2zM403 741h2v2h-2zM403 745h2v1h-1v1h-1zM403 748h2v2h-2zM406 738h2v2h-2zM407 741h1v2h-2v-1h1zM406 745h2v2h-1v-1h-1zM406 748h2v2h-2zM411 738h2v2h-2zM411 741h2v2h-2zM411 745h2v1h-1v1h-1zM411 748h2v2h-2zM414 738h2v2h-2zM415 741h1v2h-2v-1h1zM414 745h2v2h-1v-1h-1zM414 748h2v2h-2zM419 738h2v2h-2zM419 741h2v2h-2zM419 745h2v1h-1v1h-1zM419 748h2v2h-2zM422 738h2v2h-2zM423 741h1v2h-2v-1h1zM422 745h2v2h-1v-1h-1zM422 748h2v2h-2zM427 738h2v2h-2zM427 741h2v2h-2zM427 745h2v1h-1v1h-1zM427 748h2v2h-2zM430 738h2v2h-2zM431 741h1v2h-2v-1h1zM430 745h2v2h-1v-1h-1zM430 748h2v2h-2zM435 738h2v2h-2zM435 741h2v2h-2zM435 745h2v1h-1v1h-1zM435 748h2v2h-2zM438 738h2v2h-2zM439 741h1v2h-2v-1h1zM438 745h2v2h-1v-1h-1zM438 748h2v2h-2zM443 738h2v2h-2zM443 741h2v2h-2zM443 745h2v1h-1v1h-1zM443 748h2v2h-2zM446 738h2v2h-2zM447 741h1v2h-2v-1h1zM446 745h2v2h-1v-1h-1zM446 748h2v2h-2zM451 738h2v2h-2zM451 741h2v2h-2zM451 745h2v1h-1v1h-1zM451 748h2v2h-2zM454 738h2v2h-2zM455 741h1v2h-2v-1h1zM454 745h2v2h-1v-1h-1zM454 748h2v2h-2zM459 738h2v2h-2zM459 741h2v2h-2zM459 745h2v1h-1v1h-1zM459 748h2v2h-2zM462 738h2v2h-2zM463 741h1v2h-2v-1h1zM462 745h2v2h-1v-1h-1zM462 748h2v2h-2zM467 738h2v2h-2zM467 741h2v2h-2zM467 745h2v1h-1v1h-1zM467 748h2v2h-2zM470 738h2v2h-2zM471 741h1v2h-2v-1h1zM470 745h2v2h-1v-1h-1zM470 748h2v2h-2zM475 738h2v2h-2zM475 741h2v2h-2zM475 745h2v1h-1v1h-1zM475 748h2v2h-2zM478 738h2v2h-2zM479 741h1v2h-2v-1h1zM478 745h2v2h-1v-1h-1zM478 748h2v2h-2zM483 738h2v2h-2zM483 741h2v2h-2zM483 745h2v1h-1v1h-1zM483 748h2v2h-2zM486 738h2v2h-2zM487 741h1v2h-2v-1h1zM486 745h2v2h-1v-1h-1zM486 748h2v2h-2zM491 738h2v2h-2zM491 741h2v2h-2zM491 745h2v1h-1v1h-1zM491 748h2v2h-2zM494 738h2v2h-2zM495 741h1v2h-2v-1h1zM494 745h2v2h-1v-1h-1zM494 748h2v2h-2zM499 738h2v2h-2zM499 741h2v2h-2zM499 745h2v1h-1v1h-1zM499 748h2v2h-2zM502 738h2v2h-2zM503 741h1v2h-2v-1h1zM502 745h2v2h-1v-1h-1zM502 748h2v2h-2zM507 738h2v2h-2zM507 741h2v2h-2zM507 745h2v1h-1v1h-1zM507 748h2v2h-2zM510 738h2v2h-2zM511 741h1v2h-2v-1h1zM510 745h2v2h-1v-1h-1zM510 748h2v2h-2zM515 738h2v2h-2zM515 741h2v2h-2zM515 745h2v1h-1v1h-1zM515 748h2v2h-2zM518 738h2v2h-2zM519 741h1v2h-2v-1h1zM518 745h2v2h-1v-1h-1zM518 748h2v2h-2zM523 738h2v2h-2zM523 741h2v2h-2zM523 745h2v1h-1v1h-1zM523 748h2v2h-2zM526 738h2v2h-2zM527 741h1v2h-2v-1h1zM526 745h2v2h-1v-1h-1zM526 748h2v2h-2zM531 738h2v2h-2zM531 741h2v2h-2zM531 745h2v1h-1v1h-1zM531 748h2v2h-2zM534 738h2v2h-2zM535 741h1v2h-2v-1h1zM534 745h2v2h-1v-1h-1zM534 748h2v2h-2zM539 738h2v2h-2zM539 741h2v2h-2zM539 745h2v1h-1v1h-1zM539 748h2v2h-2zM542 738h2v2h-2zM543 741h1v2h-2v-1h1zM542 745h2v2h-1v-1h-1zM542 748h2v2h-2zM547 738h2v2h-2zM547 741h2v2h-2zM547 745h2v1h-1v1h-1zM547 748h2v2h-2zM550 738h2v2h-2zM551 741h1v2h-2v-1h1zM550 745h2v2h-1v-1h-1zM550 748h2v2h-2zM555 738h2v2h-2zM555 741h2v2h-2zM555 745h2v1h-1v1h-1zM555 748h2v2h-2zM558 738h2v2h-2zM559 741h1v2h-2v-1h1zM558 745h2v2h-1v-1h-1zM558 748h2v2h-2z"/>
<path fill="#8c3c9c" d="M19 754h2v2h-2zM19 757h2v2h-2zM19 761h2v1h-1v1h-1zM19 764h2v2h-2zM22 754h2v2h-2zM23 757h1v2h-2v-1h1zM22 761h2v2h-1v-1h-1zM22 764h2v2h-2zM27 754h2v2h-2zM27 757h2v2h-2zM27 761h2v1h-1v1h-1zM27 764h2v2h-2zM30 754h2v2h-2zM31 757h1v2h-2v-1h1zM30 761h2v2h-1v-1h-1zM30 764h2v2h-2zM35 754h2v2h-2zM35 757h2v2h-2zM35 761h2v1h-1v1h-1zM35 764h2v2h-2zM38 754h2v2h-2zM39 757h1v2h-2v-1h1zM38 761h2v2h-1v-1h-1zM38 764h2v2h-2zM43 754h2v2h-2zM43 757h2v2h-2zM43 761h2v1h-1v1h-1zM43 764h2v2h-2zM46 754h2v2h-2zM47 757h1v2h-2v-1h1zM46 761h2v2h-1v-1h-1zM46 764h2v2h-2zM51 754h2v2h-2zM51 757h2v2h-2zM51 761h2v1h-1v1h-1zM51 764h2v2h-2zM54 754h2v2h-2zM55 757h1v2h-2v-1h1zM54 761h2v2h-1v-1h-1zM54 764h2v2h-2zM59 754h2v2h-2zM59 757h2v2h-2zM59 761h2v1h-1v1h-1zM59 764h2v2h-2zM62 754h2v2h-2zM63 757h1v2h-2v-1h1zM62 761h2v2h-1v-1h-1zM62 764h2v2h-2zM67 754h2v2h-2zM67 757h2v2h-2zM67 761h2v1h-1v1h-1zM67 764h2v2h-2zM70 754h2v2h-2zM71 757h1v2h-2v-1h1zM70 761h2v2h-1v-1h-1zM70 764h2v2h-2zM75 754h2v2h-2zM75 757h2v2h-2zM75 761h2v1h-1v1h-1zM75 764h2v2h-2zM78 754h2v2h-2zM79 757h1v2h-2v-1h1zM78 761h2v2h-1v-1h-1zM78 764h2v2h-2zM83 754h2v2h-2zM83 757h2v2h-2zM83 761h2v1h-1v1h-1zM83 764h2v2h-2zM86 754h2v2h-2zM87 757h1v2h-2v-1h1zM86 761h2v2h-1v-1h-1zM86 764h2v2h-2zM91 754h2v2h-2zM91 757h2v2h-2zM91 761h2v1h-1v1h-1zM91 764h2v2h-2zM94 754h2v2h-2zM95 757h1v2h-2v-1h1zM94 761h2v2h-1v-1h-1zM94 764h2v2h-2zM99 754h2v2h-2zM99 757h2v2h-2zM99 761h2v1h-1v1h-1zM99 764h2v2h-2zM102 754h2v2h-2zM103 757h1v2h-2v-1h1zM102 761h2v2h-1v-1h-1zM102 764h2v2h-2zM107 754h2v2h-2zM107 757h2v2h-2zM107 761h2v1h-1v1h-1zM107 764h2v2h-2zM110 754h2v2h-2zM111 757h1v2h-2v-1h1zM110 761h2v2h-1v-1h-1zM110 764h2v2h-2zM115 754h2v2h-2zM115 757h2v2h-2zM115 761h2v1h-1v1h-1zM115 764h2v2h-2zM118 754h2v2h-2zM119 757h1v2h-2v-1h1zM118 761h2v2h-1v-1h-1zM118 764h2v2h-2zM123 754h2v2h-2zM123 757h2v2h-2zM123 761h2v1h-1v1h-1zM123 764h2v2h-2zM126 754h2v2h-2zM127 757h1v2h-2v-1h1zM126 761h2v2h-1v-1h-1zM126 764h2v2h-2zM131 754h2v2h-2zM131 757h2v2h-2zM131 761h2v1h-1v1h-1zM131 764h2v2h-2zM134 754h2v2h-2zM135 757h1v2h-2v-1h1zM134 761h2v2h-1v-1h-1zM134 764h2v2h-2zM139 754h2v2h-2zM139 757h2v2h-2zM139 761h2v1h-1v1h-1zM139 764h2v2h-2zM142 754h2v2h-2zM143 757h1v2h-2v-1h1zM142 761h2v2h-1v-1h-1zM142 764h2v2h-2zM147 754h2v2h-2zM147 757h2v2h-2zM147 761h2v1h-1v1h-1zM147 764h2v2h-2zM150 754h2v2h-2zM151 757h1v2h-2v-1h1zM150 761h2v2h-1v-1h-1zM150 764h2v2h-2zM155 754h2v2h-2zM155 757h2v2h-2zM155 761h2v1h-1v1h-1zM155 764h2v2h-2zM158 754h2v2h-2zM159 757h1v2h-2v-1h1zM158 761h2v2h-1v-1h-1zM158 764h2v2h-2zM163 754h2v2h-2zM163 757h2v2h-2zM163 761h2v1h-1v1h-1zM163 764h2v2h-2zM166 754h2v2h-2zM167 757h1v2h-2v-1h1zM166 761h2v2h-1v-1h-1zM166 764h2v2h-2zM171 754h2v2h-2zM171 757h2v2h-2zM171 761h2v1h-1v1h-1zM171 764h2v2h-2zM174 754h2v2h-2zM175 757h1v2h-2v-1h1zM174 761h2v2h-1v-1h-1zM174 764h2v2h-2zM179 754h2v2h-2zM179 757h2v2h-2zM179 761h2v1h-1v1h-1zM179 764h2v2h-2zM182 754h2v2h-2zM183 757h1v2h-2v-1h1zM182 761h2v2h-1v-1h-1zM182 764h2v2h-2zM187 754h2v2h-2zM187 757h2v2h-2zM187 761h2v1h-1v1h-1zM187 764h2v2h-2zM190 754h2v2h-2zM191 757h1v2h-2v-1h1zM190 761h2v2h-1v-1h-1zM190 764h2v2h-2zM195 754h2v2h-2zM195 757h2v2h-2zM195 761h2v1h-1v1h-1zM195 764h2v2h-2zM198 754h2v2h-2zM199 757h1v2h-2v-1h1zM198 761h2v2h-1v-1h-1zM198 764h2v2h-2zM203 754h2v2h-2zM203 757h2v2h-2zM203 761h2v1h-1v1h-1zM203 764h2v2h-2zM206 754h2v2h-2zM207 757h1v2h-2v-1h1zM206 761h2v2h-1v-1h-1zM206 764h2v2h-2zM211 754h2v2h-2zM211 757h2v2h-2zM211 761h2v1h-1v1h-1zM211 764h2v2h-2zM214 754h2v2h-2zM215 757h1v2h-2v-1h1zM214 761h2v2h-1v-1h-1zM214 764h2v2h-2zM219 754h2v2h-2zM219 757h2v2h-2zM219 761h2v1h-1v1h-1zM219 764h2v2h-2zM222 754h2v2h-2zM223 757h1v2h-2v-1h1zM222 761h2v2h-1v-1h-1zM222 764h2v2h-2zM227 754h2v2h-2zM227 757h2v2h-2zM227 761h2v1h-1v1h-1zM227 764h2v2h-2zM230 754h2v2h-2zM231 757h1v2h-2v-1h1zM230 761h2v2h-1v-1h-1zM230 764h2v2h-2zM235 754h2v2h-2zM235 757h2v2h-2zM235 761h2v1h-1v1h-1zM235 764h2v2h-2zM238 754h2v2h-2zM239 757h1v2h-2v-1h1zM238 761h2v2h-1v-1h-1zM238 764h2v2h-2zM243 754h2v2h-2zM243 757h2v2h-2zM243 761h2v1h-1v1h-1zM243 764h2v2h-2zM246 754h2v2h-2zM247 757h1v2h-2v-1h1zM246 761h2v2h-1v-1h-1zM246 764h2v2h-2zM251 754h2v2h-2zM251 757h2v2h-2zM251 761h2v1h-1v1h-1zM251 764h2v2h-2zM254 754h2v2h-2zM255 757h1v2h-2v-1h1zM254 761h2v2h-1v-1h-1zM254 764h2v2h-2zM259 754h2v2h-2zM259 757h2v2h-2zM259 761h2v1h-1v1h-1zM259 764h2v2h-2zM262 754h2v2h-2zM263 757h1v2h-2v-1h1zM262 761h2v2h-1v-1h-1zM262 764h2v2h-2zM267 754h2v2h-2zM267 757h2v2h-2zM267 761h2v1h-1v1h-1zM267 764h2v2h-2zM270 754h2v2h-2zM271 757h1v2h-2v-1h1zM270 761h2v2h-1v-1h-1zM270 764h2v2h-2zM275 754h2v2h-2zM275 757h2v2h-2zM275 761h2v1h-1v1h-1zM275 764h2v2h-2zM278 754h2v2h-2zM279 757h1v2h-2v-1h1zM278 761h2v2h-1v-1h-1zM278 764h2v2h-2zM283 754h2v2h-2zM283 757h2v2h-2zM283 761h2v1h-1v1h-1zM283 764h2v2h-2zM286 754h2v2h-2zM287 757h1v2h-2v-1h1zM286 761h2v2h-1v-1h-1zM286 764h2v2h-2zM291 754h2v2h-2zM291 757h2v2h-2zM291 761h2v1h-1v1h-1zM291 764h2v2h-2zM294 754h2v2h-2zM295 757h1v2h-2v-1h1zM294 761h2v2h-1v-1h-1zM294 764h2v2h-2zM299 754h2v2h-2zM299 757h2v2h-2zM299 761h2v1h-1v1h-1zM299 764h2v2h-2zM302 754h2v2h-2zM303 757h1v2h-2v-1h1zM302 761h2v2h-1v-1h-1zM302 764h2v2h-2zM307 754h2v2h-2zM307 757h2v2h-2zM307 761h2v1h-1v1h-1zM307 764h2v2h-2zM310 754h2v2h-2zM311 757h1v2h-2v-1h1zM310 761h2v2h-1v-1h-1zM310 764h2v2h-2zM315 754h2v2h-2zM315 757h2v2h-2zM315 761h2v1h-1v1h-1zM315 764h2v2h-2zM318 754h2v2h-2zM319 757h1v2h-2v-1h1zM318 761h2v2h-1v-1h-1zM318 764h2v2h-2zM323 754h2v2h-2zM323 757h2v2h-2zM323 761h2v1h-1v1h-1zM323 764h2v2h-2zM326 754h2v2h-2zM327 757h1v2h-2v-1h1zM326 761h2v2h-1v-1h-1zM326 764h2v2h-2zM331 754h2v2h-2zM331 757h2v2h-2zM331 761h2v1h-1v1h-1zM331 764h2v2h-2zM334 754h2v2h-2zM335 757h1v2h-2v-1h1zM334 761h2v2h-1v-1h-1zM334 764h2v2h-2zM339 754h2v2h-2zM339 757h2v2h-2zM339 761h2v1h-1v1h-1zM339 764h2v2h-2zM342 754h2v2h-2zM343 757h1v2h-2v-1h1zM342 761h2v2h-1v-1h-1zM342 764h2v2h-2zM347 754h2v2h-2zM347 757h2v2h-2zM347 761h2v1h-1v1h-1zM347 764h2v2h-2zM350 754h2v2h-2zM351 757h1v2h-2v-1h1zM350 761h2v2h-1v-1h-1zM350 764h2v2h-2zM355 754h2v2h-2zM355 757h2v2h-2zM355 761h2v1h-1v1h-1zM355 764h2v2h-2zM358 754h2v2h-2zM359 757h1v2h-2v-1h1zM358 761h2v2h-1v-1h-1zM358 764h2v2h-2zM363 754h2v2h-2zM363 757h2v2h-2zM363 761h2v1h-1v1h-1zM363 764h2v2h-2zM366 754h2v2h-2zM367 757h1v2h-2v-1h1zM366 761h2v2h-1v-1h-1zM366 764h2v2h-2zM371 754h2v2h-2zM371 757h2v2h-2zM371 761h2v1h-1v1h-1zM371 764h2v2h-2zM374 754h2v2h-2zM375 757h1v2h-2v-1h1zM374 761h2v2h-1v-1h-1zM374 764h2v2h-2zM379 754h2v2h-2zM379 757h2v2h-2zM379 761h2v1h-1v1h-1zM379 764h2v2h-2zM382 754h2v2h-2zM383 757h1v2h-2v-1h1zM382 761h2v2h-1v-1h-1zM382 764h2v2h-2zM387 754h2v2h-2zM387 757h2v2h-2zM387 761h2v1h-1v1h-1zM387 764h2v2h-2zM390 754h2v2h-2zM391 757h1v2h-2v-1h1zM390 761h2v2h-1v-1h-1zM390 764h2v2h-2zM395 754h2v2h-2zM395 757h2v2h-2zM395 761h2v1h-1v1h-1zM395 764h2v2h-2zM398 754h2v2h-2zM399 757h1v2h-2v-1h1zM398 761h2v2h-1v-1h-1zM398 764h2v2h-2zM403 754h2v2h-2zM403 757h2v2h-2zM403 761h2v1h-1v1h-1zM403 764h2v2h-2zM406 754h2v2h-2zM407 757h1v2h-2v-1h1zM406 761h2v2h-1v-1h-1zM406 764h2v2h-2zM411 754h2v2h-2zM411 757h2v2h-2zM411 761h2v1h-1v1h-1zM411 764h2v2h-2zM414 754h2v2h-2zM415 757h1v2h-2v-1h1zM414 761h2v2h-1v-1h-1zM414 764h2v2h-2zM419 754h2v2h-2zM419 757h2v2h-2zM419 761h2v1h-1v1h-1zM419 764h2v2h-2zM422 754h2v2h-2zM423 757h1v2h-2v-1h1zM422 761h2v2h-1v-1h-1zM422 764h2v2h-2zM427 754h2v2h-2zM427 757h2v2h-2zM427 761h2v1h-1v1h-1zM427 764h2v2h-2zM430 754h2v2h-2zM431 757h1v2h-2v-1h1zM430 761h2v2h-1v-1h-1zM430 764h2v2h-2zM435 754h2v2h-2zM435 757h2v2h-2zM435 761h2v1h-1v1h-1zM435 764h2v2h-2zM438 754h2v2h-2zM439 757h1v2h-2v-1h1zM438 761h2v2h-1v-1h-1zM438 764h2v2h-2zM443 754h2v2h-2zM443 757h2v2h-2zM443 761h2v1h-1v1h-1zM443 764h2v2h-2zM446 754h2v2h-2zM447 757h1v2h-2v-1h1zM446 761h2v2h-1v-1h-1zM446 764h2v2h-2zM451 754h2v2h-2zM451 757h2v2h-2zM451 761h2v1h-1v1h-1zM451 764h2v2h-2zM454 754h2v2h-2zM455 757h1v2h-2v-1h1zM454 761h2v2h-1v-1h-1zM454 764h2v2h-2zM459 754h2v2h-2zM459 757h2v2h-2zM459 761h2v1h-1v1h-1zM459 764h2v2h-2zM462 754h2v2h-2zM463 757h1v2h-2v-1h1zM462 761h2v2h-1v-1h-1zM462 764h2v2h-2zM467 754h2v2h-2zM467 757h2v2h-2zM467 761h2v1h-1v1h-1zM467 764h2v2h-2zM470 754h2v2h-2zM471 757h1v2h-2v-1h1zM470 761h2v2h-1v-1h-1zM470 764h2v2h-2zM475 754h2v2h-2zM475 757h2v2h-2zM475 761h2v1h-1v1h-1zM475 764h2v2h-2zM478 754h2v2h-2zM479 757h1v2h-2v-1h1zM478 761h2v2h-1v-1h-1zM478 764h2v2h-2zM483 754h2v2h-2zM483 757h2v2h-2zM483 761h2v1h-1v1h-1zM483 764h2v2h-2zM486 754h2v2h-2zM487 757h1v2h-2v-1h1zM486 761h2v2h-1v-1h-1zM486 764h2v2h-2zM491 754h2v2h-2zM491 757h2v2h-2zM491 761h2v1h-1v1h-1zM491 764h2v2h-2zM494 754h2v2h-2zM495 757h1v2h-2v-1h1zM494 761h2v2h-1v-1h-1zM494 764h2v2h-2zM499 754h2v2h-2zM499 757h2v2h-2zM499 761h2v1h-1v1h-1zM499 764h2v2h-2zM502 754h2v2h-2zM503 757h1v2h-2v-1h1zM502 761h2v2h-1v-1h-1zM502 764h2v2h-2zM507 754h2v2h-2zM507 757h2v2h-2zM507 761h2v1h-1v1h-1zM507 764h2v2h-2zM510 754h2v2h-2zM511 757h1v2h-2v-1h1zM510 761h2v2h-1v-1h-1zM510 764h2v2h-2zM515 754h2v2h-2zM515 757h2v2h-2zM515 761h2v1h-1v1h-1zM515 764h2v2h-2zM518 754h2v2h-2zM519 757h1v2h-2v-1h1zM518 761h2v2h-1v-1h-1zM518 764h2v2h-2zM523 754h2v2h-2zM523 757h2v2h-2zM523 761h2v1h-1v1h-1zM523 764h2v2h-2zM526 754h2v2h-2zM527 757h1v2h-2v-1h1zM526 761h2v2h-1v-1h-1zM526 764h2v2h-2zM531 754h2v2h-2zM531 757h2v2h-2zM531 761h2v1h-1v1h-1zM531 764h2v2h-2zM534 754h2v2h-2zM535 757h1v2h-2v-1h1zM534 761h2v2h-1v-1h-1zM534 764h2v2h-2zM539 754h2v2h-2zM539 757h2v2h-2zM539 761h2v1h-1v1h-1zM539 764h2v2h-2zM542 754h2v2h-2zM543 757h1v2h-2v-1h1zM542 761h2v2h-1v-1h-1zM542 764h2v2h-2zM547 754h2v2h-2zM547 757h2v2h-2zM547 761h2v1h-1v1h-1zM547 764h2v2h-2zM550 754h2v2h-2zM551 757h1v2h-2v-1h1zM550 761h2v2h-1v-1h-1zM550 764h2v2h-2zM555 754h2v2h-2zM555 757h2v2h-2zM555 761h2v1h-1v1h-1zM555 764h2v2h-2zM558 754h2v2h-2zM559 757h1v2h-2v-1h1zM558 761h2v2h-1v-1h-1zM558 764h2v2h-2z"/>
<path fill="#964ea6" d="M19 770h2v2h-2zM19 773h2v2h-2zM19 777h2v1h-1v1h-1zM19 780h2v2h-2zM22 770h2v2h-2zM23 773h1v2h-2v-1h1zM22 777h2v2h-1v-1h-1zM22 780h2v2h-2zM27 770h2v2h-2zM27 773h2v2h-2zM27 777h2v1h-1v1h-1zM27 780h2v2h-2zM30 770h2v2h-2zM31 773h1v2h-2v-1h1zM30 777h2v2h-1v-1h-1zM30 780h2v2h-2zM35 770h2v2h-2zM35 773h2v2h-2zM35 777h2v1h-1v1h-1zM35 780h2v2h-2zM38 770h2v2h-2zM39 773h1v2h-2v-1h1zM38 777h2v2h-1v-1h-1zM38 780h2v2h-2zM43 770h2v2h-2zM43 773h2v2h-2zM43 777h2v1h-1v1h-1zM43 780h2v2h-2zM46 770h2v2h-2zM47 773h1v2h-2v-1h1zM46 777h2v2h-1v-1h-1zM46 780h2v2h-2zM51 770h2v2h-2zM51 773h2v2h-2zM51 777h2v1h-1v1h-1zM51 780h2v2h-2zM54 770h2v2h-2zM55 773h1v2h-2v-1h1zM54 777h2v2h-1v-1h-1zM54 780h2v2h-2zM59 770h2v2h-2zM59 773h2v2h-2zM59 777h2v1h-1v1h-1zM59 780h2v2h-2zM62 770h2v2h-2zM63 773h1v2h-2v-1h1zM62 777h2v2h-1v-1h-1zM62 780h2v2h-2zM67 770h2v2h-2zM67 773h2v2h-2zM67 777h2v1h-1v1h-1zM67 780h2v2h-2zM70 770h2v2h-2zM71 773h1v2h-2v-1h1zM70 777h2v2h-1v-1h-1zM70 780h2v2h-2zM75 770h2v2h-2zM75 773h2v2h-2zM75 777h2v1h-1v1h-1zM75 780h2v2h-2zM78 770h2v2h-2zM79 773h1v2h-2v-1h1zM78 777h2v2h-1v-1h-1zM78 780h2v2h-2zM83 770h2v2h-2zM83 773h2v2h-2zM83 777h2v1h-1v1h-1zM83 780h2v2h-2zM86 770h2v2h-2zM87 773h1v2h-2v-1h1zM86 777h2v2h-1v-1h-1zM86 780h2v2h-2zM91 770h2v2h-2zM91 773h2v2h-2zM91 777h2v1h-1v1h-1zM91 780h2v2h-2zM94 770h2v2h-2zM95 773h1v2h-2v-1h1zM94 777h2v2h-1v-1h-1zM94 780h2v2h-2zM99 770h2v2h-2zM99 773h2v2h-2zM99 777h2v1h-1v1h-1zM99 780h2v2h-2zM102 770h2v2h-2zM103 773h1v2h-2v-1h1zM102 777h2v2h-1v-1h-1zM102 780h2v2h-2zM107 770h2v2h-2zM107 773h2v2h-2zM107 777h2v1h-1v1h-1zM107 780h2v2h-2zM110 770h2v2h-2zM111 773h1v2h-2v-1h1zM110 777h2v2h-1v-1h-1zM110 780h2v2h-2zM115 770h2v2h-2zM115 773h2v2h-2zM115 777h2v1h-1v1h-1zM115 780h2v2h-2zM118 770h2v2h-2zM119 773h1v2h-2v-1h1zM118 777h2v2h-1v-1h-1zM118 780h2v2h-2zM123 770h2v2h-2zM126 770h2v2h-2zM127 773h1v2h-2v-1h1zM131 770h2v2h-2zM134 770h2v2h-2zM135 773h1v2h-2v-1h1zM134 777h2v2h-1v-1h-1zM134 780h2v2h-2zM139 770h2v2h-2zM142 770h2v2h-2zM143 773h1v2h-2v-1h1zM147 770h2v2h-2zM147 773h2v2h-2zM150 770h2v2h-2zM151 773h1v2h-2v-1h1zM155 770h2v2h-2zM155 773h2v2h-2zM155 777h2v1h-1v1h-1zM155 780h2v2h-2zM158 770h2v2h-2zM159 773h1v2h-2v-1h1zM158 777h2v2h-1v-1h-1zM158 780h2v2h-2zM163 770h2v2h-2zM163 773h2v2h-2zM163 777h2v1h-1v1h-1zM163 780h2v2h-2zM166 770h2v2h-2zM167 773h1v2h-2v-1h1zM166 777h2v2h-1v-1h-1zM166 780h2v2h-2zM171 770h2v2h-2zM171 773h2v2h-2zM171 777h2v1h-1v1h-1zM171 780h2v2h-2zM174 770h2v2h-2zM175 773h1v2h-2v-1h1zM174 777h2v2h-1v-1h-1zM174 780h2v2h-2zM179 770h2v2h-2zM179 773h2v2h-2zM179 777h2v1h-1v1h-1zM179 780h2v2h-2zM182 770h2v2h-2zM183 773h1v2h-2v-1h1zM182 777h2v2h-1v-1h-1zM182 780h2v2h-2zM187 770h2v2h-2zM187 773h2v2h-2zM187 777h2v1h-1v1h-1zM187 780h2v2h-2zM190 770h2v2h-2zM191 773h1v2h-2v-1h1zM190 777h2v2h-1v-1h-1zM190 780h2v2h-2zM195 770h2v2h-2zM195 773h2v2h-2zM195 777h2v1h-1v1h-1zM195 780h2v2h-2zM198 770h2v2h-2zM199 773h1v2h-2v-1h1zM198 777h2v2h-1v-1h-1zM198 780h2v2h-2zM203 770h2v2h-2zM203 773h2v2h-2zM203 777h2v1h-1v1h-1zM203 780h2v2h-2zM206 770h2v2h-2zM207 773h1v2h-2v-1h1zM206 777h2v2h-1v-1h-1zM206 780h2v2h-2zM211 770h2v2h-2zM211 773h2v2h-2zM211 777h2v1h-1v1h-1zM211 780h2v2h-2zM214 770h2v2h-2zM215 773h1v2h-2v-1h1zM214 777h2v2h-1v-1h-1zM214 780h2v2h-2zM219 770h2v2h-2zM219 773h2v2h-2zM219 777h2v1h-1v1h-1zM219 780h2v2h-2zM222 770h2v2h-2zM223 773h1v2h-2v-1h1zM222 777h2v2h-1v-1h-1zM222 780h2v2h-2zM227 770h2v2h-2zM227 773h2v2h-2zM227 777h2v1h-1v1h-1zM227 780h2v2h-2zM230 770h2v2h-2zM231 773h1v2h-2v-1h1zM230 777h2v2h-1v-1h-1zM230 780h2v2h-2zM235 770h2v2h-2zM235 773h2v2h-2zM235 777h2v1h-1v1h-1zM235 780h2v2h-2zM238 770h2v2h-2zM239 773h1v2h-2v-1h1zM238 777h2v2h-1v-1h-1zM238 780h2v2h-2zM243 770h2v2h-2zM243 773h2v2h-2zM243 777h2v1h-1v1h-1zM243 780h2v2h-2zM246 770h2v2h-2zM247 773h1v2h-2v-1h1zM246 777h2v2h-1v-1h-1zM246 780h2v2h-2zM251 770h2v2h-2zM251 773h2v2h-2zM251 777h2v1h-1v1h-1zM251 780h2v2h-2zM254 770h2v2h-2zM255 773h1v2h-2v-1h1zM254 777h2v2h-1v-1h-1zM254 780h2v2h-2zM259 770h2v2h-2zM259 773h2v2h-2zM259 777h2v1h-1v1h-1zM259 780h2v2h-2zM262 770h2v2h-2zM263 773h1v2h-2v-1h1zM262 777h2v2h-1v-1h-1zM262 780h2v2h-2zM267 770h2v2h-2zM267 773h2v2h-2zM267 777h2v1h-1v1h-1zM267 780h2v2h-2zM270 770h2v2h-2zM271 773h1v2h-2v-1h1zM270 777h2v2h-1v-1h-1zM270 780h2v2h-2zM275 770h2v2h-2zM275 773h2v2h-2zM275 777h2v1h-1v1h-1zM275 780h2v2h-2zM278 770h2v2h-2zM279 773h1v2h-2v-1h1zM278 777h2v2h-1v-1h-1zM278 780h2v2h-2zM283 770h2v2h-2zM283 773h2v2h-2zM283 777h2v1h-1v1h-1zM283 780h2v2h-2zM286 770h2v2h-2zM287 773h1v2h-2v-1h1zM286 777h2v2h-1v-1h-1zM286 780h2v2h-2zM291 770h2v2h-2zM291 773h2v2h-2zM291 777h2v1h-1v1h-1zM291 780h2v2h-2zM294 770h2v2h-2zM295 773h1v2h-2v-1h1zM294 777h2v2h-1v-1h-1zM294 780h2v2h-2zM299 770h2v2h-2zM299 773h2v2h-2zM299 777h2v1h-1v1h-1zM299 780h2v2h-2zM302 770h2v2h-2zM303 773h1v2h-2v-1h1zM302 777h2v2h-1v-1h-1zM302 780h2v2h-2zM307 770h2v2h-2zM307 773h2v2h-2zM307 777h2v1h-1v1h-1zM307 780h2v2h-2zM310 770h2v2h-2zM311 773h1v2h-2v-1h1zM310 777h2v2h-1v-1h-1zM310 780h2v2h-2zM315 770h2v2h-2zM315 773h2v2h-2zM315 777h2v1h-1v1h-1zM315 780h2v2h-2zM318 770h2v2h-2zM319 773h1v2h-2v-1h1zM318 777h2v2h-1v-1h-1zM318 780h2v2h-2zM323 770h2v2h-2zM323 773h2v2h-2zM323 777h2v1h-1v1h-1zM323 780h2v2h-2zM326 770h2v2h-2zM327 773h1v2h-2v-1h1zM326 777h2v2h-1v-1h-1zM326 780h2v2h-2zM331 770h2v2h-2zM331 773h2v2h-2zM331 777h2v1h-1v1h-1zM331 780h2v2h-2zM334 770h2v2h-2zM335 773h1v2h-2v-1h1zM334 777h2v2h-1v-1h-1zM334 780h2v2h-2zM339 770h2v2h-2zM339 773h2v2h-2zM339 777h2v1h-1v1h-1zM339 780h2v2h-2zM342 770h2v2h-2zM343 773h1v2h-2v-1h1zM342 777h2v2h-1v-1h-1zM342 780h2v2h-2zM347 770h2v2h-2zM347 773h2v2h-2zM347 777h2v1h-1v1h-1zM347 780h2v2h-2zM350 770h2v2h-2zM351 773h1v2h-2v-1h1zM350 777h2v2h-1v-1h-1zM350 780h2v2h-2zM355 770h2v2h-2zM355 773h2v2h-2zM355 777h2v1h-1v1h-1zM355 780h2v2h-2zM358 770h2v2h-2zM359 773h1v2h-2v-1h1zM358 777h2v2h-1v-1h-1zM358 780h2v2h-2zM363 770h2v2h-2zM363 773h2v2h-2zM363 777h2v1h-1v1h-1zM363 780h2v2h-2zM366 770h2v2h-2zM367 773h1v2h-2v-1h1zM366 777h2v2h-1v-1h-1zM366 780h2v2h-2zM371 770h2v2h-2zM371 773h2v2h-2zM371 777h2v1h-1v1h-1zM371 780h2v2h-2zM374 770h2v2h-2zM375 773h1v2h-2v-1h1zM374 777h2v2h-1v-1h-1zM374 780h2v2h-2zM379 770h2v2h-2zM379 773h2v2h-2zM379 777h2v1h-1v1h-1zM379 780h2v2h-2zM382 770h2v2h-2zM383 773h1v2h-2v-1h1zM382 777h2v2h-1v-1h-1zM382 780h2v2h-2zM387 770h2v2h-2zM387 773h2v2h-2zM387 777h2v1h-1v1h-1zM387 780h2v2h-2zM390 770h2v2h-2zM391 773h1v2h-2v-1h1zM390 777h2v2h-1v-1h-1zM390 780h2v2h-2zM395 770h2v2h-2zM395 773h2v2h-2zM395 777h2v1h-1v1h-1zM395 780h2v2h-2zM398 770h2v2h-2zM399 773h1v2h-2v-1h1zM398 777h2v2h-1v-1h-1zM398 780h2v2h-2zM403 770h2v2h-2zM403 773h2v2h-2zM403 777h2v1h-1v1h-1zM403 780h2v2h-2zM406 770h2v2h-2zM407 773h1v2h-2v-1h1zM406 777h2v2h-1v-1h-1zM406 780h2v2h-2zM411 770h2v2h-2zM411 773h2v2h-2zM411 777h2v1h-1v1h-1zM411 780h2v2h-2zM414 770h2v2h-2zM415 773h1v2h-2v-1h1zM414 777h2v2h-1v-1h-1zM414 780h2v2h-2zM419 770h2v2h-2zM419 773h2v2h-2zM419 777h2v1h-1v1h-1zM419 780h2v2h-2zM422 770h2v2h-2zM423 773h1v2h-2v-1h1zM422 777h2v2h-1v-1h-1zM422 780h2v2h-2zM427 770h2v2h-2zM427 773h2v2h-2zM427 777h2v1h-1v1h-1zM427 780h2v2h-2zM430 770h2v2h-2zM431 773h1v2h-2v-1h1zM430 777h2v2h-1v-1h-1zM430 780h2v2h-2zM435 770h2v2h-2zM435 773h2v2h-2zM435 777h2v1h-1v1h-1zM435 780h2v2h-2zM438 770h2v2h-2zM439 773h1v2h-2v-1h1zM438 777h2v2h-1v-1h-1zM438 780h2v2h-2zM443 770h2v2h-2zM443 773h2v2h-2zM443 777h2v1h-1v1h-1zM443 780h2v2h-2zM446 770h2v2h-2zM447 773h1v2h-2v-1h1zM446 777h2v2h-1v-1h-1zM446 780h2v2h-2zM451 770h2v2h-2zM451 773h2v2h-2zM451 777h2v1h-1v1h-1zM451 780h2v2h-2zM454 770h2v2h-2zM455 773h1v2h-2v-1h1zM454 777h2v2h-1v-1h-1zM454 780h2v2h-2zM459 770h2v2h-2zM459 773h2v2h-2zM459 777h2v1h-1v1h-1zM459 780h2v2h-2zM462 770h2v2h-2zM463 773h1v2h-2v-1h1zM462 777h2v2h-1v-1h-1zM462 780h2v2h-2zM467 770h2v2h-2zM467 773h2v2h-2zM467 777h2v1h-1v1h-1zM467 780h2v2h-2zM470 770h2v2h-2zM471 773h1v2h-2v-1h1zM470 777h2v2h-1v-1h-1zM470 780h2v2h-2zM475 770h2v2h-2zM475 773h2v2h-2zM475 777h2v1h-1v1h-1zM475 780h2v2h-2zM478 770h2v2h-2zM479 773h1v2h-2v-1h1zM478 777h2v2h-1v-1h-1zM478 780h2v2h-2zM483 770h2v2h-2zM483 773h2v2h-2zM483 777h2v1h-1v1h-1zM483 780h2v2h-2zM486 770h2v2h-2zM487 773h1v2h-2v-1h1zM486 777h2v2h-1v-1h-1zM486 780h2v2h-2zM491 770h2v2h-2zM491 773h2v2h-2zM491 777h2v1h-1v1h-1zM491 780h2v2h-2zM494 770h2v2h-2zM495 773h1v2h-2v-1h1zM494 777h2v2h-1v-1h-1zM494 780h2v2h-2zM499 770h2v2h-2zM499 773h2v2h-2zM499 777h2v1h-1v1h-1zM499 780h2v2h-2zM502 770h2v2h-2zM503 773h1v2h-2v-1h1zM502 777h2v2h-1v-1h-1zM502 780h2v2h-2zM507 770h2v2h-2zM507 773h2v2h-2zM507 777h2v1h-1v1h-1zM507 780h2v2h-2zM510 770h2v2h-2zM511 773h1v2h-2v-1h1zM510 777h2v2h-1v-1h-1zM510 780h2v2h-2zM515 770h2v2h-2zM515 773h2v2h-2zM515 777h2v1h-1v1h-1zM515 780h2v2h-2zM518 770h2v2h-2zM519 773h1v2h-2v-1h1zM518 777h2v2h-1v-1h-1zM518 780h2v2h-2zM523 770h2v2h-2zM523 773h2v2h-2zM523 777h2v1h-1v1h-1zM523 780h2v2h-2zM526 770h2v2h-2zM527 773h1v2h-2v-1h1zM526 777h2v2h-1v-1h-1zM526 780h2v2h-2zM531 770h2v2h-2zM531 773h2v2h-2zM531 777h2v1h-1v1h-1zM531 780h2v2h-2zM534 770h2v2h-2zM535 773h1v2h-2v-1h1zM534 777h2v2h-1v-1h-1zM534 780h2v2h-2zM539 770h2v2h-2zM539 773h2v2h-2zM539 777h2v1h-1v1h-1zM539 780h2v2h-2zM542 770h2v2h-2zM543 773h1v2h-2v-1h1zM542 777h2v2h-1v-1h-1zM542 780h2v2h-2zM547 770h2v2h-2zM547 773h2v2h-2zM547 777h2v1h-1v1h-1zM547 780h2v2h-2zM550 770h2v2h-2zM551 773h1v2h-2v-1h1zM550 777h2v2h-1v-1h-1zM550 780h2v2h-2zM555 770h2v2h-2zM555 773h2v2h-2zM555 777h2v1h-1v1h-1zM555 780h2v2h-2zM558 770h2v2h-2zM559 773h1v2h-2v-1h1zM558 777h2v2h-1v-1h-1zM558 780h2v2h-2z"/>
<path fill="#a264b2" d="M19 786h2v2h-2zM19 789h2v2h-2zM19 793h2v1h-1v1h-1zM22 786h2v2h-2zM23 789h1v2h-2v-1h1zM22 793h2v2h-1v-1h-1zM27 786h2v2h-2zM27 789h2v2h-2zM27 793h2v1h-1v1h-1zM30 786h2v2h-2zM31 789h1v2h-2v-1h1zM30 793h2v2h-1v-1h-1zM35 786h2v2h-2zM35 789h2v2h-2zM35 793h2v1h-1v1h-1zM38 786h2v2h-2zM39 789h1v2h-2v-1h1zM38 793h2v2h-1v-1h-1zM43 786h2v2h-2zM43 789h2v2h-2zM43 793h2v1h-1v1h-1zM46 786h2v2h-2zM47 789h1v2h-2v-1h1zM46 793h2v2h-1v-1h-1zM51 786h2v2h-2zM51 789h2v2h-2zM51 793h2v1h-1v1h-1zM54 786h2v2h-2zM55 789h1v2h-2v-1h1zM54 793h2v2h-1v-1h-1zM59 786h2v2h-2zM59 789h2v2h-2zM59 793h2v1h-1v1h-1zM59 796h2v2h-2zM62 786h2v2h-2zM63 789h1v2h-2v-1h1zM62 793h2v2h-1v-1h-1zM62 796h2v2h-2zM67 786h2v2h-2zM67 789h2v2h-2zM67 793h2v1h-1v1h-1zM67 796h2v2h-2zM70 786h2v2h-2zM71 789h1v2h-2v-1h1zM70 793h2v2h-1v-1h-1zM70 796h2v2h-2zM75 786h2v2h-2zM75 789h2v2h-2zM75 793h2v1h-1v1h-1zM75 796h2v2h-2zM78 786h2v2h-2zM79 789h1v2h-2v-1h1zM78 793h2v2h-1v-1h-1zM78 796h2v2h-2zM83 786h2v2h-2zM83 789h2v2h-2zM83 793h2v1h-1v1h-1zM86 786h2v2h-2zM87 789h1v2h-2v-1h1zM86 793h2v2h-1v-1h-1zM86 796h2v2h-2zM91 786h2v2h-2zM91 789h2v2h-2zM91 793h2v1h-1v1h-1zM91 796h2v2h-2zM94 786h2v2h-2zM95 789h1v2h-2v-1h1zM94 793h2v2h-1v-1h-1zM94 796h2v2h-2zM102 786h2v2h-2zM118 786h2v2h-2zM119 789h1v2h-2v-1h1zM118 793h2v2h-1v-1h-1zM118 796h2v2h-2zM134 786h2v2h-2zM135 789h1v2h-2v-1h1zM134 793h2v2h-1v-1h-1zM134 796h2v2h-2zM155 786h2v2h-2zM155 789h2v2h-2zM155 793h2v1h-1v1h-1zM155 796h2v2h-2zM158 786h2v2h-2zM159 789h1v2h-2v-1h1zM158 793h2v2h-1v-1h-1zM158 796h2v2h-2zM163 786h2v2h-2zM163 789h2v2h-2zM163 793h2v1h-1v1h-1zM163 796h2v2h-2zM166 786h2v2h-2zM167 789h1v2h-2v-1h1zM166 793h2v2h-1v-1h-1zM166 796h2v2h-2zM171 786h2v2h-2zM174 786h2v2h-2zM179 786h2v2h-2zM182 786h2v2h-2zM187 786h2v2h-2zM187 789h2v2h-2zM190 786h2v2h-2zM195 786h2v2h-2zM198 786h2v2h-2zM199 789h1v2h-2v-1h1zM203 786h2v2h-2zM206 786h2v2h-2zM207 789h1v2h-2v-1h1zM206 793h2v2h-1v-1h-1zM206 796h2v2h-2zM211 786h2v2h-2zM211 789h2v2h-2zM211 793h2v1h-1v1h-1zM211 796h2v2h-2zM214 786h2v2h-2zM219 786h2v2h-2zM222 786h2v2h-2zM227 786h2v2h-2zM230 786h2v2h-2zM235 786h2v2h-2zM238 786h2v2h-2zM243 786h2v2h-2zM246 786h2v2h-2zM251 786h2v2h-2zM251 789h2v2h-2zM254 786h2v2h-2zM255 789h1v2h-2v-1h1zM254 793h2v2h-1v-1h-1zM254 796h2v2h-2zM259 786h2v2h-2zM259 789h2v2h-2zM262 786h2v2h-2zM263 789h1v2h-2v-1h1zM267 786h2v2h-2zM267 789h2v2h-2zM270 786h2v2h-2zM275 786h2v2h-2zM275 789h2v2h-2zM278 786h2v2h-2zM283 786h2v2h-2zM283 789h2v2h-2zM286 786h2v2h-2zM291 786h2v2h-2zM294 786h2v2h-2zM299 786h2v2h-2zM302 786h2v2h-2zM307 786h2v2h-2zM310 786h2v2h-2zM315 786h2v2h-2zM318 786h2v2h-2zM319 789h1v2h-2v-1h1zM323 786h2v2h-2zM326 786h2v2h-2zM327 789h1v2h-2v-1h1zM331 786h2v2h-2zM334 786h2v2h-2zM339 786h2v2h-2zM342 786h2v2h-2zM347 786h2v2h-2zM350 786h2v2h-2zM355 786h2v2h-2zM363 786h2v2h-2zM366 786h2v2h-2zM371 786h2v2h-2zM374 786h2v2h-2zM379 786h2v2h-2zM382 786h2v2h-2zM387 786h2v2h-2zM387 789h2v2h-2zM390 786h2v2h-2zM395 786h2v2h-2zM398 786h2v2h-2zM403 786h2v2h-2zM406 786h2v2h-2zM411 786h2v2h-2zM414 786h2v2h-2zM415 789h1v2h-2v-1h1zM419 786h2v2h-2zM422 786h2v2h-2zM427 786h2v2h-2zM430 786h2v2h-2zM435 786h2v2h-2zM438 786h2v2h-2zM443 786h2v2h-2zM446 786h2v2h-2zM451 786h2v2h-2zM454 786h2v2h-2zM459 786h2v2h-2zM462 786h2v2h-2zM467 786h2v2h-2zM470 786h2v2h-2zM475 786h2v2h-2zM478 786h2v2h-2zM483 786h2v2h-2zM491 786h2v2h-2zM494 786h2v2h-2zM499 786h2v2h-2zM502 786h2v2h-2zM507 786h2v2h-2zM510 786h2v2h-2zM515 786h2v2h-2zM518 786h2v2h-2zM523 786h2v2h-2zM526 786h2v2h-2zM527 789h1v2h-2v-1h1zM526 793h2v2h-1v-1h-1zM526 796h2v2h-2zM531 786h2v2h-2zM531 789h2v2h-2zM534 786h2v2h-2zM535 789h1v2h-2v-1h1zM534 793h2v2h-1v-1h-1zM534 796h2v2h-2zM539 786h2v2h-2zM542 786h2v2h-2zM547 786h2v2h-2zM550 786h2v2h-2zM555 786h2v2h-2zM558 786h2v2h-2z"/>
<path fill="#c08ace" d="M59 802h2v2h-2zM59 805h2v2h-2zM59 809h2v1h-1v1h-1zM59 812h2v2h-2zM62 802h2v2h-2zM63 805h1v2h-2v-1h1zM67 802h2v2h-2zM67 805h2v2h-2zM67 809h2v1h-1v1h-1zM70 802h2v2h-2zM71 805h1v2h-2v-1h1zM70 809h2v2h-1v-1h-1zM75 802h2v2h-2zM75 805h2v2h-2zM75 809h2v1h-1v1h-1zM75 812h2v2h-2zM78 802h2v2h-2zM79 805h1v2h-2v-1h1zM78 809h2v2h-1v-1h-1zM78 812h2v2h-2zM86 802h2v2h-2zM87 805h1v2h-2v-1h1zM86 809h2v2h-1v-1h-1zM86 812h2v2h-2zM91 802h2v2h-2zM91 805h2v2h-2zM91 809h2v1h-1v1h-1zM91 812h2v2h-2zM94 802h2v2h-2zM95 805h1v2h-2v-1h1zM94 809h2v2h-1v-1h-1zM94 812h2v2h-2zM118 802h2v2h-2zM119 805h1v2h-2v-1h1zM118 809h2v2h-1v-1h-1zM118 812h2v2h-2zM134 802h2v2h-2zM135 805h1v2h-2v-1h1zM134 809h2v2h-1v-1h-1zM134 812h2v2h-2zM155 802h2v2h-2zM155 805h2v2h-2zM155 809h2v1h-1v1h-1zM155 812h2v2h-2zM158 802h2v2h-2zM159 805h1v2h-2v-1h1zM158 809h2v2h-1v-1h-1zM158 812h2v2h-2zM163 802h2v2h-2zM163 805h2v2h-2zM163 809h2v1h-1v1h-1zM163 812h2v2h-2zM166 802h2v2h-2zM167 805h1v2h-2v-1h1zM166 809h2v2h-1v-1h-1zM166 812h2v2h-2zM206 802h2v2h-2zM207 805h1v2h-2v-1h1zM206 809h2v2h-1v-1h-1zM206 812h2v2h-2zM211 802h2v2h-2zM211 805h2v2h-2zM211 809h2v1h-1v1h-1zM211 812h2v2h-2zM254 802h2v2h-2zM255 805h1v2h-2v-1h1zM254 809h2v2h-1v-1h-1zM254 812h2v2h-2zM526 802h2v2h-2zM527 805h1v2h-2v-1h1zM526 809h2v2h-1v-1h-1zM526 812h2v2h-2zM534 802h2v2h-2zM535 805h1v2h-2v-1h1zM534 809h2v2h-1v-1h-1zM534 812h2v2h-2z"/>
<path fill="#d8a8e4" d="M59 818h2v2h-2zM59 821h2v2h-2zM59 825h2v1h-1v1h-1zM59 828h2v2h-2zM75 818h2v2h-2zM75 821h2v2h-2zM75 825h2v1h-1v1h-1zM75 828h2v2h-2zM78 818h2v2h-2zM79 821h1v2h-2v-1h1zM78 825h2v2h-1v-1h-1zM78 828h2v2h-2zM86 818h2v2h-2zM87 821h1v2h-2v-1h1zM86 825h2v2h-1v-1h-1zM86 828h2v2h-2zM91 818h2v2h-2zM91 821h2v2h-2zM91 825h2v1h-1v1h-1zM91 828h2v2h-2zM94 818h2v2h-2zM95 821h1v2h-2v-1h1zM94 825h2v2h-1v-1h-1zM94 828h2v2h-2zM118 818h2v2h-2zM119 821h1v2h-2v-1h1zM118 825h2v2h-1v-1h-1zM118 828h2v2h-2zM134 818h2v2h-2zM135 821h1v2h-2v-1h1zM134 825h2v2h-1v-1h-1zM134 828h2v2h-2zM155 818h2v2h-2zM155 821h2v2h-2zM155 825h2v1h-1v1h-1zM155 828h2v2h-2zM158 818h2v2h-2zM159 821h1v2h-2v-1h1zM158 825h2v2h-1v-1h-1zM158 828h2v2h-2zM163 818h2v2h-2zM163 821h2v2h-2zM163 825h2v1h-1v1h-1zM163 828h2v2h-2zM166 818h2v2h-2zM167 821h1v2h-2v-1h1zM166 825h2v2h-1v-1h-1zM166 828h2v2h-2zM206 818h2v2h-2zM207 821h1v2h-2v-1h1zM206 825h2v2h-1v-1h-1zM206 828h2v2h-2zM211 818h2v2h-2zM211 821h2v2h-2zM211 825h2v1h-1v1h-1zM211 828h2v2h-2zM254 818h2v2h-2zM255 821h1v2h-2v-1h1zM254 825h2v2h-1v-1h-1zM254 828h2v2h-2zM526 818h2v2h-2zM527 821h1v2h-2v-1h1zM526 825h2v2h-1v-1h-1zM526 828h2v2h-2zM534 818h2v2h-2zM535 821h1v2h-2v-1h1zM534 825h2v2h-1v-1h-1zM534 828h2v2h-2z"/>
<path fill="#f0c8f4" d="M59 834h2v2h-2zM59 837h2v2h-2zM59 841h2v1h-1v1h-1zM59 844h2v2h-2zM75 834h2v2h-2zM75 837h2v2h-2zM75 841h2v1h-1v1h-1zM75 844h2v2h-2zM78 834h2v2h-2zM79 837h1v2h-2v-1h1zM86 834h2v2h-2zM87 837h1v2h-2v-1h1zM86 841h2v2h-1v-1h-1zM86 844h2v2h-2zM91 834h2v2h-2zM91 837h2v2h-2zM118 834h2v2h-2zM119 837h1v2h-2v-1h1zM118 841h2v2h-1v-1h-1zM118 844h2v2h-2zM134 834h2v2h-2zM135 837h1v2h-2v-1h1zM134 841h2v2h-1v-1h-1zM134 844h2v2h-2zM155 834h2v2h-2zM155 837h2v2h-2zM155 841h2v1h-1v1h-1zM155 844h2v2h-2zM158 834h2v2h-2zM163 834h2v2h-2zM163 837h2v2h-2zM166 834h2v2h-2zM167 837h1v2h-2v-1h1zM166 841h2v2h-1v-1h-1zM166 844h2v2h-2zM206 834h2v2h-2zM207 837h1v2h-2v-1h1zM206 841h2v2h-1v-1h-1zM206 844h2v2h-2zM211 834h2v2h-2zM211 837h2v2h-2zM211 841h2v1h-1v1h-1zM211 844h2v2h-2zM254 834h2v2h-2zM255 837h1v2h-2v-1h1zM254 841h2v2h-1v-1h-1zM254 844h2v2h-2zM526 834h2v2h-2zM527 837h1v2h-2v-1h1zM526 841h2v2h-1v-1h-1zM526 844h2v2h-2zM534 834h2v2h-2zM535 837h1v2h-2v-1h1zM534 841h2v2h-1v-1h-1zM534 844h2v2h-2z"/>
<path fill="#86e2ae" d="M1654 476h2v2h-2z"/>
<rect x="183" y="611" width="1" height="1" fill="#ffffff"/>
<path d="M569 691h8l-4 8z" fill="#c8c8c8"/>
<path d="M569 707h8l-4 8z" fill="#c8c8c8"/>
<path d="M569 723h8l-4 8z" fill="#c8c8c8"/>
<path d="M569 763h8l-4 -8z" fill="#c8c8c8"/>
<path d="M569 779h8l-4 -8z" fill="#c8c8c8"/>
<path d="M569 795h8l-4 -8z" fill="#c8c8c8"/>
<rect x="809.5" y="307.5" width="6" height="7" fill="none" stroke="#cc4444" stroke-width="1"/>
<rect x="953.5" y="307.5" width="6" height="7" fill="none" stroke="#cc4444" stroke-width="1"/>
<rect x="937.5" y="851.5" width="5" height="7" fill="none" stroke="#505050" stroke-width="1"/>
</svg>
<div id="txt"><div class="t" style="left:32px;top:30px;color:#cc4444">¹</div><div class="t" style="left:40px;top:30px;color:#f4f4f4">cpu</div><div class="t" style="left:96px;top:30px;color:#cc4444">m</div><div class="t" style="left:104px;top:30px;color:#f4f4f4">enu</div><div class="t" style="left:144px;top:30px;color:#cc4444">p</div><div class="t" style="left:152px;top:30px;color:#f4f4f4">reset *</div><div class="t" style="left:848px;top:30px;color:#f4f4f4">19:40:09</div><div class="t" style="left:1632px;top:30px;color:#cc4444">-</div><div class="t" style="left:1648px;top:30px;color:#f4f4f4">2000ms</div><div class="t" style="left:1704px;top:30px;color:#cc4444">+</div><div class="t" style="left:1584px;top:110px;color:#f4f4f4">E5-2680</div><div class="t" style="left:1656px;top:110px;color:#f4f4f4">2.8 GHz</div><div class="t" style="left:1568px;top:126px;color:#ececec">CPU</div><div class="t" style="left:1704px;top:126px;color:#84deaa">0</div><div class="t" style="left:1712px;top:126px;color:#ececec">%</div><div class="t" style="left:1568px;top:142px;color:#ececec">C0</div><div class="t" style="left:1704px;top:142px;color:#84deaa">0</div><div class="t" style="left:1712px;top:142px;color:#ececec">%</div><div class="t" style="left:1568px;top:158px;color:#ececec">C1</div><div class="t" style="left:1704px;top:158px;color:#84deaa">0</div><div class="t" style="left:1712px;top:158px;color:#ececec">%</div><div class="t" style="left:1568px;top:174px;color:#ececec">C2</div><div class="t" style="left:1704px;top:174px;color:#84deaa">1</div><div class="t" style="left:1712px;top:174px;color:#ececec">%</div><div class="t" style="left:1568px;top:190px;color:#ececec">C3</div><div class="t" style="left:1704px;top:190px;color:#84deaa">0</div><div class="t" style="left:1712px;top:190px;color:#ececec">%</div><div class="t" style="left:1568px;top:206px;color:#ececec">LAV: 0.01 0.01 0.05</div><div class="t" style="left:24px;top:270px;color:#6c6c6c">up 00:57:01</div><div class="t" style="left:32px;top:302px;color:#cc4444">²</div><div class="t" style="left:40px;top:302px;color:#f4f4f4">mem</div><div class="t" style="left:416px;top:302px;color:#cc4444">d</div><div class="t" style="left:424px;top:302px;color:#f4f4f4">isks</div><div class="t" style="left:744px;top:302px;color:#cc4444">i</div><div class="t" style="left:752px;top:302px;color:#f4f4f4">o</div><div class="t" style="left:816px;top:302px;color:#f4f4f4">proc</div><div class="t" style="left:864px;top:302px;color:#cc4444">f</div><div class="t" style="left:880px;top:302px;color:#f4f4f4">php-fpm_</div><div class="t" style="left:1416px;top:302px;color:#f4f4f4">per-</div><div class="t" style="left:1448px;top:302px;color:#cc4444">c</div><div class="t" style="left:1456px;top:302px;color:#f4f4f4">ore</div><div class="t" style="left:1496px;top:302px;color:#cc4444">r</div><div class="t" style="left:1504px;top:302px;color:#f4f4f4">everse</div><div class="t" style="left:1568px;top:302px;color:#f4f4f4">tre</div><div class="t" style="left:1592px;top:302px;color:#cc4444">e</div><div class="t" style="left:1616px;top:302px;color:#cc4444">&lt;</div><div class="t" style="left:1632px;top:302px;color:#f4f4f4">cpu lazy</div><div class="t" style="left:1704px;top:302px;color:#cc4444">&gt;</div><div class="t" style="left:24px;top:318px;color:#ececec">Total:</div><div class="t" style="left:320px;top:318px;color:#ececec">7.63 GiB</div><div class="t" style="left:408px;top:318px;color:#ececec">root</div><div class="t" style="left:704px;top:318px;color:#ececec">58.9</div><div class="t" style="left:744px;top:318px;color:#ececec">GiB</div><div class="t" style="left:824px;top:318px;color:#f4f4f4">Pid: Program:</div><div class="t" style="left:1000px;top:318px;color:#f4f4f4">Command:</div><div class="t" style="left:1424px;top:318px;color:#f4f4f4">Threads: User:</div><div class="t" style="left:1592px;top:318px;color:#f4f4f4">MemB</div><div class="t" style="left:1680px;top:318px;color:#f4f4f4">Cpu%</div><div class="t" style="left:24px;top:334px;color:#ececec">Used:</div><div class="t" style="left:328px;top:334px;color:#ececec">819</div><div class="t" style="left:360px;top:334px;color:#ececec">MiB</div><div class="t" style="left:408px;top:334px;color:#d4d4d4">IO%</div><div class="t" style="left:816px;top:334px;color:#e4e4e4">15483</div><div class="t" style="left:864px;top:334px;color:#84e0aa">php-fpm</div><div class="t" style="left:1000px;top:334px;color:#e4e4e4">php-fpm: pool brainy.conf</div><div class="t" style="left:1480px;top:334px;color:#84e0aa">1</div><div class="t" style="left:1496px;top:334px;color:#e4e4e4">root</div><div class="t" style="left:1600px;top:334px;color:#84e0aa">33M</div><div class="t" style="left:1688px;top:334px;color:#84e0aa">0.0</div><div class="t" style="left:32px;top:350px;color:#ececec">10%</div><div class="t" style="left:408px;top:350px;color:#ececec">Used: 29%</div><div class="t" style="left:704px;top:350px;color:#ececec">17.3 GiB</div><div class="t" style="left:824px;top:350px;color:#e1e1e1">1042</div><div class="t" style="left:864px;top:350px;color:#83dda8">php-fpm</div><div class="t" style="left:1000px;top:350px;color:#e1e1e1">php-fpm: pool brainy.conf</div><div class="t" style="left:1480px;top:350px;color:#83dda8">1</div><div class="t" style="left:1496px;top:350px;color:#e1e1e1">root</div><div class="t" style="left:1600px;top:350px;color:#83dda8">36M</div><div class="t" style="left:1688px;top:350px;color:#83dda8">0.0</div><div class="t" style="left:408px;top:366px;color:#ececec">Free: 71%</div><div class="t" style="left:704px;top:366px;color:#ececec">41.5 GiB</div><div class="t" style="left:824px;top:366px;color:#dedede">1031</div><div class="t" style="left:864px;top:366px;color:#81daa6">php-fpm</div><div class="t" style="left:1000px;top:366px;color:#dedede">php-fpm: pool brainy.conf</div><div class="t" style="left:1480px;top:366px;color:#81daa6">1</div><div class="t" style="left:1496px;top:366px;color:#dedede">root</div><div class="t" style="left:1600px;top:366px;color:#81daa6">51M</div><div class="t" style="left:1688px;top:366px;color:#81daa6">0.0</div><div class="t" style="left:824px;top:382px;color:#dbdbdb">1038</div><div class="t" style="left:864px;top:382px;color:#80d7a4">php-fpm</div><div class="t" style="left:1000px;top:382px;color:#dbdbdb">php-fpm: pool brainy.conf</div><div class="t" style="left:1480px;top:382px;color:#80d7a4">1</div><div class="t" style="left:1496px;top:382px;color:#dbdbdb">root</div><div class="t" style="left:1600px;top:382px;color:#80d7a4">46M</div><div class="t" style="left:1688px;top:382px;color:#80d7a4">0.0</div><div class="t" style="left:24px;top:398px;color:#ececec">Available:</div><div class="t" style="left:320px;top:398px;color:#ececec">6.83</div><div class="t" style="left:360px;top:398px;color:#ececec">GiB</div><div class="t" style="left:408px;top:398px;color:#ececec">swap</div><div class="t" style="left:704px;top:398px;color:#ececec">2.99</div><div class="t" style="left:744px;top:398px;color:#ececec">GiB</div><div class="t" style="left:824px;top:398px;color:#d7d7d7">1040</div><div class="t" style="left:864px;top:398px;color:#7fd4a2">php-fpm</div><div class="t" style="left:1000px;top:398px;color:#d7d7d7">php-fpm: pool brainy.conf</div><div class="t" style="left:1480px;top:398px;color:#7fd4a2">1</div><div class="t" style="left:1496px;top:398px;color:#d7d7d7">root</div><div class="t" style="left:1600px;top:398px;color:#7fd4a2">33M</div><div class="t" style="left:1688px;top:398px;color:#7fd4a2">0.0</div><div class="t" style="left:32px;top:414px;color:#ececec">90%</div><div class="t" style="left:408px;top:414px;color:#ececec">Used:</div><div class="t" style="left:464px;top:414px;color:#ececec">0%</div><div class="t" style="left:720px;top:414px;color:#ececec">0 Byte</div><div class="t" style="left:824px;top:414px;color:#d4d4d4">1030</div><div class="t" style="left:864px;top:414px;color:#7dd1a0">php-fpm</div><div class="t" style="left:1000px;top:414px;color:#d4d4d4">php-fpm: pool brainy.conf</div><div class="t" style="left:1480px;top:414px;color:#7dd1a0">1</div><div class="t" style="left:1496px;top:414px;color:#d4d4d4">root</div><div class="t" style="left:1600px;top:414px;color:#7dd1a0">46M</div><div class="t" style="left:1688px;top:414px;color:#7dd1a0">0.0</div><div class="t" style="left:408px;top:430px;color:#ececec">Free:100%</div><div class="t" style="left:704px;top:430px;color:#ececec">2.99 GiB</div><div class="t" style="left:816px;top:430px;color:#d1d1d1">64641</div><div class="t" style="left:864px;top:430px;color:#7cce9e">php-fpm</div><div class="t" style="left:1000px;top:430px;color:#d1d1d1">php-fpm: master process (/etc/php74w/php-fpm.a156.itdeve</div><div class="t" style="left:1480px;top:430px;color:#7cce9e">1</div><div class="t" style="left:1496px;top:430px;color:#d1d1d1">root</div><div class="t" style="left:1600px;top:430px;color:#7cce9e">92M</div><div class="t" style="left:1688px;top:430px;color:#7cce9e">0.0</div><div class="t" style="left:816px;top:446px;color:#cecece">64650</div><div class="t" style="left:864px;top:446px;color:#7acb9c">php-fpm</div><div class="t" style="left:1000px;top:446px;color:#cecece">php-fpm: master process (/etc/php82w/php-fpm.b156.itdeve</div><div class="t" style="left:1480px;top:446px;color:#7acb9c">1</div><div class="t" style="left:1496px;top:446px;color:#cecece">root</div><div class="t" style="left:1600px;top:446px;color:#7acb9c">87M</div><div class="t" style="left:1688px;top:446px;color:#7acb9c">0.0</div><div class="t" style="left:24px;top:462px;color:#ececec">Cached:</div><div class="t" style="left:320px;top:462px;color:#ececec">4.87</div><div class="t" style="left:360px;top:462px;color:#ececec">GiB</div><div class="t" style="left:832px;top:462px;color:#cbcbcb">898</div><div class="t" style="left:864px;top:462px;color:#79c89a">php-fpm</div><div class="t" style="left:1000px;top:462px;color:#cbcbcb">php-fpm: master process (/usr/local/brainycp/src/compile</div><div class="t" style="left:1480px;top:462px;color:#79c89a">1</div><div class="t" style="left:1496px;top:462px;color:#cbcbcb">root</div><div class="t" style="left:1600px;top:462px;color:#79c89a">61M</div><div class="t" style="left:1688px;top:462px;color:#79c89a">0.0</div><div class="t" style="left:32px;top:478px;color:#ececec">64%</div><div class="t" style="left:816px;top:478px;color:#c8c8c8">56878</div><div class="t" style="left:864px;top:478px;color:#78c598">php-fpm</div><div class="t" style="left:1000px;top:478px;color:#c8c8c8">php-fpm: pool brainy.conf</div><div class="t" style="left:1480px;top:478px;color:#78c598">1</div><div class="t" style="left:1496px;top:478px;color:#c8c8c8">root</div><div class="t" style="left:1600px;top:478px;color:#78c598">27M</div><div class="t" style="left:1688px;top:478px;color:#78c598">0.0</div><div class="t" style="left:832px;top:494px;color:#c4c4c4">900</div><div class="t" style="left:864px;top:494px;color:#76c196">php-fpm</div><div class="t" style="left:1000px;top:494px;color:#c4c4c4">php-fpm: master process (/usr/local/brainycp/src/compile</div><div class="t" style="left:1480px;top:494px;color:#76c196">1</div><div class="t" style="left:1496px;top:494px;color:#c4c4c4">root</div><div class="t" style="left:1600px;top:494px;color:#76c196">36M</div><div class="t" style="left:1688px;top:494px;color:#76c196">0.0</div><div class="t" style="left:816px;top:510px;color:#c1c1c1">64658</div><div class="t" style="left:864px;top:510px;color:#75be94">php-fpm</div><div class="t" style="left:1000px;top:510px;color:#c1c1c1">php-fpm: master process (/etc/php84w/php-fpm.c156.itdeve</div><div class="t" style="left:1480px;top:510px;color:#75be94">1</div><div class="t" style="left:1496px;top:510px;color:#c1c1c1">root</div><div class="t" style="left:1600px;top:510px;color:#75be94">15M</div><div class="t" style="left:1688px;top:510px;color:#75be94">0.0</div><div class="t" style="left:24px;top:526px;color:#ececec">Free:</div><div class="t" style="left:320px;top:526px;color:#ececec">1.72</div><div class="t" style="left:360px;top:526px;color:#ececec">GiB</div><div class="t" style="left:832px;top:526px;color:#bebebe">977</div><div class="t" style="left:864px;top:526px;color:#74bb92">php-fpm</div><div class="t" style="left:1000px;top:526px;color:#bebebe">php-fpm: pool brainy.conf</div><div class="t" style="left:1480px;top:526px;color:#74bb92">1</div><div class="t" style="left:1496px;top:526px;color:#bebebe">root</div><div class="t" style="left:1592px;top:526px;color:#74bb92">8.5M</div><div class="t" style="left:1688px;top:526px;color:#74bb92">0.0</div><div class="t" style="left:32px;top:542px;color:#ececec">23%</div><div class="t" style="left:832px;top:542px;color:#bbbbbb">979</div><div class="t" style="left:864px;top:542px;color:#72b890">php-fpm</div><div class="t" style="left:1000px;top:542px;color:#bbbbbb">php-fpm: pool brainy.conf</div><div class="t" style="left:1480px;top:542px;color:#72b890">1</div><div class="t" style="left:1496px;top:542px;color:#bbbbbb">root</div><div class="t" style="left:1592px;top:542px;color:#72b890">8.5M</div><div class="t" style="left:1688px;top:542px;color:#72b890">0.0</div><div class="t" style="left:832px;top:558px;color:#b8b8b8">981</div><div class="t" style="left:864px;top:558px;color:#71b58e">php-fpm</div><div class="t" style="left:1000px;top:558px;color:#b8b8b8">php-fpm: pool brainy.conf</div><div class="t" style="left:1480px;top:558px;color:#71b58e">1</div><div class="t" style="left:1496px;top:558px;color:#b8b8b8">root</div><div class="t" style="left:1592px;top:558px;color:#71b58e">8.4M</div><div class="t" style="left:1688px;top:558px;color:#71b58e">0.0</div><div class="t" style="left:832px;top:574px;color:#b5b5b5">982</div><div class="t" style="left:864px;top:574px;color:#6fb28c">php-fpm</div><div class="t" style="left:1000px;top:574px;color:#b5b5b5">php-fpm: pool brainy.conf</div><div class="t" style="left:1480px;top:574px;color:#6fb28c">1</div><div class="t" style="left:1496px;top:574px;color:#b5b5b5">root</div><div class="t" style="left:1592px;top:574px;color:#6fb28c">8.4M</div><div class="t" style="left:1688px;top:574px;color:#6fb28c">0.0</div><div class="t" style="left:832px;top:590px;color:#b1b1b1">986</div><div class="t" style="left:864px;top:590px;color:#6eaf8a">php-fpm</div><div class="t" style="left:1000px;top:590px;color:#b1b1b1">php-fpm: pool brainyservice.conf</div><div class="t" style="left:1480px;top:590px;color:#6eaf8a">1</div><div class="t" style="left:1496px;top:590px;color:#b1b1b1">brainyser+</div><div class="t" style="left:1600px;top:590px;color:#6eaf8a">13M</div><div class="t" style="left:1688px;top:590px;color:#6eaf8a">0.0</div><div class="t" style="left:32px;top:606px;color:#cc4444">³</div><div class="t" style="left:40px;top:606px;color:#f4f4f4">net</div><div class="t" style="left:544px;top:606px;color:#f4f4f4">s</div><div class="t" style="left:552px;top:606px;color:#cc4444">y</div><div class="t" style="left:560px;top:606px;color:#f4f4f4">nc</div><div class="t" style="left:592px;top:606px;color:#cc4444">a</div><div class="t" style="left:600px;top:606px;color:#f4f4f4">uto</div><div class="t" style="left:640px;top:606px;color:#cc4444">z</div><div class="t" style="left:648px;top:606px;color:#f4f4f4">ero</div><div class="t" style="left:688px;top:606px;color:#cc4444">&lt;b</div><div class="t" style="left:712px;top:606px;color:#f4f4f4">eth0</div><div class="t" style="left:752px;top:606px;color:#cc4444">n&gt;</div><div class="t" style="left:832px;top:606px;color:#aeaeae">987</div><div class="t" style="left:864px;top:606px;color:#6dac88">php-fpm</div><div class="t" style="left:1000px;top:606px;color:#aeaeae">php-fpm: pool brainyservice.conf</div><div class="t" style="left:1480px;top:606px;color:#6dac88">1</div><div class="t" style="left:1496px;top:606px;color:#aeaeae">brainyser+</div><div class="t" style="left:1600px;top:606px;color:#6dac88">13M</div><div class="t" style="left:1688px;top:606px;color:#6dac88">0.0</div><div class="t" style="left:16px;top:622px;color:#6c6c6c">28K</div><div class="t" style="left:824px;top:622px;color:#ababab">1044</div><div class="t" style="left:864px;top:622px;color:#6ba986">php-fpm</div><div class="t" style="left:1000px;top:622px;color:#ababab">php-fpm: pool brainyservice.conf</div><div class="t" style="left:1480px;top:622px;color:#6ba986">1</div><div class="t" style="left:1496px;top:622px;color:#ababab">brainyser+</div><div class="t" style="left:1600px;top:622px;color:#6ba986">15M</div><div class="t" style="left:1688px;top:622px;color:#6ba986">0.0</div><div class="t" style="left:824px;top:638px;color:#a8a8a8">1046</div><div class="t" style="left:864px;top:638px;color:#6aa684">php-fpm</div><div class="t" style="left:1000px;top:638px;color:#a8a8a8">php-fpm: pool brainyservice.conf</div><div class="t" style="left:1480px;top:638px;color:#6aa684">1</div><div class="t" style="left:1496px;top:638px;color:#a8a8a8">brainyser+</div><div class="t" style="left:1600px;top:638px;color:#6aa684">15M</div><div class="t" style="left:1688px;top:638px;color:#6aa684">0.0</div><div class="t" style="left:584px;top:670px;color:#f4f4f4">download</div><div class="t" style="left:584px;top:686px;color:#ececec">5.41 KiB/s (43.3 Kibps)</div><div class="t" style="left:584px;top:702px;color:#ececec">Top:</div><div class="t" style="left:672px;top:702px;color:#ececec">(1.21 Mibps)</div><div class="t" style="left:584px;top:718px;color:#ececec">Total:</div><div class="t" style="left:712px;top:718px;color:#ececec">363 MiB</div><div class="t" style="left:584px;top:750px;color:#ececec">12.8 KiB/s</div><div class="t" style="left:680px;top:750px;color:#ececec">(102 Kibps)</div><div class="t" style="left:584px;top:766px;color:#ececec">Top:</div><div class="t" style="left:672px;top:766px;color:#ececec">(4.51 Mibps)</div><div class="t" style="left:584px;top:782px;color:#ececec">Total:</div><div class="t" style="left:704px;top:782px;color:#ececec">42.6 MiB</div><div class="t" style="left:584px;top:798px;color:#f4f4f4">upload</div><div class="t" style="left:16px;top:830px;color:#6c6c6c">28K</div><div class="t" style="left:800px;top:846px;color:#808080">↑</div><div class="t" style="left:816px;top:846px;color:#f4f4f4">select</div><div class="t" style="left:872px;top:846px;color:#cc4444">↓</div><div class="t" style="left:896px;top:846px;color:#505050">info</div><div class="t" style="left:960px;top:846px;color:#505050">terminate</div><div class="t" style="left:1048px;top:846px;color:#505050">kill</div><div class="t" style="left:1096px;top:846px;color:#505050">signals</div><div class="t" style="left:1688px;top:846px;color:#f4f4f4">0/20</div></div>
</body></html>
